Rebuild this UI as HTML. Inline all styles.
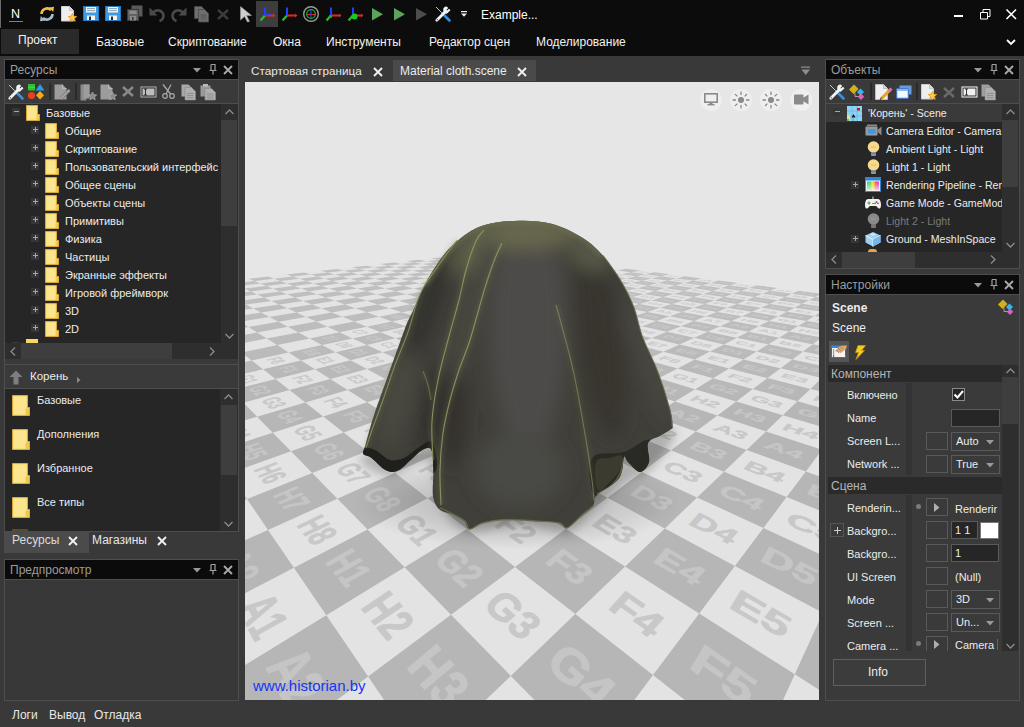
<!DOCTYPE html><html><head><meta charset="utf-8"><style>
*{box-sizing:border-box}
html,body{margin:0;padding:0}
body{width:1024px;height:727px;overflow:hidden;position:relative;background:#393939;font-family:"Liberation Sans",sans-serif;color:#e6e6e6;font-size:12px}
.a{position:absolute}
.t{position:absolute;white-space:nowrap;line-height:14px}
.hdr{position:absolute;background:#0b0b0b}
.ht{position:absolute;color:#9c9c9c;font-size:12px;white-space:nowrap;line-height:14px}
svg{position:absolute;overflow:visible}
</style></head><body><div class="a" style="left:0;top:0;width:1024px;height:56px;background:#0c0c0c"></div>
<div class="a" style="left:0;top:0;width:1px;height:28px;background:#6a6a6a"></div>
<div class="t" style="left:11px;top:7px;font-size:12.5px;color:#fff">N</div>
<div class="a" style="left:9px;top:21px;width:14px;height:1px;background:#1a9cf0"></div>
<div class="t" style="left:481px;top:8px;font-size:12px;color:#fff">Example...</div>
<div class="a" style="left:954px;top:15px;width:9px;height:2px;background:#fff"></div>
<svg style="left:980px;top:9px" width="11" height="11"><path d="M0.5 3.5h7v6.5h-7z M3 3.5V0.5h7v7H7.5" fill="none" stroke="#fff" stroke-width="1"/></svg>
<svg style="left:1006px;top:9px" width="11" height="11"><path d="M0.5 0.5L10 10M10 0.5L0.5 10" stroke="#fff" stroke-width="1.6"/></svg>
<div class="a" style="left:1px;top:29px;width:78px;height:25px;background:#2a2a2a"></div>
<div class="t" style="left:18px;top:33px;font-size:12px;color:#f2f2f2">Проект</div>
<div class="t" style="left:96px;top:35px;font-size:12px;color:#f2f2f2">Базовые</div>
<div class="t" style="left:168px;top:35px;font-size:12px;color:#f2f2f2">Скриптование</div>
<div class="t" style="left:273px;top:35px;font-size:12px;color:#f2f2f2">Окна</div>
<div class="t" style="left:326px;top:35px;font-size:12px;color:#f2f2f2">Инструменты</div>
<div class="t" style="left:429px;top:35px;font-size:12px;color:#f2f2f2">Редактор сцен</div>
<div class="t" style="left:536px;top:35px;font-size:12px;color:#f2f2f2">Моделирование</div>
<svg style="left:1006px;top:39px" width="10" height="7"><path d="M1 1L5 5L9 1" fill="none" stroke="#fff" stroke-width="1.8"/></svg>
<svg style="left:39px;top:6px" width="16" height="16" viewBox="0 0 16 16"><path d="M2.5 8A5.5 5.5 0 0 1 12 4.2" fill="none" stroke="#f2c040" stroke-width="2.6"/><path d="M10 1.5L15 0.8L14.2 6z" fill="#f2c040"/><path d="M13.5 8A5.5 5.5 0 0 1 4 11.8" fill="none" stroke="#a9bccd" stroke-width="2.6"/><path d="M6 14.5L1 15.2L1.8 10z" fill="#a9bccd"/></svg>
<svg style="left:61px;top:6px" width="16" height="16" viewBox="0 0 16 16"><path d="M0.5 0.5h8l4 4v10.5h-12z" fill="#eeeeee" stroke="#cfcfcf" stroke-width="1"/><path d="M8.5 0.5v4h4" fill="#dcdcdc" stroke="#bbb" stroke-width="0.8"/><path d="M11.5 7.5l1.3 2.7 2.9 0.3-2.2 1.9 0.7 2.9-2.7-1.5-2.7 1.5 0.7-2.9-2.2-1.9 2.9-0.3z" fill="#f8cf50" stroke="#e89a20" stroke-width="0.9"/></svg>
<svg style="left:83px;top:6px" width="16" height="15" viewBox="0 0 16 15"><rect x="0" y="0" width="16" height="15" rx="1" fill="#3c9be2"/><rect x="3" y="1" width="10" height="5.5" fill="#f4f4f4"/><path d="M4 2.6h8M4 4.6h8" stroke="#7a8a9a" stroke-width="0.8"/><rect x="4" y="9.5" width="8" height="5.5" fill="#f4f4f4"/><rect x="6" y="10.5" width="2" height="4" fill="#2a2a2a"/><path d="M0.5 0.5h15v14h-15z" fill="none" stroke="#2a7ac0" stroke-width="1"/></svg>
<svg style="left:105px;top:6px" width="16" height="15" viewBox="0 0 16 15"><rect x="0" y="0" width="16" height="15" rx="1" fill="#3c9be2"/><rect x="3" y="1" width="10" height="5.5" fill="#f4f4f4"/><path d="M4 2.6h8M4 4.6h8" stroke="#7a8a9a" stroke-width="0.8"/><rect x="4" y="9.5" width="8" height="5.5" fill="#f4f4f4"/><rect x="6" y="10.5" width="2" height="4" fill="#2a2a2a"/><path d="M0.5 0.5h15v14h-15z" fill="none" stroke="#2a7ac0" stroke-width="1"/></svg>
<svg style="left:127px;top:5px" width="16" height="16" viewBox="0 0 16 16"><rect x="4.5" y="0.5" width="11" height="11" fill="#5a5a5a"/><rect x="0.5" y="4.5" width="11" height="11" fill="#626262" stroke="#3a3a3a" stroke-width="1"/><rect x="2.5" y="5.5" width="7" height="3.5" fill="#8a8a8a"/><rect x="3" y="11" width="6" height="4.5" fill="#8a8a8a"/><rect x="5" y="12" width="1.5" height="3" fill="#333"/></svg>
<svg style="left:149px;top:6px" width="16" height="16" viewBox="0 0 16 16"><path d="M4 6.5A6 6 0 0 1 14.5 9.5A6 6 0 0 1 10.5 15" fill="none" stroke="#4a4a4a" stroke-width="2.6"/><path d="M0.5 1.5V9.5H8.5z" fill="#4a4a4a"/></svg>
<svg style="left:171px;top:6px" width="16" height="16" viewBox="0 0 16 16"><g transform="translate(16 0) scale(-1 1)"><path d="M4 6.5A6 6 0 0 1 14.5 9.5A6 6 0 0 1 10.5 15" fill="none" stroke="#4a4a4a" stroke-width="2.6"/><path d="M0.5 1.5V9.5H8.5z" fill="#4a4a4a"/></g></svg>
<svg style="left:194px;top:6px" width="15" height="16" viewBox="0 0 15 16"><path d="M0.5 0.5h7l3 3v9h-10z" fill="#6e6e6e" stroke="#4a4a4a" stroke-width="0.8"/><path d="M4.5 3.5h6l4 4v8.5h-10z" fill="#6e6e6e" stroke="#4a4a4a" stroke-width="0.8"/><path d="M6.5 9h6M6.5 11h6M6.5 13h6" stroke="#505050" stroke-width="0.9"/></svg>
<svg style="left:217px;top:9px" width="12" height="11" viewBox="0 0 12 11"><path d="M1 1L11 10M11 1L1 10" stroke="#3c3c3c" stroke-width="2.4"/></svg>
<svg style="left:240px;top:6px" width="12" height="16" viewBox="0 0 12 16"><path d="M0.5 0.5L11.5 9.5H6.5L9.5 15.5L7.5 16L4.5 10.5L0.5 14z" fill="#cfcfcf" stroke="#9a9a9a" stroke-width="0.6"/></svg>
<div class="a" style="left:256px;top:1px;width:22px;height:26px;background:#3d3d3d"></div>
<svg style="left:259px;top:6px" width="18" height="18" viewBox="0 0 18 18"><path d="M6 9.5L1.5 14.5" stroke="#1ec81e" stroke-width="2.2"/><path d="M6 1.5V9.5" stroke="#2040ff" stroke-width="2"/><path d="M6 9.5H14" stroke="#f02020" stroke-width="2"/><path d="M14 7.5L16.5 9.5L14 11.5z" fill="#f02020"/><path d="M6 9.5L12 7.5" stroke="#2040ff" stroke-width="1.4"/></svg>
<svg style="left:281px;top:6px" width="18" height="18" viewBox="0 0 18 18"><path d="M6 9.5L1.5 14.5" stroke="#1ec81e" stroke-width="2.2"/><path d="M6 1.5V9.5" stroke="#2040ff" stroke-width="2"/><path d="M6 9.5H14" stroke="#f02020" stroke-width="2"/><path d="M14 7.5L16.5 9.5L14 11.5z" fill="#f02020"/></svg>
<svg style="left:302px;top:5px" width="18" height="18" viewBox="0 0 18 18"><circle cx="9" cy="9" r="7.3" fill="none" stroke="#9a9a9a" stroke-width="1.4"/><circle cx="9" cy="9" r="4.3" fill="none" stroke="#20b020" stroke-width="1.2"/><path d="M5 9.5h8" stroke="#e02020" stroke-width="1.2"/><path d="M9 5v8" stroke="#2040ff" stroke-width="1.2"/></svg>
<svg style="left:325px;top:6px" width="18" height="18" viewBox="0 0 18 18"><path d="M6 9.5L1.5 14.5" stroke="#1ec81e" stroke-width="2.2"/><path d="M6 1.5V9.5" stroke="#2040ff" stroke-width="2"/><path d="M6 9.5H14" stroke="#f02020" stroke-width="2"/><path d="M14 7.5L16.5 9.5L14 11.5z" fill="#f02020"/><path d="M4 10l3 1" stroke="#20b020" stroke-width="2"/></svg>
<svg style="left:347px;top:6px" width="18" height="18" viewBox="0 0 18 18"><path d="M6 9.5L1.5 14.5" stroke="#1ec81e" stroke-width="2.2"/><path d="M6 1.5V9.5" stroke="#2040ff" stroke-width="2"/><path d="M6 9.5H14" stroke="#f02020" stroke-width="2"/><path d="M14 7.5L16.5 9.5L14 11.5z" fill="#f02020"/><circle cx="7.5" cy="10.5" r="3" fill="#1ec81e"/></svg>
<svg style="left:372px;top:8px" width="12" height="13" viewBox="0 0 12 13"><path d="M0 0L11 6.3L0 12.6z" fill="#5aa55a"/></svg>
<svg style="left:394px;top:8px" width="12" height="13" viewBox="0 0 12 13"><path d="M0 0L11 6.3L0 12.6z" fill="#5aa55a"/></svg>
<svg style="left:416px;top:8px" width="12" height="13" viewBox="0 0 12 13"><path d="M0 0L11 6.3L0 12.6z" fill="#4d4d4d"/></svg>
<svg style="left:435px;top:6px" width="16" height="16" viewBox="0 0 16 16"><path d="M1 1L7.5 7.5" stroke="#c8c8c8" stroke-width="1"/><path d="M7.5 7.5L14.5 14.5" stroke="#3c8ee0" stroke-width="2.6" stroke-linecap="round"/><path d="M1.8 14.2L9.5 6.5" stroke="#f4f4f4" stroke-width="2.8" stroke-linecap="round"/><circle cx="2.3" cy="13.7" r="0.7" fill="#666"/><path d="M8.2 4.2A3.6 3.6 0 0 0 11.8 7.8L15.5 4.3L14 2.8L12 4.6L11.4 4L13.2 2L11.7 0.5A3.6 3.6 0 0 0 8.2 4.2z" fill="#f4f4f4"/></svg>
<svg style="left:461px;top:11px" width="6" height="7" viewBox="0 0 6 7"><path d="M0 0.6h6" stroke="#eee" stroke-width="1.2"/><path d="M0 2.5h6L3 5.8z" fill="#eee"/></svg>
<div class="a" style="left:4px;top:59px;width:235px;height:473px;border:1px solid #4e4e4e;background:#3a3a3a"></div>
<div class="hdr" style="left:5px;top:60px;width:233px;height:19px"></div><div class="ht" style="left:10px;top:63px">Ресурсы</div><svg style="left:193px;top:68px" width="8" height="5"><path d="M0 0h8L4 4.5z" fill="#9a9a9a"/></svg><svg style="left:209px;top:64px" width="8" height="11"><path d="M2 0.5h4v5.5M2 0.5v5.5M0.5 6.5h7M4 6.5v4" fill="none" stroke="#a0a0a0" stroke-width="1.2"/></svg><svg style="left:223px;top:65px" width="10" height="10"><path d="M1 1L9 9M9 1L1 9" stroke="#a8a8a8" stroke-width="1.9"/></svg>
<div class="a" style="left:5px;top:79px;width:233px;height:1px;background:#4e4e4e"></div>
<div class="a" style="left:5px;top:103px;width:233px;height:1px;background:#4e4e4e"></div>
<div class="a" style="left:5px;top:104px;width:216px;height:239px;background:#262626"></div>
<div class="a" style="left:221px;top:104px;width:17px;height:239px;background:#2e2e2e"></div>
<div class="a" style="left:221px;top:120px;width:16px;height:106px;background:#3e3e3e"></div>
<svg style="left:225px;top:109px" width="9" height="6"><path d="M0.5 5L4.5 1L8.5 5" fill="none" stroke="#8c8c8c" stroke-width="1.3"/></svg>
<svg style="left:225px;top:333px" width="9" height="6"><path d="M0.5 1L4.5 5L8.5 1" fill="none" stroke="#8c8c8c" stroke-width="1.3"/></svg>
<div class="a" style="left:5px;top:343px;width:233px;height:16px;background:#2e2e2e"></div>
<div class="a" style="left:21px;top:343px;width:151px;height:16px;background:#3e3e3e"></div>
<svg style="left:10px;top:347px" width="6" height="9"><path d="M5 0.5L1 4.5L5 8.5" fill="none" stroke="#8c8c8c" stroke-width="1.3"/></svg>
<svg style="left:209px;top:347px" width="6" height="9"><path d="M1 0.5L5 4.5L1 8.5" fill="none" stroke="#8c8c8c" stroke-width="1.3"/></svg>
<div class="a" style="left:12px;top:108px;width:8px;height:8px;background:#363636"></div><div class="a" style="left:14px;top:111px;width:5px;height:1px;background:#a8a8a8"></div>
<svg style="left:26px;top:105px" width="14" height="16"><defs></defs><path d="M0.5 0.5h11v9h2v6h-13z" fill="#f7d867" stroke="#d9a93a" stroke-width="1"/><path d="M1.5 1.5h9v9h2v4h-11z" fill="#fbe58f"/><path d="M10.5 10.5h2.5v4.5h-2.5z" fill="#f0c84a"/></svg>
<div class="t" style="left:46px;top:106px;font-size:11px;color:#ececec">Базовые</div>
<div class="a" style="left:31px;top:126px;width:8px;height:8px;background:#363636"></div><div class="a" style="left:33px;top:129px;width:5px;height:1px;background:#a8a8a8"></div><div class="a" style="left:35px;top:127px;width:1px;height:5px;background:#a8a8a8"></div>
<svg style="left:45px;top:123px" width="14" height="16"><defs></defs><path d="M0.5 0.5h11v9h2v6h-13z" fill="#f7d867" stroke="#d9a93a" stroke-width="1"/><path d="M1.5 1.5h9v9h2v4h-11z" fill="#fbe58f"/><path d="M10.5 10.5h2.5v4.5h-2.5z" fill="#f0c84a"/></svg>
<div class="t" style="left:65px;top:124px;font-size:11px;color:#ececec">Общие</div>
<div class="a" style="left:31px;top:144px;width:8px;height:8px;background:#363636"></div><div class="a" style="left:33px;top:147px;width:5px;height:1px;background:#a8a8a8"></div><div class="a" style="left:35px;top:145px;width:1px;height:5px;background:#a8a8a8"></div>
<svg style="left:45px;top:141px" width="14" height="16"><defs></defs><path d="M0.5 0.5h11v9h2v6h-13z" fill="#f7d867" stroke="#d9a93a" stroke-width="1"/><path d="M1.5 1.5h9v9h2v4h-11z" fill="#fbe58f"/><path d="M10.5 10.5h2.5v4.5h-2.5z" fill="#f0c84a"/></svg>
<div class="t" style="left:65px;top:142px;font-size:11px;color:#ececec">Скриптование</div>
<div class="a" style="left:31px;top:162px;width:8px;height:8px;background:#363636"></div><div class="a" style="left:33px;top:165px;width:5px;height:1px;background:#a8a8a8"></div><div class="a" style="left:35px;top:163px;width:1px;height:5px;background:#a8a8a8"></div>
<svg style="left:45px;top:159px" width="14" height="16"><defs></defs><path d="M0.5 0.5h11v9h2v6h-13z" fill="#f7d867" stroke="#d9a93a" stroke-width="1"/><path d="M1.5 1.5h9v9h2v4h-11z" fill="#fbe58f"/><path d="M10.5 10.5h2.5v4.5h-2.5z" fill="#f0c84a"/></svg>
<div class="t" style="left:65px;top:160px;font-size:11px;color:#ececec">Пользовательский интерфейс</div>
<div class="a" style="left:31px;top:180px;width:8px;height:8px;background:#363636"></div><div class="a" style="left:33px;top:183px;width:5px;height:1px;background:#a8a8a8"></div><div class="a" style="left:35px;top:181px;width:1px;height:5px;background:#a8a8a8"></div>
<svg style="left:45px;top:177px" width="14" height="16"><defs></defs><path d="M0.5 0.5h11v9h2v6h-13z" fill="#f7d867" stroke="#d9a93a" stroke-width="1"/><path d="M1.5 1.5h9v9h2v4h-11z" fill="#fbe58f"/><path d="M10.5 10.5h2.5v4.5h-2.5z" fill="#f0c84a"/></svg>
<div class="t" style="left:65px;top:178px;font-size:11px;color:#ececec">Общее сцены</div>
<div class="a" style="left:31px;top:198px;width:8px;height:8px;background:#363636"></div><div class="a" style="left:33px;top:201px;width:5px;height:1px;background:#a8a8a8"></div><div class="a" style="left:35px;top:199px;width:1px;height:5px;background:#a8a8a8"></div>
<svg style="left:45px;top:195px" width="14" height="16"><defs></defs><path d="M0.5 0.5h11v9h2v6h-13z" fill="#f7d867" stroke="#d9a93a" stroke-width="1"/><path d="M1.5 1.5h9v9h2v4h-11z" fill="#fbe58f"/><path d="M10.5 10.5h2.5v4.5h-2.5z" fill="#f0c84a"/></svg>
<div class="t" style="left:65px;top:196px;font-size:11px;color:#ececec">Объекты сцены</div>
<div class="a" style="left:31px;top:216px;width:8px;height:8px;background:#363636"></div><div class="a" style="left:33px;top:219px;width:5px;height:1px;background:#a8a8a8"></div><div class="a" style="left:35px;top:217px;width:1px;height:5px;background:#a8a8a8"></div>
<svg style="left:45px;top:213px" width="14" height="16"><defs></defs><path d="M0.5 0.5h11v9h2v6h-13z" fill="#f7d867" stroke="#d9a93a" stroke-width="1"/><path d="M1.5 1.5h9v9h2v4h-11z" fill="#fbe58f"/><path d="M10.5 10.5h2.5v4.5h-2.5z" fill="#f0c84a"/></svg>
<div class="t" style="left:65px;top:214px;font-size:11px;color:#ececec">Примитивы</div>
<div class="a" style="left:31px;top:234px;width:8px;height:8px;background:#363636"></div><div class="a" style="left:33px;top:237px;width:5px;height:1px;background:#a8a8a8"></div><div class="a" style="left:35px;top:235px;width:1px;height:5px;background:#a8a8a8"></div>
<svg style="left:45px;top:231px" width="14" height="16"><defs></defs><path d="M0.5 0.5h11v9h2v6h-13z" fill="#f7d867" stroke="#d9a93a" stroke-width="1"/><path d="M1.5 1.5h9v9h2v4h-11z" fill="#fbe58f"/><path d="M10.5 10.5h2.5v4.5h-2.5z" fill="#f0c84a"/></svg>
<div class="t" style="left:65px;top:232px;font-size:11px;color:#ececec">Физика</div>
<div class="a" style="left:31px;top:252px;width:8px;height:8px;background:#363636"></div><div class="a" style="left:33px;top:255px;width:5px;height:1px;background:#a8a8a8"></div><div class="a" style="left:35px;top:253px;width:1px;height:5px;background:#a8a8a8"></div>
<svg style="left:45px;top:249px" width="14" height="16"><defs></defs><path d="M0.5 0.5h11v9h2v6h-13z" fill="#f7d867" stroke="#d9a93a" stroke-width="1"/><path d="M1.5 1.5h9v9h2v4h-11z" fill="#fbe58f"/><path d="M10.5 10.5h2.5v4.5h-2.5z" fill="#f0c84a"/></svg>
<div class="t" style="left:65px;top:250px;font-size:11px;color:#ececec">Частицы</div>
<div class="a" style="left:31px;top:270px;width:8px;height:8px;background:#363636"></div><div class="a" style="left:33px;top:273px;width:5px;height:1px;background:#a8a8a8"></div><div class="a" style="left:35px;top:271px;width:1px;height:5px;background:#a8a8a8"></div>
<svg style="left:45px;top:267px" width="14" height="16"><defs></defs><path d="M0.5 0.5h11v9h2v6h-13z" fill="#f7d867" stroke="#d9a93a" stroke-width="1"/><path d="M1.5 1.5h9v9h2v4h-11z" fill="#fbe58f"/><path d="M10.5 10.5h2.5v4.5h-2.5z" fill="#f0c84a"/></svg>
<div class="t" style="left:65px;top:268px;font-size:11px;color:#ececec">Экранные эффекты</div>
<div class="a" style="left:31px;top:288px;width:8px;height:8px;background:#363636"></div><div class="a" style="left:33px;top:291px;width:5px;height:1px;background:#a8a8a8"></div><div class="a" style="left:35px;top:289px;width:1px;height:5px;background:#a8a8a8"></div>
<svg style="left:45px;top:285px" width="14" height="16"><defs></defs><path d="M0.5 0.5h11v9h2v6h-13z" fill="#f7d867" stroke="#d9a93a" stroke-width="1"/><path d="M1.5 1.5h9v9h2v4h-11z" fill="#fbe58f"/><path d="M10.5 10.5h2.5v4.5h-2.5z" fill="#f0c84a"/></svg>
<div class="t" style="left:65px;top:286px;font-size:11px;color:#ececec">Игровой фреймворк</div>
<div class="a" style="left:31px;top:306px;width:8px;height:8px;background:#363636"></div><div class="a" style="left:33px;top:309px;width:5px;height:1px;background:#a8a8a8"></div><div class="a" style="left:35px;top:307px;width:1px;height:5px;background:#a8a8a8"></div>
<svg style="left:45px;top:303px" width="14" height="16"><defs></defs><path d="M0.5 0.5h11v9h2v6h-13z" fill="#f7d867" stroke="#d9a93a" stroke-width="1"/><path d="M1.5 1.5h9v9h2v4h-11z" fill="#fbe58f"/><path d="M10.5 10.5h2.5v4.5h-2.5z" fill="#f0c84a"/></svg>
<div class="t" style="left:65px;top:304px;font-size:11px;color:#ececec">3D</div>
<div class="a" style="left:31px;top:324px;width:8px;height:8px;background:#363636"></div><div class="a" style="left:33px;top:327px;width:5px;height:1px;background:#a8a8a8"></div><div class="a" style="left:35px;top:325px;width:1px;height:5px;background:#a8a8a8"></div>
<svg style="left:45px;top:321px" width="14" height="16"><defs></defs><path d="M0.5 0.5h11v9h2v6h-13z" fill="#f7d867" stroke="#d9a93a" stroke-width="1"/><path d="M1.5 1.5h9v9h2v4h-11z" fill="#fbe58f"/><path d="M10.5 10.5h2.5v4.5h-2.5z" fill="#f0c84a"/></svg>
<div class="t" style="left:65px;top:322px;font-size:11px;color:#ececec">2D</div>
<div class="a" style="left:26px;top:339px;width:12px;height:4px;background:#f7d867"></div>
<div class="a" style="left:12px;top:342px;width:8px;height:1px;background:#3a3a3a"></div>
<div class="a" style="left:5px;top:364px;width:233px;height:1px;background:#4e4e4e"></div>
<div class="a" style="left:5px;top:388px;width:233px;height:1px;background:#4e4e4e"></div>
<svg style="left:9px;top:370px" width="14" height="15"><path d="M7 0.5L13.5 7H9.5V14.5H4.5V7H0.5z" fill="#7e7e7e"/></svg>
<div class="t" style="left:30px;top:369px;font-size:11.5px;color:#ececec">Корень</div>
<svg style="left:77px;top:377px" width="4" height="6"><path d="M0 0L3.5 3L0 6z" fill="#8a8a8a"/></svg>
<div class="a" style="left:5px;top:389px;width:215px;height:142px;background:#262626"></div>
<div class="a" style="left:220px;top:389px;width:18px;height:142px;background:#2e2e2e"></div>
<div class="a" style="left:221px;top:405px;width:16px;height:70px;background:#3e3e3e"></div>
<svg style="left:224px;top:394px" width="9" height="6"><path d="M0.5 5L4.5 1L8.5 5" fill="none" stroke="#8c8c8c" stroke-width="1.3"/></svg>
<svg style="left:224px;top:521px" width="9" height="6"><path d="M0.5 1L4.5 5L8.5 1" fill="none" stroke="#8c8c8c" stroke-width="1.3"/></svg>
<svg style="left:12px;top:395px" width="18" height="21"><path d="M0.5 0.5h15v12h2v8h-17z" fill="#f7d867" stroke="#d9a93a" stroke-width="1"/><path d="M1.5 1.5h13v12h2v6h-15z" fill="#fbe58f"/><path d="M13.5 13.5h3.5v6.5h-3.5z" fill="#f0c84a"/></svg>
<div class="t" style="left:37px;top:393px;font-size:11px;color:#ececec">Базовые</div>
<svg style="left:12px;top:429px" width="18" height="21"><path d="M0.5 0.5h15v12h2v8h-17z" fill="#f7d867" stroke="#d9a93a" stroke-width="1"/><path d="M1.5 1.5h13v12h2v6h-15z" fill="#fbe58f"/><path d="M13.5 13.5h3.5v6.5h-3.5z" fill="#f0c84a"/></svg>
<div class="t" style="left:37px;top:427px;font-size:11px;color:#ececec">Дополнения</div>
<svg style="left:12px;top:463px" width="18" height="21"><path d="M0.5 0.5h15v12h2v8h-17z" fill="#f7d867" stroke="#d9a93a" stroke-width="1"/><path d="M1.5 1.5h13v12h2v6h-15z" fill="#fbe58f"/><path d="M13.5 13.5h3.5v6.5h-3.5z" fill="#f0c84a"/></svg>
<div class="t" style="left:37px;top:461px;font-size:11px;color:#ececec">Избранное</div>
<svg style="left:12px;top:497px" width="18" height="21"><path d="M0.5 0.5h15v12h2v8h-17z" fill="#f7d867" stroke="#d9a93a" stroke-width="1"/><path d="M1.5 1.5h13v12h2v6h-15z" fill="#fbe58f"/><path d="M13.5 13.5h3.5v6.5h-3.5z" fill="#f0c84a"/></svg>
<div class="t" style="left:37px;top:495px;font-size:11px;color:#ececec">Все типы</div>
<div class="a" style="left:12px;top:529px;width:16px;height:2px;background:#5a4a2a"></div>
<div class="a" style="left:4px;top:531px;width:85px;height:22px;background:#4b4b4b"></div>
<div class="t" style="left:12px;top:533px;font-size:12px;color:#dcdcdc">Ресурсы</div>
<svg style="left:68px;top:536px" width="10" height="10"><path d="M1 1L9 9M9 1L1 9" stroke="#f0f0f0" stroke-width="1.9"/></svg>
<div class="t" style="left:92px;top:533px;font-size:12px;color:#e8e8e8">Магазины</div>
<svg style="left:157px;top:536px" width="10" height="10"><path d="M1 1L9 9M9 1L1 9" stroke="#f0f0f0" stroke-width="1.9"/></svg>
<div class="a" style="left:4px;top:559px;width:235px;height:142px;border:1px solid #4e4e4e;background:#383838"></div>
<div class="hdr" style="left:5px;top:560px;width:233px;height:19px"></div><div class="ht" style="left:10px;top:563px">Предпросмотр</div><svg style="left:193px;top:568px" width="8" height="5"><path d="M0 0h8L4 4.5z" fill="#9a9a9a"/></svg><svg style="left:209px;top:564px" width="8" height="11"><path d="M2 0.5h4v5.5M2 0.5v5.5M0.5 6.5h7M4 6.5v4" fill="none" stroke="#a0a0a0" stroke-width="1.2"/></svg><svg style="left:223px;top:565px" width="10" height="10"><path d="M1 1L9 9M9 1L1 9" stroke="#a8a8a8" stroke-width="1.9"/></svg>
<div class="a" style="left:5px;top:579px;width:233px;height:1px;background:#4e4e4e"></div>
<div class="t" style="left:12px;top:708px;font-size:12px;color:#e8e8e8">Логи</div>
<div class="t" style="left:49px;top:708px;font-size:12px;color:#e8e8e8">Вывод</div>
<div class="t" style="left:94px;top:708px;font-size:12px;color:#e8e8e8">Отладка</div>
<svg style="left:8px;top:84px" width="16" height="16" viewBox="0 0 16 16"><path d="M1 1L7.5 7.5" stroke="#c8c8c8" stroke-width="1"/><path d="M7.5 7.5L14.5 14.5" stroke="#3c8ee0" stroke-width="2.6" stroke-linecap="round"/><path d="M1.8 14.2L9.5 6.5" stroke="#f4f4f4" stroke-width="2.8" stroke-linecap="round"/><circle cx="2.3" cy="13.7" r="0.7" fill="#666"/><path d="M8.2 4.2A3.6 3.6 0 0 0 11.8 7.8L15.5 4.3L14 2.8L12 4.6L11.4 4L13.2 2L11.7 0.5A3.6 3.6 0 0 0 8.2 4.2z" fill="#f4f4f4"/></svg>
<svg style="left:28px;top:84px" width="17" height="16" viewBox="0 0 17 16"><rect x="0" y="0" width="7" height="6.5" fill="#2ec02e"/><path d="M0 3.2h7" stroke="#5ae05a" stroke-width="0.8"/><path d="M12 0L16.5 6.5H7.5z" fill="#2a9af0"/><circle cx="3.5" cy="11.5" r="3.6" fill="#e8401a"/><path d="M12 7L16 11.3L12 15.6L8 11.3z" fill="#f6aa1c"/></svg>
<div class="a" style="left:49px;top:83px;width:2px;height:17px;background:#2a2a2a"></div>
<svg style="left:54px;top:84px" width="17" height="16" viewBox="0 0 17 16"><path d="M0.5 0.5h8l4 4v11h-12z" fill="#9c9c9c"/><path d="M8.5 0.5v4h4" fill="none" stroke="#bcbcbc" stroke-width="0.8"/><path d="M7 14.5L15.5 6" stroke="#7c7c7c" stroke-width="3.2"/><path d="M7 14.5L15.5 6" stroke="#aaaaaa" stroke-width="1.6"/></svg>
<div class="a" style="left:75px;top:83px;width:2px;height:17px;background:#2a2a2a"></div>
<svg style="left:80px;top:84px" width="17" height="17" viewBox="0 0 17 17"><path d="M0.5 0.5h9v12h-3v4h-6z" fill="#8a8a8a"/><path d="M3.5 0.5h6v14h-6z" fill="#9c9c9c"/><path d="M12.5 8l1.3 2.7 2.9 0.3-2.2 1.9 0.7 2.9-2.7-1.5-2.7 1.5 0.7-2.9-2.2-1.9 2.9-0.3z" fill="#8a8a8a" stroke="#b0b0b0" stroke-width="0.7"/></svg>
<svg style="left:100px;top:84px" width="17" height="17" viewBox="0 0 17 17"><path d="M0.5 0.5h8l4 4v11h-12z" fill="#9c9c9c"/><path d="M8.5 0.5v4h4" fill="none" stroke="#c0c0c0" stroke-width="0.8"/><path d="M12.5 8l1.3 2.7 2.9 0.3-2.2 1.9 0.7 2.9-2.7-1.5-2.7 1.5 0.7-2.9-2.2-1.9 2.9-0.3z" fill="#8a8a8a" stroke="#b0b0b0" stroke-width="0.7"/></svg>
<svg style="left:122px;top:86px" width="12" height="11" viewBox="0 0 12 11"><path d="M1 1L11 10M11 1L1 10" stroke="#8a8a8a" stroke-width="2.4"/></svg>
<svg style="left:140px;top:86px" width="17" height="12" viewBox="0 0 17 12"><rect x="0.5" y="0.5" width="16" height="11" fill="#b5b5b5"/><rect x="1.5" y="1.5" width="14" height="9" fill="#2a2a2a"/><rect x="2.5" y="2.5" width="12" height="7" fill="#bdbdbd"/><path d="M4 3h3M5.5 3v6M4 9h3" stroke="#222" stroke-width="0.9"/></svg>
<svg style="left:162px;top:84px" width="13" height="15" viewBox="0 0 13 15"><path d="M1 0.5L8.5 10M9 0.5L4 10" stroke="#a8a8a8" stroke-width="1.3"/><circle cx="3" cy="12" r="2.3" fill="none" stroke="#a8a8a8" stroke-width="1.2"/><circle cx="10" cy="12" r="2.3" fill="none" stroke="#a8a8a8" stroke-width="1.2"/></svg>
<svg style="left:181px;top:84px" width="15" height="16" viewBox="0 0 15 16"><path d="M0.5 0.5h7l3 3v9h-10z" fill="#a8a8a8"/><path d="M4 3.5h6.5l4 4v8.5h-10.5z" fill="#b0b0b0" stroke="#8a8a8a" stroke-width="0.6"/><path d="M6 9.5h6.5M6 11.5h6.5M6 13.5h6.5" stroke="#8c8c8c" stroke-width="0.9"/></svg>
<svg style="left:200px;top:84px" width="16" height="16" viewBox="0 0 16 16"><rect x="0.5" y="1.5" width="10" height="11" fill="#9a9a9a"/><rect x="3" y="0" width="5" height="2.5" fill="#bbb"/><path d="M5 4.5h6.5l4 4v7.5h-10.5z" fill="#b0b0b0" stroke="#8a8a8a" stroke-width="0.6"/><path d="M7 10h6.5M7 12h6.5M7 14h6.5" stroke="#8c8c8c" stroke-width="0.9"/></svg>
<div class="t" style="left:251px;top:64px;font-size:11.7px;color:#e8e8e8">Стартовая страница</div>
<svg style="left:373px;top:67px" width="10" height="10"><path d="M1 1L9 9M9 1L1 9" stroke="#f0f0f0" stroke-width="1.9"/></svg>
<div class="a" style="left:393px;top:60px;width:143px;height:21px;background:#4a4a4a"></div>
<div class="t" style="left:400px;top:64px;font-size:12px;color:#ececec">Material cloth.scene</div>
<svg style="left:517px;top:67px" width="10" height="10"><path d="M1 1L9 9M9 1L1 9" stroke="#f0f0f0" stroke-width="1.9"/></svg>
<svg style="left:801px;top:66px" width="10" height="10"><path d="M0 0.5h9v1.3h-9z M0.5 3.5h8.5L4.75 9z" fill="#8e8e8e"/></svg>
<div class="a" style="left:245px;top:82px;width:574px;height:618px;background:#e6e6e6;overflow:hidden"><svg style="left:0;top:0" width="574" height="618" viewBox="0 0 574 618">
<defs><linearGradient id="fog" gradientUnits="userSpaceOnUse" x1="0" y1="170" x2="0" y2="330"><stop offset="0" stop-color="#e6e6e6" stop-opacity="0.25"/><stop offset="1" stop-color="#e6e6e6" stop-opacity="0"/></linearGradient><radialGradient id="shad" cx="0.5" cy="0.5" r="0.5"><stop offset="0" stop-color="#000" stop-opacity="0.28"/><stop offset="0.6" stop-color="#000" stop-opacity="0.12"/><stop offset="1" stop-color="#000" stop-opacity="0"/></radialGradient></defs>
<rect width="574" height="618" fill="#e6e6e6"/>
<polygon points="247.7,169.6 -5.0,197.8 -5.0,623.0 579.0,623.0 579.0,212.1" fill="#e3e3e3"/>
<path d="M255.8,170.7 246.4,171.7 254.7,172.9 264.2,171.7zM272.9,172.8 263.4,174.0 272.4,175.2 281.9,174.0zM291.2,175.2 281.8,176.5 291.5,177.8 301.0,176.4zM311.1,177.7 301.6,179.1 312.2,180.5 321.6,179.1zM332.6,180.5 323.2,182.0 334.7,183.5 344.0,182.0zM355.9,183.5 346.7,185.1 359.2,186.8 368.4,185.1zM381.4,186.8 372.3,188.5 386.0,190.3 395.0,188.5zM409.3,190.3 400.4,192.3 415.6,194.3 424.3,192.2zM440.0,194.2 431.5,196.4 448.2,198.6 456.5,196.4zM473.8,198.6 465.8,201.0 484.4,203.4 492.2,200.9zM511.5,203.4 504.1,206.1 524.9,208.8 531.9,206.0zM553.5,208.8 546.9,211.8 570.4,214.9 576.5,211.7zM238.3,170.7 228.6,171.8 236.6,172.9 246.4,171.7zM254.7,172.9 244.9,174.0 253.6,175.2 263.4,174.0zM272.4,175.2 262.6,176.5 271.9,177.8 281.8,176.5zM291.5,177.8 281.7,179.1 291.8,180.5 301.6,179.1zM312.2,180.5 302.4,182.0 313.4,183.5 323.2,182.0zM334.7,183.5 324.9,185.1 337.0,186.8 346.7,185.1zM359.2,186.8 349.6,188.5 362.8,190.4 372.3,188.5zM386.0,190.3 376.6,192.3 391.1,194.3 400.4,192.3zM415.6,194.3 406.4,196.4 422.5,198.6 431.5,196.4zM448.2,198.6 439.4,201.0 457.3,203.5 465.8,201.0zM484.4,203.4 476.2,206.1 496.2,208.9 504.1,206.1zM524.9,208.8 517.4,211.8 539.9,214.9 546.9,211.8zM570.4,214.9 563.9,218.2 589.5,221.8 595.3,218.2zM236.6,172.9 226.4,174.0 234.8,175.2 244.9,174.0zM253.6,175.2 243.4,176.5 252.4,177.8 262.6,176.5zM271.9,177.8 261.7,179.1 271.4,180.5 281.7,179.1zM291.8,180.5 281.6,182.0 292.1,183.5 302.4,182.0zM313.4,183.5 303.2,185.1 314.7,186.8 324.9,185.1zM337.0,186.8 326.8,188.6 339.5,190.4 349.6,188.5zM362.8,190.4 352.8,192.3 366.7,194.3 376.6,192.3zM391.1,194.3 381.4,196.4 396.8,198.7 406.4,196.4zM422.5,198.6 413.0,201.0 430.2,203.5 439.4,201.0zM457.3,203.5 448.3,206.1 467.5,208.9 476.2,206.1zM496.2,208.9 487.9,211.8 509.5,215.0 517.4,211.8zM539.9,214.9 532.5,218.3 557.0,221.8 563.9,218.2zM218.5,172.9 208.0,174.1 215.9,175.3 226.4,174.0zM234.8,175.2 224.2,176.5 232.8,177.8 243.4,176.5zM252.4,177.8 241.7,179.2 251.0,180.6 261.7,179.1zM271.4,180.5 260.7,182.0 270.9,183.6 281.6,182.0zM292.1,183.5 281.4,185.2 292.5,186.8 303.2,185.1zM314.7,186.8 304.1,188.6 316.2,190.4 326.8,188.6zM339.5,190.4 328.9,192.3 342.3,194.3 352.8,192.3zM366.7,194.3 356.3,196.5 371.1,198.7 381.4,196.4zM396.8,198.7 386.6,201.0 403.1,203.5 413.0,201.0zM430.2,203.5 420.4,206.1 438.8,208.9 448.3,206.1zM467.5,208.9 458.3,211.9 479.0,215.0 487.9,211.8zM509.5,215.0 501.0,218.3 524.5,221.9 532.5,218.3zM557.0,221.8 549.6,225.7 576.5,229.7 583.2,225.6zM215.9,175.3 205.0,176.5 213.2,177.8 224.2,176.5zM232.8,177.8 221.7,179.2 230.6,180.6 241.7,179.2zM251.0,180.6 239.9,182.0 249.6,183.6 260.7,182.0zM270.9,183.6 259.7,185.2 270.3,186.8 281.4,185.2zM292.5,186.8 281.3,188.6 292.9,190.4 304.1,188.6zM316.2,190.4 305.1,192.3 317.8,194.4 328.9,192.3zM342.3,194.3 331.2,196.5 345.3,198.7 356.3,196.5zM371.1,198.7 360.2,201.1 375.9,203.6 386.6,201.0zM403.1,203.5 392.5,206.2 410.1,209.0 420.4,206.1zM438.8,208.9 428.7,211.9 448.5,215.0 458.3,211.9zM479.0,215.0 469.5,218.4 492.0,221.9 501.0,218.3zM524.5,221.9 516.0,225.7 541.7,229.8 549.6,225.7zM576.5,229.7 569.3,234.1 599.1,238.8 605.4,234.1zM197.1,175.3 185.7,176.5 193.6,177.8 205.0,176.5zM213.2,177.8 201.7,179.2 210.2,180.6 221.7,179.2zM230.6,180.6 219.0,182.1 228.3,183.6 239.9,182.0zM249.6,183.6 237.9,185.2 248.0,186.9 259.7,185.2zM270.3,186.8 258.5,188.6 269.6,190.4 281.3,188.6zM292.9,190.4 281.2,192.4 293.3,194.4 305.1,192.3zM317.8,194.4 306.1,196.5 319.6,198.7 331.2,196.5zM345.3,198.7 333.8,201.1 348.7,203.6 360.2,201.1zM375.9,203.6 364.6,206.2 381.3,209.0 392.5,206.2zM410.1,209.0 399.1,211.9 417.9,215.1 428.7,211.9zM448.5,215.0 438.0,218.4 459.5,222.0 469.5,218.4zM492.0,221.9 482.3,225.8 506.9,229.8 516.0,225.7zM541.7,229.8 533.2,234.2 561.6,238.9 569.3,234.1zM193.6,177.8 181.7,179.2 189.8,180.6 201.7,179.2zM210.2,180.6 198.2,182.1 207.0,183.6 219.0,182.1zM228.3,183.6 216.1,185.2 225.7,186.9 237.9,185.2zM248.0,186.9 235.7,188.6 246.3,190.5 258.5,188.6zM269.6,190.4 257.3,192.4 268.8,194.4 281.2,192.4zM293.3,194.4 281.0,196.5 293.8,198.8 306.1,196.5zM319.6,198.7 307.3,201.1 321.5,203.6 333.8,201.1zM348.7,203.6 336.6,206.2 352.5,209.0 364.6,206.2zM381.3,209.0 369.4,212.0 387.4,215.1 399.1,211.9zM417.9,215.1 406.5,218.4 426.9,222.0 438.0,218.4zM459.5,222.0 448.7,225.8 472.0,229.9 482.3,225.8zM506.9,229.8 497.1,234.2 524.0,239.0 533.2,234.2zM561.6,238.9 553.2,244.0 584.7,249.5 592.2,244.0zM173.9,177.8 161.7,179.2 169.3,180.6 181.7,179.2zM189.8,180.6 177.3,182.1 185.6,183.6 198.2,182.1zM207.0,183.6 194.3,185.2 203.4,186.9 216.1,185.2zM225.7,186.9 212.9,188.7 222.9,190.5 235.7,188.6zM246.3,190.5 233.4,192.4 244.3,194.4 257.3,192.4zM268.8,194.4 255.9,196.6 268.0,198.8 281.0,196.5zM293.8,198.8 280.8,201.2 294.3,203.6 307.3,201.1zM321.5,203.6 308.6,206.3 323.7,209.1 336.6,206.2zM352.5,209.0 339.8,212.0 356.8,215.1 369.4,212.0zM387.4,215.1 375.0,218.5 394.3,222.0 406.5,218.4zM426.9,222.0 415.0,225.8 437.1,229.9 448.7,225.8zM472.0,229.9 460.9,234.3 486.5,239.0 497.1,234.2zM524.0,239.0 514.1,244.1 544.1,249.6 553.2,244.0zM584.7,249.5 576.6,255.6 612.1,262.1 619.0,255.5zM169.3,180.6 156.4,182.1 164.3,183.6 177.3,182.1zM185.6,183.6 172.5,185.2 181.1,186.9 194.3,185.2zM203.4,186.9 190.1,188.7 199.6,190.5 212.9,188.7zM222.9,190.5 209.5,192.4 219.8,194.5 233.4,192.4zM244.3,194.4 230.7,196.6 242.2,198.8 255.9,196.6zM268.0,198.8 254.3,201.2 267.1,203.7 280.8,201.2zM294.3,203.6 280.6,206.3 294.9,209.1 308.6,206.3zM323.7,209.1 310.1,212.0 326.2,215.2 339.8,212.0zM356.8,215.1 343.4,218.5 361.7,222.1 375.0,218.5zM394.3,222.0 381.2,225.9 402.2,230.0 415.0,225.8zM437.1,229.9 424.7,234.3 448.9,239.1 460.9,234.3zM486.5,239.0 475.1,244.2 503.4,249.7 514.1,244.1zM544.1,249.6 534.2,255.7 567.8,262.2 576.6,255.6zM148.9,180.6 135.5,182.1 143.0,183.7 156.4,182.1zM164.3,183.6 150.7,185.3 158.8,186.9 172.5,185.2zM181.1,186.9 167.3,188.7 176.2,190.5 190.1,188.7zM199.6,190.5 185.5,192.5 195.3,194.5 209.5,192.4zM219.8,194.5 205.6,196.6 216.4,198.8 230.7,196.6zM242.2,198.8 227.8,201.2 239.9,203.7 254.3,201.2zM267.1,203.7 252.6,206.3 266.1,209.1 280.6,206.3zM294.9,209.1 280.4,212.1 295.6,215.2 310.1,212.0zM326.2,215.2 311.8,218.6 329.0,222.1 343.4,218.5zM361.7,222.1 347.5,225.9 367.2,230.0 381.2,225.9zM402.2,230.0 388.4,234.4 411.3,239.1 424.7,234.3zM448.9,239.1 436.0,244.2 462.7,249.7 475.1,244.2zM503.4,249.7 491.7,255.7 523.4,262.3 534.2,255.7zM567.8,262.2 558.1,269.5 596.3,277.3 604.6,269.4zM143.0,183.7 128.9,185.3 136.5,187.0 150.7,185.3zM158.8,186.9 144.5,188.7 152.8,190.6 167.3,188.7zM176.2,190.5 161.6,192.5 170.8,194.5 185.5,192.5zM195.3,194.5 180.4,196.6 190.6,198.9 205.6,196.6zM216.4,198.8 201.3,201.2 212.6,203.7 227.8,201.2zM239.9,203.7 224.6,206.4 237.3,209.1 252.6,206.3zM266.1,209.1 250.7,212.1 265.0,215.2 280.4,212.1zM295.6,215.2 280.2,218.6 296.4,222.2 311.8,218.6zM329.0,222.1 313.7,226.0 332.2,230.1 347.5,225.9zM367.2,230.0 352.2,234.4 373.6,239.2 388.4,234.4zM411.3,239.1 396.8,244.3 421.9,249.8 436.0,244.2zM462.7,249.7 449.2,255.8 479.0,262.4 491.7,255.7zM523.4,262.3 511.6,269.5 547.4,277.4 558.1,269.5zM121.6,183.7 107.0,185.3 114.2,187.0 128.9,185.3zM136.5,187.0 121.6,188.7 129.4,190.6 144.5,188.7zM152.8,190.6 137.6,192.5 146.2,194.5 161.6,192.5zM170.8,194.5 155.2,196.7 164.8,198.9 180.4,196.6zM190.6,198.9 174.8,201.3 185.4,203.8 201.3,201.2zM212.6,203.7 196.6,206.4 208.4,209.2 224.6,206.4zM237.3,209.1 221.0,212.1 234.3,215.3 250.7,212.1zM265.0,215.2 248.5,218.6 263.7,222.2 280.2,218.6zM296.4,222.2 279.9,226.0 297.2,230.1 313.7,226.0zM332.2,230.1 315.9,234.5 336.0,239.2 352.2,234.4zM373.6,239.2 357.6,244.3 381.1,249.9 396.8,244.3zM421.9,249.8 406.7,255.9 434.5,262.4 449.2,255.8zM479.0,262.4 465.0,269.6 498.5,277.5 511.6,269.5zM547.4,277.4 535.6,286.3 576.8,296.0 587.1,286.2zM114.2,187.0 98.8,188.8 106.0,190.6 121.6,188.7zM129.4,190.6 113.6,192.5 121.6,194.6 137.6,192.5zM146.2,194.5 130.0,196.7 138.9,198.9 155.2,196.7zM164.8,198.9 148.2,201.3 158.1,203.8 174.8,201.3zM185.4,203.8 168.5,206.4 179.5,209.2 196.6,206.4zM208.4,209.2 191.2,212.2 203.6,215.3 221.0,212.1zM234.3,215.3 216.9,218.7 231.0,222.2 248.5,218.6zM263.7,222.2 246.0,226.1 262.2,230.2 279.9,226.0zM297.2,230.1 279.6,234.5 298.2,239.3 315.9,234.5zM336.0,239.2 318.4,244.4 340.3,249.9 357.6,244.3zM381.1,249.9 364.1,256.0 390.0,262.5 406.7,255.9zM434.5,262.4 418.4,269.7 449.6,277.6 465.0,269.6zM498.5,277.5 484.1,286.4 522.5,296.1 535.6,286.3zM576.8,296.0 565.4,306.9 613.6,319.2 622.8,306.8zM91.8,187.0 75.9,188.8 82.6,190.6 98.8,188.8zM106.0,190.6 89.7,192.5 97.1,194.6 113.6,192.5zM121.6,194.6 104.8,196.7 113.0,199.0 130.0,196.7zM138.9,198.9 121.7,201.3 130.8,203.8 148.2,201.3zM158.1,203.8 140.4,206.5 150.6,209.2 168.5,206.4zM179.5,209.2 161.4,212.2 172.9,215.4 191.2,212.2zM203.6,215.3 185.2,218.7 198.2,222.3 216.9,218.7zM231.0,222.2 212.2,226.1 227.1,230.2 246.0,226.1zM262.2,230.2 243.2,234.6 260.5,239.3 279.6,234.5zM298.2,239.3 279.2,244.5 299.4,250.0 318.4,244.4zM340.3,249.9 321.4,256.0 345.4,262.6 364.1,256.0zM390.0,262.5 371.7,269.8 400.6,277.7 418.4,269.7zM449.6,277.6 432.6,286.5 468.1,296.2 484.1,286.4zM522.5,296.1 507.8,307.1 552.5,319.3 565.4,306.9zM82.6,190.6 65.7,192.6 72.5,194.6 89.7,192.5zM97.1,194.6 79.6,196.7 87.1,199.0 104.8,196.7zM113.0,199.0 95.1,201.3 103.5,203.8 121.7,201.3zM130.8,203.8 112.3,206.5 121.7,209.3 140.4,206.5zM150.6,209.2 131.6,212.2 142.2,215.4 161.4,212.2zM172.9,215.4 153.5,218.7 165.5,222.3 185.2,218.7zM198.2,222.3 178.3,226.2 192.0,230.3 212.2,226.1zM227.1,230.2 206.8,234.7 222.7,239.4 243.2,234.6zM260.5,239.3 239.9,244.5 258.5,250.1 279.2,244.5zM299.4,250.0 278.7,256.1 300.8,262.7 321.4,256.0zM345.4,262.6 325.0,269.9 351.6,277.8 371.7,269.8zM400.6,277.7 381.0,286.6 413.6,296.3 432.6,286.5zM468.1,296.2 450.1,307.2 491.2,319.4 507.8,307.1zM552.5,319.3 537.8,333.3 591.0,349.2 603.1,333.2zM59.2,190.6 41.6,192.6 47.8,194.6 65.7,192.6zM72.5,194.6 54.4,196.8 61.2,199.0 79.6,196.7zM87.1,199.0 68.5,201.4 76.1,203.9 95.1,201.3zM103.5,203.8 84.2,206.5 92.8,209.3 112.3,206.5zM121.7,209.3 101.8,212.3 111.5,215.4 131.6,212.2zM142.2,215.4 121.7,218.8 132.7,222.4 153.5,218.7zM165.5,222.3 144.4,226.2 156.9,230.3 178.3,226.2zM192.0,230.3 170.4,234.7 184.9,239.4 206.8,234.7zM222.7,239.4 200.6,244.6 217.5,250.1 239.9,244.5zM258.5,250.1 236.0,256.2 256.1,262.8 278.7,256.1zM300.8,262.7 278.2,270.0 302.5,277.9 325.0,269.9zM351.6,277.8 329.3,286.7 359.1,296.4 381.0,286.6zM413.6,296.3 392.4,307.3 429.9,319.6 450.1,307.2zM491.2,319.4 472.4,333.5 521.0,349.4 537.8,333.3zM591.0,349.2 577.1,367.7 642.6,389.1 652.5,367.5zM47.8,194.6 29.1,196.8 35.3,199.0 54.4,196.8zM61.2,199.0 41.9,201.4 48.8,203.9 68.5,201.4zM76.1,203.9 56.1,206.5 63.8,209.3 84.2,206.5zM92.8,209.3 72.0,212.3 80.7,215.5 101.8,212.3zM111.5,215.4 90.0,218.8 99.9,222.4 121.7,218.8zM132.7,222.4 110.4,226.2 121.8,230.3 144.4,226.2zM156.9,230.3 133.9,234.8 147.1,239.5 170.4,234.7zM184.9,239.4 161.2,244.6 176.6,250.2 200.6,244.6zM217.5,250.1 193.2,256.2 211.4,262.8 236.0,256.2zM256.1,262.8 231.4,270.1 253.3,278.0 278.2,270.0zM302.5,277.9 277.6,286.8 304.5,296.5 329.3,286.7zM359.1,296.4 334.6,307.5 368.5,319.7 392.4,307.3zM429.9,319.6 407.0,333.7 450.9,349.6 472.4,333.5zM521.0,349.4 501.6,368.0 560.9,389.4 577.1,367.7zM23.2,194.6 3.8,196.8 9.4,199.1 29.1,196.8zM35.3,199.0 15.2,201.4 21.4,203.9 41.9,201.4zM48.8,203.9 27.9,206.6 34.8,209.4 56.1,206.5zM63.8,209.3 42.1,212.3 49.9,215.5 72.0,212.3zM80.7,215.5 58.2,218.9 67.0,222.5 90.0,218.8zM99.9,222.4 76.5,226.3 86.6,230.4 110.4,226.2zM121.8,230.3 97.5,234.8 109.2,239.6 133.9,234.8zM147.1,239.5 121.8,244.7 135.5,250.3 161.2,244.6zM176.6,250.2 150.4,256.3 166.7,262.9 193.2,256.2zM211.4,262.8 184.5,270.1 204.1,278.1 231.4,270.1zM253.3,278.0 225.8,286.9 249.8,296.7 277.6,286.8zM304.5,296.5 276.8,307.6 307.1,319.9 334.6,307.5zM368.5,319.7 341.4,333.8 380.7,349.8 407.0,333.7zM450.9,349.6 426.0,368.2 479.0,389.7 501.6,368.0zM560.9,389.4 541.6,415.1 616.8,445.6 630.9,414.8zM9.4,199.1 -11.4,201.5 -6.0,204.0 15.2,201.4zM21.4,203.9 -0.3,206.6 5.8,209.4 27.9,206.6zM34.8,209.4 12.3,212.4 19.1,215.5 42.1,212.3zM49.9,215.5 26.4,218.9 34.2,222.5 58.2,218.9zM67.0,222.5 42.5,226.3 51.4,230.4 76.5,226.3zM86.6,230.4 61.0,234.9 71.3,239.6 97.5,234.8zM109.2,239.6 82.4,244.8 94.5,250.3 121.8,244.7zM135.5,250.3 107.6,256.4 121.9,263.0 150.4,256.3zM166.7,262.9 137.6,270.2 154.8,278.2 184.5,270.1zM204.1,278.1 173.9,287.0 195.1,296.8 225.8,286.9zM249.8,296.7 218.8,307.7 245.5,320.0 276.8,307.6zM307.1,319.9 275.7,334.0 310.3,350.0 341.4,333.8zM380.7,349.8 350.3,368.4 396.9,389.9 426.0,368.2zM479.0,389.7 452.1,415.4 518.4,446.0 541.6,415.1zM-6.0,204.0 -28.5,206.6 -23.2,209.4 -0.3,206.6zM5.8,209.4 -17.6,212.4 -11.7,215.6 12.3,212.4zM19.1,215.5 -5.4,218.9 1.3,222.5 26.4,218.9zM34.2,222.5 8.5,226.4 16.1,230.5 42.5,226.3zM51.4,230.4 24.4,234.9 33.3,239.7 61.0,234.9zM71.3,239.6 42.9,244.8 53.4,250.4 82.4,244.8zM94.5,250.3 64.7,256.4 77.0,263.1 107.6,256.4zM121.9,263.0 90.6,270.3 105.5,278.3 137.6,270.2zM154.8,278.2 122.0,287.1 140.3,296.9 173.9,287.0zM195.1,296.8 160.8,307.8 183.8,320.2 218.8,307.7zM245.5,320.0 210.0,334.2 239.9,350.2 275.7,334.0zM310.3,350.0 274.4,368.6 314.7,390.2 350.3,368.4zM396.9,389.9 362.5,415.7 419.8,446.4 452.1,415.4zM518.4,446.0 489.9,483.9 577.8,530.9 599.5,483.4zM1.3,222.5 -25.6,226.4 -19.1,230.5 8.5,226.4zM16.1,230.5 -12.2,235.0 -4.7,239.7 24.4,234.9zM33.3,239.7 3.4,244.9 12.2,250.5 42.9,244.8zM53.4,250.4 21.7,256.5 32.2,263.1 64.7,256.4zM77.0,263.1 43.6,270.4 56.1,278.4 90.6,270.3zM105.5,278.3 70.0,287.2 85.4,297.0 122.0,287.1zM140.3,296.9 102.7,308.0 122.1,320.3 160.8,307.8zM183.8,320.2 144.1,334.3 169.3,350.4 210.0,334.2zM239.9,350.2 198.4,368.9 232.4,390.5 274.4,368.6zM314.7,390.2 272.6,416.0 320.9,446.8 362.5,415.7zM419.8,446.4 380.1,484.4 454.2,531.5 489.9,483.9zM577.8,530.9 549.8,592.3 677.7,673.6 691.1,591.5zM-4.7,239.7 -36.1,244.9 -29.0,250.5 3.4,244.9zM12.2,250.5 -21.2,256.6 -12.8,263.2 21.7,256.5zM32.2,263.1 -3.5,270.5 6.7,278.5 43.6,270.4zM56.1,278.4 18.0,287.3 30.5,297.1 70.0,287.2zM85.4,297.0 44.5,308.1 60.3,320.5 102.7,308.0zM122.1,320.3 78.2,334.5 98.6,350.5 144.1,334.3zM169.3,350.4 122.3,369.1 149.9,390.7 198.4,368.9zM232.4,390.5 182.6,416.3 221.9,447.1 272.6,416.0zM320.9,446.8 270.0,484.9 330.3,532.1 380.1,484.4zM454.2,531.5 408.0,593.1 512.2,674.7 549.8,592.3zM-12.8,263.2 -50.6,270.6 -42.8,278.6 -3.5,270.5zM6.7,278.5 -34.2,287.4 -24.5,297.2 18.0,287.3zM30.5,297.1 -13.8,308.2 -1.6,320.6 44.5,308.1zM60.3,320.5 12.1,334.7 27.8,350.7 78.2,334.5zM98.6,350.5 46.0,369.3 67.2,391.0 122.3,369.1zM149.9,390.7 92.4,416.7 122.6,447.5 182.6,416.3zM221.9,447.1 159.6,485.3 206.0,532.7 270.0,484.9zM330.3,532.1 265.8,593.9 346.0,675.8 408.0,593.1zM-1.6,320.6 -54.1,334.8 -43.1,350.9 12.1,334.7zM27.8,350.7 -30.4,369.5 -15.6,391.3 46.0,369.3zM67.2,391.0 2.0,417.0 23.0,447.9 92.4,416.7zM122.6,447.5 48.9,485.8 81.3,533.3 159.6,485.3zM206.0,532.7 123.1,594.6 179.2,676.8 265.8,593.9zM-15.6,391.3 -88.6,417.3 -76.7,448.3 2.0,417.0zM23.0,447.9 -62.1,486.3 -43.7,533.9 48.9,485.8zM81.3,533.3 -20.1,595.4 11.7,677.9 123.1,594.6z" fill="#b6b6b6"/>
<text transform="matrix(0.1434,0.0187,-0.0892,0.0189,397.7,190.3)" x="0" y="18" font-family="Liberation Sans" font-weight="bold" font-size="50" text-anchor="middle" fill="#c8c8c8" stroke="#c8c8c8" >A7</text>
<text transform="matrix(0.1504,0.0196,-0.0878,0.0199,412.4,192.2)" x="0" y="18" font-family="Liberation Sans" font-weight="bold" font-size="50" text-anchor="middle" fill="#c5c5c5" stroke="#c5c5c5" >A8</text>
<text transform="matrix(0.1580,0.0206,-0.0861,0.0209,427.8,194.3)" x="0" y="18" font-family="Liberation Sans" font-weight="bold" font-size="50" text-anchor="middle" fill="#c8c8c8" stroke="#c8c8c8" >A1</text>
<text transform="matrix(0.1662,0.0217,-0.0841,0.0219,444.0,196.4)" x="0" y="18" font-family="Liberation Sans" font-weight="bold" font-size="50" text-anchor="middle" fill="#c5c5c5" stroke="#c5c5c5" >A2</text>
<text transform="matrix(0.1750,0.0228,-0.0818,0.0231,461.0,198.6)" x="0" y="18" font-family="Liberation Sans" font-weight="bold" font-size="50" text-anchor="middle" fill="#c8c8c8" stroke="#c8c8c8" >A3</text>
<text transform="matrix(0.1845,0.0241,-0.0791,0.0244,479.0,200.9)" x="0" y="18" font-family="Liberation Sans" font-weight="bold" font-size="50" text-anchor="middle" fill="#c5c5c5" stroke="#c5c5c5" >A4</text>
<text transform="matrix(0.1949,0.0254,-0.0760,0.0257,497.9,203.4)" x="0" y="18" font-family="Liberation Sans" font-weight="bold" font-size="50" text-anchor="middle" fill="#c8c8c8" stroke="#c8c8c8" >A5</text>
<text transform="matrix(0.2062,0.0269,-0.0724,0.0272,518.0,206.0)" x="0" y="18" font-family="Liberation Sans" font-weight="bold" font-size="50" text-anchor="middle" fill="#c5c5c5" stroke="#c5c5c5" >A6</text>
<text transform="matrix(0.2184,0.0285,-0.0682,0.0288,539.2,208.8)" x="0" y="18" font-family="Liberation Sans" font-weight="bold" font-size="50" text-anchor="middle" fill="#c8c8c8" stroke="#c8c8c8" >A7</text>
<text transform="matrix(0.2318,0.0303,-0.0634,0.0306,561.7,211.7)" x="0" y="18" font-family="Liberation Sans" font-weight="bold" font-size="50" text-anchor="middle" fill="#c5c5c5" stroke="#c5c5c5" >A8</text>
<text transform="matrix(0.2464,0.0322,-0.0579,0.0325,585.6,214.9)" x="0" y="18" font-family="Liberation Sans" font-weight="bold" font-size="50" text-anchor="middle" fill="#c8c8c8" stroke="#c8c8c8" >A1</text>
<text transform="matrix(0.2625,0.0343,-0.0515,0.0347,611.0,218.2)" x="0" y="18" font-family="Liberation Sans" font-weight="bold" font-size="50" text-anchor="middle" fill="#c5c5c5" stroke="#c5c5c5" >A2</text>
<text transform="matrix(0.1447,0.0196,-0.0937,0.0199,388.5,192.3)" x="0" y="18" font-family="Liberation Sans" font-weight="bold" font-size="50" text-anchor="middle" fill="#c5c5c5" stroke="#c5c5c5" >B7</text>
<text transform="matrix(0.1520,0.0206,-0.0923,0.0209,403.4,194.3)" x="0" y="18" font-family="Liberation Sans" font-weight="bold" font-size="50" text-anchor="middle" fill="#c8c8c8" stroke="#c8c8c8" >B8</text>
<text transform="matrix(0.1598,0.0217,-0.0906,0.0220,418.9,196.4)" x="0" y="18" font-family="Liberation Sans" font-weight="bold" font-size="50" text-anchor="middle" fill="#c5c5c5" stroke="#c5c5c5" >B1</text>
<text transform="matrix(0.1683,0.0229,-0.0886,0.0231,435.3,198.6)" x="0" y="18" font-family="Liberation Sans" font-weight="bold" font-size="50" text-anchor="middle" fill="#c8c8c8" stroke="#c8c8c8" >B2</text>
<text transform="matrix(0.1775,0.0241,-0.0863,0.0244,452.6,201.0)" x="0" y="18" font-family="Liberation Sans" font-weight="bold" font-size="50" text-anchor="middle" fill="#c5c5c5" stroke="#c5c5c5" >B3</text>
<text transform="matrix(0.1875,0.0255,-0.0836,0.0257,470.9,203.5)" x="0" y="18" font-family="Liberation Sans" font-weight="bold" font-size="50" text-anchor="middle" fill="#c8c8c8" stroke="#c8c8c8" >B4</text>
<text transform="matrix(0.1983,0.0269,-0.0804,0.0272,490.1,206.1)" x="0" y="18" font-family="Liberation Sans" font-weight="bold" font-size="50" text-anchor="middle" fill="#c5c5c5" stroke="#c5c5c5" >B5</text>
<text transform="matrix(0.2101,0.0285,-0.0767,0.0289,510.5,208.8)" x="0" y="18" font-family="Liberation Sans" font-weight="bold" font-size="50" text-anchor="middle" fill="#c8c8c8" stroke="#c8c8c8" >B6</text>
<text transform="matrix(0.2230,0.0303,-0.0724,0.0306,532.2,211.8)" x="0" y="18" font-family="Liberation Sans" font-weight="bold" font-size="50" text-anchor="middle" fill="#c5c5c5" stroke="#c5c5c5" >B7</text>
<text transform="matrix(0.2371,0.0322,-0.0675,0.0326,555.2,214.9)" x="0" y="18" font-family="Liberation Sans" font-weight="bold" font-size="50" text-anchor="middle" fill="#c8c8c8" stroke="#c8c8c8" >B8</text>
<text transform="matrix(0.2525,0.0343,-0.0617,0.0347,579.6,218.2)" x="0" y="18" font-family="Liberation Sans" font-weight="bold" font-size="50" text-anchor="middle" fill="#c5c5c5" stroke="#c5c5c5" >B1</text>
<text transform="matrix(0.2696,0.0366,-0.0550,0.0370,605.7,221.8)" x="0" y="18" font-family="Liberation Sans" font-weight="bold" font-size="50" text-anchor="middle" fill="#c8c8c8" stroke="#c8c8c8" >B2</text>
<text transform="matrix(0.1389,0.0197,-0.0996,0.0199,364.7,192.3)" x="0" y="18" font-family="Liberation Sans" font-weight="bold" font-size="50" text-anchor="middle" fill="#c5c5c5" stroke="#c5c5c5" >C6</text>
<text transform="matrix(0.1459,0.0206,-0.0984,0.0209,378.9,194.3)" x="0" y="18" font-family="Liberation Sans" font-weight="bold" font-size="50" text-anchor="middle" fill="#c8c8c8" stroke="#c8c8c8" >C7</text>
<text transform="matrix(0.1535,0.0217,-0.0971,0.0220,393.9,196.4)" x="0" y="18" font-family="Liberation Sans" font-weight="bold" font-size="50" text-anchor="middle" fill="#c5c5c5" stroke="#c5c5c5" >C8</text>
<text transform="matrix(0.1616,0.0229,-0.0955,0.0231,409.6,198.7)" x="0" y="18" font-family="Liberation Sans" font-weight="bold" font-size="50" text-anchor="middle" fill="#c8c8c8" stroke="#c8c8c8" >C1</text>
<text transform="matrix(0.1704,0.0241,-0.0935,0.0244,426.2,201.0)" x="0" y="18" font-family="Liberation Sans" font-weight="bold" font-size="50" text-anchor="middle" fill="#c5c5c5" stroke="#c5c5c5" >C2</text>
<text transform="matrix(0.1800,0.0255,-0.0912,0.0258,443.7,203.5)" x="0" y="18" font-family="Liberation Sans" font-weight="bold" font-size="50" text-anchor="middle" fill="#c8c8c8" stroke="#c8c8c8" >C3</text>
<text transform="matrix(0.1904,0.0269,-0.0885,0.0273,462.3,206.1)" x="0" y="18" font-family="Liberation Sans" font-weight="bold" font-size="50" text-anchor="middle" fill="#c5c5c5" stroke="#c5c5c5" >C4</text>
<text transform="matrix(0.2017,0.0286,-0.0853,0.0289,481.9,208.9)" x="0" y="18" font-family="Liberation Sans" font-weight="bold" font-size="50" text-anchor="middle" fill="#c8c8c8" stroke="#c8c8c8" >C5</text>
<text transform="matrix(0.2141,0.0303,-0.0815,0.0306,502.6,211.8)" x="0" y="18" font-family="Liberation Sans" font-weight="bold" font-size="50" text-anchor="middle" fill="#c5c5c5" stroke="#c5c5c5" >C6</text>
<text transform="matrix(0.2277,0.0322,-0.0771,0.0326,524.7,214.9)" x="0" y="18" font-family="Liberation Sans" font-weight="bold" font-size="50" text-anchor="middle" fill="#c8c8c8" stroke="#c8c8c8" >C7</text>
<text transform="matrix(0.2425,0.0343,-0.0719,0.0347,548.2,218.3)" x="0" y="18" font-family="Liberation Sans" font-weight="bold" font-size="50" text-anchor="middle" fill="#c5c5c5" stroke="#c5c5c5" >C8</text>
<text transform="matrix(0.2589,0.0366,-0.0659,0.0371,573.2,221.8)" x="0" y="18" font-family="Liberation Sans" font-weight="bold" font-size="50" text-anchor="middle" fill="#c8c8c8" stroke="#c8c8c8" >C1</text>
<text transform="matrix(0.2770,0.0392,-0.0589,0.0396,600.0,225.6)" x="0" y="18" font-family="Liberation Sans" font-weight="bold" font-size="50" text-anchor="middle" fill="#c5c5c5" stroke="#c5c5c5" >C2</text>
<text transform="matrix(0.2971,0.0420,-0.0506,0.0425,628.7,229.7)" x="0" y="18" font-family="Liberation Sans" font-weight="bold" font-size="50" text-anchor="middle" fill="#c8c8c8" stroke="#c8c8c8" >C3</text>
<text transform="matrix(0.1399,0.0207,-0.1046,0.0209,354.5,194.3)" x="0" y="18" font-family="Liberation Sans" font-weight="bold" font-size="50" text-anchor="middle" fill="#c8c8c8" stroke="#c8c8c8" >D6</text>
<text transform="matrix(0.1471,0.0217,-0.1036,0.0220,368.8,196.4)" x="0" y="18" font-family="Liberation Sans" font-weight="bold" font-size="50" text-anchor="middle" fill="#c5c5c5" stroke="#c5c5c5" >D7</text>
<text transform="matrix(0.1549,0.0229,-0.1023,0.0231,383.9,198.7)" x="0" y="18" font-family="Liberation Sans" font-weight="bold" font-size="50" text-anchor="middle" fill="#c8c8c8" stroke="#c8c8c8" >D8</text>
<text transform="matrix(0.1634,0.0241,-0.1007,0.0244,399.8,201.0)" x="0" y="18" font-family="Liberation Sans" font-weight="bold" font-size="50" text-anchor="middle" fill="#c5c5c5" stroke="#c5c5c5" >D1</text>
<text transform="matrix(0.1726,0.0255,-0.0988,0.0258,416.6,203.5)" x="0" y="18" font-family="Liberation Sans" font-weight="bold" font-size="50" text-anchor="middle" fill="#c8c8c8" stroke="#c8c8c8" >D2</text>
<text transform="matrix(0.1825,0.0270,-0.0965,0.0273,434.4,206.1)" x="0" y="18" font-family="Liberation Sans" font-weight="bold" font-size="50" text-anchor="middle" fill="#c5c5c5" stroke="#c5c5c5" >D3</text>
<text transform="matrix(0.1934,0.0286,-0.0938,0.0289,453.1,208.9)" x="0" y="18" font-family="Liberation Sans" font-weight="bold" font-size="50" text-anchor="middle" fill="#c8c8c8" stroke="#c8c8c8" >D4</text>
<text transform="matrix(0.2053,0.0303,-0.0905,0.0307,473.1,211.8)" x="0" y="18" font-family="Liberation Sans" font-weight="bold" font-size="50" text-anchor="middle" fill="#c5c5c5" stroke="#c5c5c5" >D5</text>
<text transform="matrix(0.2182,0.0322,-0.0867,0.0326,494.2,215.0)" x="0" y="18" font-family="Liberation Sans" font-weight="bold" font-size="50" text-anchor="middle" fill="#c8c8c8" stroke="#c8c8c8" >D6</text>
<text transform="matrix(0.2325,0.0343,-0.0822,0.0347,516.7,218.3)" x="0" y="18" font-family="Liberation Sans" font-weight="bold" font-size="50" text-anchor="middle" fill="#c5c5c5" stroke="#c5c5c5" >D7</text>
<text transform="matrix(0.2482,0.0367,-0.0768,0.0371,540.8,221.8)" x="0" y="18" font-family="Liberation Sans" font-weight="bold" font-size="50" text-anchor="middle" fill="#c8c8c8" stroke="#c8c8c8" >D8</text>
<text transform="matrix(0.2656,0.0392,-0.0705,0.0397,566.4,225.6)" x="0" y="18" font-family="Liberation Sans" font-weight="bold" font-size="50" text-anchor="middle" fill="#c5c5c5" stroke="#c5c5c5" >D1</text>
<text transform="matrix(0.2848,0.0421,-0.0632,0.0425,593.9,229.7)" x="0" y="18" font-family="Liberation Sans" font-weight="bold" font-size="50" text-anchor="middle" fill="#c8c8c8" stroke="#c8c8c8" >D2</text>
<text transform="matrix(0.3062,0.0452,-0.0545,0.0457,623.4,234.1)" x="0" y="18" font-family="Liberation Sans" font-weight="bold" font-size="50" text-anchor="middle" fill="#c5c5c5" stroke="#c5c5c5" >D3</text>
<text transform="matrix(0.1407,0.0217,-0.1101,0.0220,343.8,196.5)" x="0" y="18" font-family="Liberation Sans" font-weight="bold" font-size="50" text-anchor="middle" fill="#c5c5c5" stroke="#c5c5c5" >E6</text>
<text transform="matrix(0.1482,0.0229,-0.1092,0.0232,358.2,198.7)" x="0" y="18" font-family="Liberation Sans" font-weight="bold" font-size="50" text-anchor="middle" fill="#c8c8c8" stroke="#c8c8c8" >E7</text>
<text transform="matrix(0.1563,0.0242,-0.1080,0.0244,373.4,201.1)" x="0" y="18" font-family="Liberation Sans" font-weight="bold" font-size="50" text-anchor="middle" fill="#c5c5c5" stroke="#c5c5c5" >E8</text>
<text transform="matrix(0.1651,0.0255,-0.1065,0.0258,389.5,203.5)" x="0" y="18" font-family="Liberation Sans" font-weight="bold" font-size="50" text-anchor="middle" fill="#c8c8c8" stroke="#c8c8c8" >E1</text>
<text transform="matrix(0.1746,0.0270,-0.1046,0.0273,406.5,206.2)" x="0" y="18" font-family="Liberation Sans" font-weight="bold" font-size="50" text-anchor="middle" fill="#c5c5c5" stroke="#c5c5c5" >E2</text>
<text transform="matrix(0.1850,0.0286,-0.1023,0.0289,424.4,208.9)" x="0" y="18" font-family="Liberation Sans" font-weight="bold" font-size="50" text-anchor="middle" fill="#c8c8c8" stroke="#c8c8c8" >E3</text>
<text transform="matrix(0.1964,0.0303,-0.0996,0.0307,443.5,211.9)" x="0" y="18" font-family="Liberation Sans" font-weight="bold" font-size="50" text-anchor="middle" fill="#c5c5c5" stroke="#c5c5c5" >E4</text>
<text transform="matrix(0.2088,0.0323,-0.0963,0.0326,463.7,215.0)" x="0" y="18" font-family="Liberation Sans" font-weight="bold" font-size="50" text-anchor="middle" fill="#c8c8c8" stroke="#c8c8c8" >E5</text>
<text transform="matrix(0.2225,0.0344,-0.0924,0.0348,485.3,218.3)" x="0" y="18" font-family="Liberation Sans" font-weight="bold" font-size="50" text-anchor="middle" fill="#c5c5c5" stroke="#c5c5c5" >E6</text>
<text transform="matrix(0.2375,0.0367,-0.0878,0.0371,508.3,221.9)" x="0" y="18" font-family="Liberation Sans" font-weight="bold" font-size="50" text-anchor="middle" fill="#c8c8c8" stroke="#c8c8c8" >E7</text>
<text transform="matrix(0.2541,0.0393,-0.0823,0.0397,532.8,225.7)" x="0" y="18" font-family="Liberation Sans" font-weight="bold" font-size="50" text-anchor="middle" fill="#c5c5c5" stroke="#c5c5c5" >E8</text>
<text transform="matrix(0.2725,0.0421,-0.0757,0.0426,559.1,229.8)" x="0" y="18" font-family="Liberation Sans" font-weight="bold" font-size="50" text-anchor="middle" fill="#c8c8c8" stroke="#c8c8c8" >E1</text>
<text transform="matrix(0.2930,0.0453,-0.0680,0.0458,587.4,234.1)" x="0" y="18" font-family="Liberation Sans" font-weight="bold" font-size="50" text-anchor="middle" fill="#c5c5c5" stroke="#c5c5c5" >E2</text>
<text transform="matrix(0.3159,0.0488,-0.0588,0.0494,617.8,238.8)" x="0" y="18" font-family="Liberation Sans" font-weight="bold" font-size="50" text-anchor="middle" fill="#c8c8c8" stroke="#c8c8c8" >E3</text>
<text transform="matrix(0.1415,0.0229,-0.1160,0.0232,332.5,198.7)" x="0" y="18" font-family="Liberation Sans" font-weight="bold" font-size="50" text-anchor="middle" fill="#c8c8c8" stroke="#c8c8c8" >F6</text>
<text transform="matrix(0.1492,0.0242,-0.1152,0.0244,347.0,201.1)" x="0" y="18" font-family="Liberation Sans" font-weight="bold" font-size="50" text-anchor="middle" fill="#c5c5c5" stroke="#c5c5c5" >F7</text>
<text transform="matrix(0.1576,0.0255,-0.1141,0.0258,362.3,203.6)" x="0" y="18" font-family="Liberation Sans" font-weight="bold" font-size="50" text-anchor="middle" fill="#c8c8c8" stroke="#c8c8c8" >F8</text>
<text transform="matrix(0.1667,0.0270,-0.1127,0.0273,378.5,206.2)" x="0" y="18" font-family="Liberation Sans" font-weight="bold" font-size="50" text-anchor="middle" fill="#c5c5c5" stroke="#c5c5c5" >F1</text>
<text transform="matrix(0.1767,0.0286,-0.1109,0.0289,395.7,209.0)" x="0" y="18" font-family="Liberation Sans" font-weight="bold" font-size="50" text-anchor="middle" fill="#c8c8c8" stroke="#c8c8c8" >F2</text>
<text transform="matrix(0.1875,0.0304,-0.1087,0.0307,413.9,211.9)" x="0" y="18" font-family="Liberation Sans" font-weight="bold" font-size="50" text-anchor="middle" fill="#c5c5c5" stroke="#c5c5c5" >F3</text>
<text transform="matrix(0.1994,0.0323,-0.1060,0.0327,433.2,215.0)" x="0" y="18" font-family="Liberation Sans" font-weight="bold" font-size="50" text-anchor="middle" fill="#c8c8c8" stroke="#c8c8c8" >F4</text>
<text transform="matrix(0.2124,0.0344,-0.1027,0.0348,453.8,218.4)" x="0" y="18" font-family="Liberation Sans" font-weight="bold" font-size="50" text-anchor="middle" fill="#c5c5c5" stroke="#c5c5c5" >F5</text>
<text transform="matrix(0.2268,0.0367,-0.0987,0.0371,475.7,221.9)" x="0" y="18" font-family="Liberation Sans" font-weight="bold" font-size="50" text-anchor="middle" fill="#c8c8c8" stroke="#c8c8c8" >F6</text>
<text transform="matrix(0.2426,0.0393,-0.0940,0.0397,499.2,225.7)" x="0" y="18" font-family="Liberation Sans" font-weight="bold" font-size="50" text-anchor="middle" fill="#c5c5c5" stroke="#c5c5c5" >F7</text>
<text transform="matrix(0.2602,0.0421,-0.0883,0.0426,524.3,229.8)" x="0" y="18" font-family="Liberation Sans" font-weight="bold" font-size="50" text-anchor="middle" fill="#c8c8c8" stroke="#c8c8c8" >F8</text>
<text transform="matrix(0.2798,0.0453,-0.0815,0.0458,551.3,234.2)" x="0" y="18" font-family="Liberation Sans" font-weight="bold" font-size="50" text-anchor="middle" fill="#c5c5c5" stroke="#c5c5c5" >F1</text>
<text transform="matrix(0.3017,0.0489,-0.0733,0.0494,580.3,238.9)" x="0" y="18" font-family="Liberation Sans" font-weight="bold" font-size="50" text-anchor="middle" fill="#c8c8c8" stroke="#c8c8c8" >F2</text>
<text transform="matrix(0.3262,0.0528,-0.0636,0.0534,611.7,243.9)" x="0" y="18" font-family="Liberation Sans" font-weight="bold" font-size="50" text-anchor="middle" fill="#c5c5c5" stroke="#c5c5c5" >F3</text>
<text transform="matrix(0.1421,0.0242,-0.1225,0.0245,320.5,201.1)" x="0" y="18" font-family="Liberation Sans" font-weight="bold" font-size="50" text-anchor="middle" fill="#c5c5c5" stroke="#c5c5c5" >G6</text>
<text transform="matrix(0.1501,0.0255,-0.1218,0.0258,335.1,203.6)" x="0" y="18" font-family="Liberation Sans" font-weight="bold" font-size="50" text-anchor="middle" fill="#c8c8c8" stroke="#c8c8c8" >G7</text>
<text transform="matrix(0.1588,0.0270,-0.1208,0.0273,350.6,206.2)" x="0" y="18" font-family="Liberation Sans" font-weight="bold" font-size="50" text-anchor="middle" fill="#c5c5c5" stroke="#c5c5c5" >G8</text>
<text transform="matrix(0.1683,0.0286,-0.1195,0.0289,366.9,209.0)" x="0" y="18" font-family="Liberation Sans" font-weight="bold" font-size="50" text-anchor="middle" fill="#c8c8c8" stroke="#c8c8c8" >G1</text>
<text transform="matrix(0.1786,0.0304,-0.1178,0.0307,384.3,212.0)" x="0" y="18" font-family="Liberation Sans" font-weight="bold" font-size="50" text-anchor="middle" fill="#c5c5c5" stroke="#c5c5c5" >G2</text>
<text transform="matrix(0.1899,0.0323,-0.1157,0.0327,402.7,215.1)" x="0" y="18" font-family="Liberation Sans" font-weight="bold" font-size="50" text-anchor="middle" fill="#c8c8c8" stroke="#c8c8c8" >G3</text>
<text transform="matrix(0.2023,0.0344,-0.1130,0.0348,422.3,218.4)" x="0" y="18" font-family="Liberation Sans" font-weight="bold" font-size="50" text-anchor="middle" fill="#c5c5c5" stroke="#c5c5c5" >G4</text>
<text transform="matrix(0.2160,0.0368,-0.1097,0.0372,443.2,222.0)" x="0" y="18" font-family="Liberation Sans" font-weight="bold" font-size="50" text-anchor="middle" fill="#c8c8c8" stroke="#c8c8c8" >G5</text>
<text transform="matrix(0.2312,0.0393,-0.1057,0.0398,465.5,225.8)" x="0" y="18" font-family="Liberation Sans" font-weight="bold" font-size="50" text-anchor="middle" fill="#c5c5c5" stroke="#c5c5c5" >G6</text>
<text transform="matrix(0.2479,0.0422,-0.1009,0.0427,489.4,229.8)" x="0" y="18" font-family="Liberation Sans" font-weight="bold" font-size="50" text-anchor="middle" fill="#c8c8c8" stroke="#c8c8c8" >G7</text>
<text transform="matrix(0.2666,0.0453,-0.0950,0.0459,515.1,234.2)" x="0" y="18" font-family="Liberation Sans" font-weight="bold" font-size="50" text-anchor="middle" fill="#c5c5c5" stroke="#c5c5c5" >G8</text>
<text transform="matrix(0.2874,0.0489,-0.0879,0.0494,542.8,238.9)" x="0" y="18" font-family="Liberation Sans" font-weight="bold" font-size="50" text-anchor="middle" fill="#c8c8c8" stroke="#c8c8c8" >G1</text>
<text transform="matrix(0.3108,0.0529,-0.0794,0.0535,572.7,244.0)" x="0" y="18" font-family="Liberation Sans" font-weight="bold" font-size="50" text-anchor="middle" fill="#c5c5c5" stroke="#c5c5c5" >G2</text>
<text transform="matrix(0.3372,0.0574,-0.0691,0.0580,605.0,249.5)" x="0" y="18" font-family="Liberation Sans" font-weight="bold" font-size="50" text-anchor="middle" fill="#c8c8c8" stroke="#c8c8c8" >G3</text>
<text transform="matrix(0.1426,0.0256,-0.1294,0.0258,307.9,203.6)" x="0" y="18" font-family="Liberation Sans" font-weight="bold" font-size="50" text-anchor="middle" fill="#c8c8c8" stroke="#c8c8c8" >H6</text>
<text transform="matrix(0.1509,0.0270,-0.1289,0.0273,322.6,206.3)" x="0" y="18" font-family="Liberation Sans" font-weight="bold" font-size="50" text-anchor="middle" fill="#c5c5c5" stroke="#c5c5c5" >H7</text>
<text transform="matrix(0.1599,0.0286,-0.1281,0.0290,338.1,209.0)" x="0" y="18" font-family="Liberation Sans" font-weight="bold" font-size="50" text-anchor="middle" fill="#c8c8c8" stroke="#c8c8c8" >H8</text>
<text transform="matrix(0.1697,0.0304,-0.1269,0.0307,354.6,212.0)" x="0" y="18" font-family="Liberation Sans" font-weight="bold" font-size="50" text-anchor="middle" fill="#c5c5c5" stroke="#c5c5c5" >H1</text>
<text transform="matrix(0.1805,0.0323,-0.1253,0.0327,372.1,215.1)" x="0" y="18" font-family="Liberation Sans" font-weight="bold" font-size="50" text-anchor="middle" fill="#c8c8c8" stroke="#c8c8c8" >H2</text>
<text transform="matrix(0.1923,0.0344,-0.1233,0.0348,390.7,218.5)" x="0" y="18" font-family="Liberation Sans" font-weight="bold" font-size="50" text-anchor="middle" fill="#c5c5c5" stroke="#c5c5c5" >H3</text>
<text transform="matrix(0.2053,0.0368,-0.1207,0.0372,410.6,222.0)" x="0" y="18" font-family="Liberation Sans" font-weight="bold" font-size="50" text-anchor="middle" fill="#c8c8c8" stroke="#c8c8c8" >H4</text>
<text transform="matrix(0.2196,0.0394,-0.1175,0.0398,431.8,225.8)" x="0" y="18" font-family="Liberation Sans" font-weight="bold" font-size="50" text-anchor="middle" fill="#c5c5c5" stroke="#c5c5c5" >H5</text>
<text transform="matrix(0.2356,0.0422,-0.1135,0.0427,454.6,229.9)" x="0" y="18" font-family="Liberation Sans" font-weight="bold" font-size="50" text-anchor="middle" fill="#c8c8c8" stroke="#c8c8c8" >H6</text>
<text transform="matrix(0.2533,0.0454,-0.1086,0.0459,479.0,234.3)" x="0" y="18" font-family="Liberation Sans" font-weight="bold" font-size="50" text-anchor="middle" fill="#c5c5c5" stroke="#c5c5c5" >H7</text>
<text transform="matrix(0.2731,0.0489,-0.1025,0.0495,505.3,239.0)" x="0" y="18" font-family="Liberation Sans" font-weight="bold" font-size="50" text-anchor="middle" fill="#c8c8c8" stroke="#c8c8c8" >H8</text>
<text transform="matrix(0.2954,0.0529,-0.0952,0.0535,533.7,244.1)" x="0" y="18" font-family="Liberation Sans" font-weight="bold" font-size="50" text-anchor="middle" fill="#c5c5c5" stroke="#c5c5c5" >H1</text>
<text transform="matrix(0.3204,0.0574,-0.0862,0.0581,564.4,249.6)" x="0" y="18" font-family="Liberation Sans" font-weight="bold" font-size="50" text-anchor="middle" fill="#c8c8c8" stroke="#c8c8c8" >H2</text>
<text transform="matrix(0.3488,0.0625,-0.0753,0.0632,597.8,255.6)" x="0" y="18" font-family="Liberation Sans" font-weight="bold" font-size="50" text-anchor="middle" fill="#c5c5c5" stroke="#c5c5c5" >H3</text>
<text transform="matrix(0.3812,0.0683,-0.0620,0.0691,634.3,262.1)" x="0" y="18" font-family="Liberation Sans" font-weight="bold" font-size="50" text-anchor="middle" fill="#c8c8c8" stroke="#c8c8c8" >H4</text>
<text transform="matrix(0.1430,0.0271,-0.1370,0.0274,294.6,206.3)" x="0" y="18" font-family="Liberation Sans" font-weight="bold" font-size="50" text-anchor="middle" fill="#c5c5c5" stroke="#c5c5c5" >A6</text>
<text transform="matrix(0.1515,0.0287,-0.1367,0.0290,309.3,209.1)" x="0" y="18" font-family="Liberation Sans" font-weight="bold" font-size="50" text-anchor="middle" fill="#c8c8c8" stroke="#c8c8c8" >A7</text>
<text transform="matrix(0.1608,0.0304,-0.1360,0.0308,325.0,212.0)" x="0" y="18" font-family="Liberation Sans" font-weight="bold" font-size="50" text-anchor="middle" fill="#c5c5c5" stroke="#c5c5c5" >A8</text>
<text transform="matrix(0.1710,0.0324,-0.1350,0.0327,341.5,215.2)" x="0" y="18" font-family="Liberation Sans" font-weight="bold" font-size="50" text-anchor="middle" fill="#c8c8c8" stroke="#c8c8c8" >A1</text>
<text transform="matrix(0.1822,0.0345,-0.1336,0.0349,359.2,218.5)" x="0" y="18" font-family="Liberation Sans" font-weight="bold" font-size="50" text-anchor="middle" fill="#c5c5c5" stroke="#c5c5c5" >A2</text>
<text transform="matrix(0.1945,0.0368,-0.1318,0.0372,378.0,222.1)" x="0" y="18" font-family="Liberation Sans" font-weight="bold" font-size="50" text-anchor="middle" fill="#c8c8c8" stroke="#c8c8c8" >A3</text>
<text transform="matrix(0.2081,0.0394,-0.1293,0.0398,398.1,225.9)" x="0" y="18" font-family="Liberation Sans" font-weight="bold" font-size="50" text-anchor="middle" fill="#c5c5c5" stroke="#c5c5c5" >A4</text>
<text transform="matrix(0.2232,0.0422,-0.1261,0.0427,419.6,229.9)" x="0" y="18" font-family="Liberation Sans" font-weight="bold" font-size="50" text-anchor="middle" fill="#c8c8c8" stroke="#c8c8c8" >A5</text>
<text transform="matrix(0.2400,0.0454,-0.1221,0.0459,442.8,234.3)" x="0" y="18" font-family="Liberation Sans" font-weight="bold" font-size="50" text-anchor="middle" fill="#c5c5c5" stroke="#c5c5c5" >A6</text>
<text transform="matrix(0.2588,0.0490,-0.1172,0.0495,467.7,239.0)" x="0" y="18" font-family="Liberation Sans" font-weight="bold" font-size="50" text-anchor="middle" fill="#c8c8c8" stroke="#c8c8c8" >A7</text>
<text transform="matrix(0.2799,0.0530,-0.1110,0.0536,494.6,244.1)" x="0" y="18" font-family="Liberation Sans" font-weight="bold" font-size="50" text-anchor="middle" fill="#c5c5c5" stroke="#c5c5c5" >A8</text>
<text transform="matrix(0.3037,0.0575,-0.1033,0.0581,523.8,249.6)" x="0" y="18" font-family="Liberation Sans" font-weight="bold" font-size="50" text-anchor="middle" fill="#c8c8c8" stroke="#c8c8c8" >A1</text>
<text transform="matrix(0.3306,0.0626,-0.0939,0.0633,555.4,255.6)" x="0" y="18" font-family="Liberation Sans" font-weight="bold" font-size="50" text-anchor="middle" fill="#c5c5c5" stroke="#c5c5c5" >A2</text>
<text transform="matrix(0.3613,0.0684,-0.0823,0.0691,590.0,262.2)" x="0" y="18" font-family="Liberation Sans" font-weight="bold" font-size="50" text-anchor="middle" fill="#c8c8c8" stroke="#c8c8c8" >A3</text>
<text transform="matrix(0.3965,0.0750,-0.0681,0.0759,627.8,269.3)" x="0" y="18" font-family="Liberation Sans" font-weight="bold" font-size="50" text-anchor="middle" fill="#c5c5c5" stroke="#c5c5c5" >A4</text>
<text transform="matrix(0.1431,0.0287,-0.1453,0.0290,280.5,209.1)" x="0" y="18" font-family="Liberation Sans" font-weight="bold" font-size="50" text-anchor="middle" fill="#c8c8c8" stroke="#c8c8c8" >B6</text>
<text transform="matrix(0.1519,0.0304,-0.1452,0.0308,295.3,212.1)" x="0" y="18" font-family="Liberation Sans" font-weight="bold" font-size="50" text-anchor="middle" fill="#c5c5c5" stroke="#c5c5c5" >B7</text>
<text transform="matrix(0.1615,0.0324,-0.1447,0.0327,310.9,215.2)" x="0" y="18" font-family="Liberation Sans" font-weight="bold" font-size="50" text-anchor="middle" fill="#c8c8c8" stroke="#c8c8c8" >B8</text>
<text transform="matrix(0.1721,0.0345,-0.1440,0.0349,327.6,218.5)" x="0" y="18" font-family="Liberation Sans" font-weight="bold" font-size="50" text-anchor="middle" fill="#c5c5c5" stroke="#c5c5c5" >B1</text>
<text transform="matrix(0.1837,0.0368,-0.1428,0.0372,345.4,222.1)" x="0" y="18" font-family="Liberation Sans" font-weight="bold" font-size="50" text-anchor="middle" fill="#c8c8c8" stroke="#c8c8c8" >B2</text>
<text transform="matrix(0.1966,0.0394,-0.1411,0.0399,364.4,225.9)" x="0" y="18" font-family="Liberation Sans" font-weight="bold" font-size="50" text-anchor="middle" fill="#c5c5c5" stroke="#c5c5c5" >B3</text>
<text transform="matrix(0.2109,0.0423,-0.1388,0.0428,384.7,230.0)" x="0" y="18" font-family="Liberation Sans" font-weight="bold" font-size="50" text-anchor="middle" fill="#c8c8c8" stroke="#c8c8c8" >B4</text>
<text transform="matrix(0.2267,0.0455,-0.1357,0.0460,406.6,234.4)" x="0" y="18" font-family="Liberation Sans" font-weight="bold" font-size="50" text-anchor="middle" fill="#c5c5c5" stroke="#c5c5c5" >B5</text>
<text transform="matrix(0.2445,0.0490,-0.1318,0.0496,430.1,239.1)" x="0" y="18" font-family="Liberation Sans" font-weight="bold" font-size="50" text-anchor="middle" fill="#c8c8c8" stroke="#c8c8c8" >B6</text>
<text transform="matrix(0.2644,0.0530,-0.1268,0.0536,455.5,244.2)" x="0" y="18" font-family="Liberation Sans" font-weight="bold" font-size="50" text-anchor="middle" fill="#c5c5c5" stroke="#c5c5c5" >B7</text>
<text transform="matrix(0.2869,0.0575,-0.1205,0.0582,483.1,249.7)" x="0" y="18" font-family="Liberation Sans" font-weight="bold" font-size="50" text-anchor="middle" fill="#c8c8c8" stroke="#c8c8c8" >B8</text>
<text transform="matrix(0.3123,0.0626,-0.1126,0.0633,513.0,255.7)" x="0" y="18" font-family="Liberation Sans" font-weight="bold" font-size="50" text-anchor="middle" fill="#c5c5c5" stroke="#c5c5c5" >B1</text>
<text transform="matrix(0.3413,0.0684,-0.1027,0.0692,545.6,262.2)" x="0" y="18" font-family="Liberation Sans" font-weight="bold" font-size="50" text-anchor="middle" fill="#c8c8c8" stroke="#c8c8c8" >B2</text>
<text transform="matrix(0.3746,0.0751,-0.0904,0.0760,581.3,269.4)" x="0" y="18" font-family="Liberation Sans" font-weight="bold" font-size="50" text-anchor="middle" fill="#c5c5c5" stroke="#c5c5c5" >B3</text>
<text transform="matrix(0.4129,0.0828,-0.0751,0.0837,620.7,277.3)" x="0" y="18" font-family="Liberation Sans" font-weight="bold" font-size="50" text-anchor="middle" fill="#c8c8c8" stroke="#c8c8c8" >B4</text>
<text transform="matrix(0.1429,0.0305,-0.1543,0.0308,265.6,212.1)" x="0" y="18" font-family="Liberation Sans" font-weight="bold" font-size="50" text-anchor="middle" fill="#c5c5c5" stroke="#c5c5c5" >C6</text>
<text transform="matrix(0.1520,0.0324,-0.1545,0.0328,280.3,215.2)" x="0" y="18" font-family="Liberation Sans" font-weight="bold" font-size="50" text-anchor="middle" fill="#c8c8c8" stroke="#c8c8c8" >C7</text>
<text transform="matrix(0.1619,0.0345,-0.1543,0.0349,296.0,218.6)" x="0" y="18" font-family="Liberation Sans" font-weight="bold" font-size="50" text-anchor="middle" fill="#c5c5c5" stroke="#c5c5c5" >C8</text>
<text transform="matrix(0.1729,0.0369,-0.1538,0.0373,312.7,222.1)" x="0" y="18" font-family="Liberation Sans" font-weight="bold" font-size="50" text-anchor="middle" fill="#c8c8c8" stroke="#c8c8c8" >C1</text>
<text transform="matrix(0.1850,0.0394,-0.1529,0.0399,330.6,226.0)" x="0" y="18" font-family="Liberation Sans" font-weight="bold" font-size="50" text-anchor="middle" fill="#c5c5c5" stroke="#c5c5c5" >C2</text>
<text transform="matrix(0.1985,0.0423,-0.1515,0.0428,349.7,230.0)" x="0" y="18" font-family="Liberation Sans" font-weight="bold" font-size="50" text-anchor="middle" fill="#c8c8c8" stroke="#c8c8c8" >C3</text>
<text transform="matrix(0.2134,0.0455,-0.1494,0.0460,370.3,234.4)" x="0" y="18" font-family="Liberation Sans" font-weight="bold" font-size="50" text-anchor="middle" fill="#c5c5c5" stroke="#c5c5c5" >C4</text>
<text transform="matrix(0.2301,0.0491,-0.1465,0.0496,392.5,239.1)" x="0" y="18" font-family="Liberation Sans" font-weight="bold" font-size="50" text-anchor="middle" fill="#c8c8c8" stroke="#c8c8c8" >C5</text>
<text transform="matrix(0.2489,0.0531,-0.1427,0.0537,416.4,244.2)" x="0" y="18" font-family="Liberation Sans" font-weight="bold" font-size="50" text-anchor="middle" fill="#c5c5c5" stroke="#c5c5c5" >C6</text>
<text transform="matrix(0.2701,0.0576,-0.1377,0.0582,442.3,249.8)" x="0" y="18" font-family="Liberation Sans" font-weight="bold" font-size="50" text-anchor="middle" fill="#c8c8c8" stroke="#c8c8c8" >C7</text>
<text transform="matrix(0.2940,0.0627,-0.1313,0.0634,470.5,255.8)" x="0" y="18" font-family="Liberation Sans" font-weight="bold" font-size="50" text-anchor="middle" fill="#c5c5c5" stroke="#c5c5c5" >C8</text>
<text transform="matrix(0.3213,0.0685,-0.1232,0.0693,501.2,262.3)" x="0" y="18" font-family="Liberation Sans" font-weight="bold" font-size="50" text-anchor="middle" fill="#c8c8c8" stroke="#c8c8c8" >C1</text>
<text transform="matrix(0.3527,0.0752,-0.1129,0.0760,534.8,269.5)" x="0" y="18" font-family="Liberation Sans" font-weight="bold" font-size="50" text-anchor="middle" fill="#c5c5c5" stroke="#c5c5c5" >C2</text>
<text transform="matrix(0.3888,0.0829,-0.0998,0.0838,571.9,277.4)" x="0" y="18" font-family="Liberation Sans" font-weight="bold" font-size="50" text-anchor="middle" fill="#c8c8c8" stroke="#c8c8c8" >C3</text>
<text transform="matrix(0.4307,0.0918,-0.0833,0.0929,612.7,286.1)" x="0" y="18" font-family="Liberation Sans" font-weight="bold" font-size="50" text-anchor="middle" fill="#c5c5c5" stroke="#c5c5c5" >C4</text>
<text transform="matrix(0.1425,0.0324,-0.1642,0.0328,249.6,215.3)" x="0" y="18" font-family="Liberation Sans" font-weight="bold" font-size="50" text-anchor="middle" fill="#c8c8c8" stroke="#c8c8c8" >D6</text>
<text transform="matrix(0.1518,0.0345,-0.1647,0.0349,264.3,218.6)" x="0" y="18" font-family="Liberation Sans" font-weight="bold" font-size="50" text-anchor="middle" fill="#c5c5c5" stroke="#c5c5c5" >D7</text>
<text transform="matrix(0.1621,0.0369,-0.1649,0.0373,280.0,222.2)" x="0" y="18" font-family="Liberation Sans" font-weight="bold" font-size="50" text-anchor="middle" fill="#c8c8c8" stroke="#c8c8c8" >D8</text>
<text transform="matrix(0.1734,0.0395,-0.1648,0.0399,296.8,226.0)" x="0" y="18" font-family="Liberation Sans" font-weight="bold" font-size="50" text-anchor="middle" fill="#c5c5c5" stroke="#c5c5c5" >D1</text>
<text transform="matrix(0.1860,0.0423,-0.1642,0.0428,314.7,230.1)" x="0" y="18" font-family="Liberation Sans" font-weight="bold" font-size="50" text-anchor="middle" fill="#c8c8c8" stroke="#c8c8c8" >D2</text>
<text transform="matrix(0.2001,0.0455,-0.1630,0.0461,334.0,234.5)" x="0" y="18" font-family="Liberation Sans" font-weight="bold" font-size="50" text-anchor="middle" fill="#c5c5c5" stroke="#c5c5c5" >D3</text>
<text transform="matrix(0.2158,0.0491,-0.1612,0.0497,354.8,239.2)" x="0" y="18" font-family="Liberation Sans" font-weight="bold" font-size="50" text-anchor="middle" fill="#c8c8c8" stroke="#c8c8c8" >D4</text>
<text transform="matrix(0.2334,0.0531,-0.1586,0.0537,377.2,244.3)" x="0" y="18" font-family="Liberation Sans" font-weight="bold" font-size="50" text-anchor="middle" fill="#c5c5c5" stroke="#c5c5c5" >D5</text>
<text transform="matrix(0.2532,0.0576,-0.1550,0.0583,401.5,249.8)" x="0" y="18" font-family="Liberation Sans" font-weight="bold" font-size="50" text-anchor="middle" fill="#c8c8c8" stroke="#c8c8c8" >D6</text>
<text transform="matrix(0.2757,0.0627,-0.1501,0.0635,427.9,255.8)" x="0" y="18" font-family="Liberation Sans" font-weight="bold" font-size="50" text-anchor="middle" fill="#c5c5c5" stroke="#c5c5c5" >D7</text>
<text transform="matrix(0.3013,0.0686,-0.1437,0.0694,456.7,262.4)" x="0" y="18" font-family="Liberation Sans" font-weight="bold" font-size="50" text-anchor="middle" fill="#c8c8c8" stroke="#c8c8c8" >D8</text>
<text transform="matrix(0.3307,0.0753,-0.1353,0.0761,488.3,269.6)" x="0" y="18" font-family="Liberation Sans" font-weight="bold" font-size="50" text-anchor="middle" fill="#c5c5c5" stroke="#c5c5c5" >D1</text>
<text transform="matrix(0.3646,0.0830,-0.1246,0.0839,523.0,277.5)" x="0" y="18" font-family="Liberation Sans" font-weight="bold" font-size="50" text-anchor="middle" fill="#c8c8c8" stroke="#c8c8c8" >D2</text>
<text transform="matrix(0.4039,0.0919,-0.1107,0.0930,561.3,286.2)" x="0" y="18" font-family="Liberation Sans" font-weight="bold" font-size="50" text-anchor="middle" fill="#c5c5c5" stroke="#c5c5c5" >D3</text>
<text transform="matrix(0.4501,0.1024,-0.0929,0.1036,604.0,295.9)" x="0" y="18" font-family="Liberation Sans" font-weight="bold" font-size="50" text-anchor="middle" fill="#c8c8c8" stroke="#c8c8c8" >D4</text>
<text transform="matrix(0.1416,0.0346,-0.1751,0.0350,232.7,218.7)" x="0" y="18" font-family="Liberation Sans" font-weight="bold" font-size="50" text-anchor="middle" fill="#c5c5c5" stroke="#c5c5c5" >E6</text>
<text transform="matrix(0.1512,0.0369,-0.1760,0.0373,247.3,222.2)" x="0" y="18" font-family="Liberation Sans" font-weight="bold" font-size="50" text-anchor="middle" fill="#c8c8c8" stroke="#c8c8c8" >E7</text>
<text transform="matrix(0.1618,0.0395,-0.1766,0.0400,263.0,226.0)" x="0" y="18" font-family="Liberation Sans" font-weight="bold" font-size="50" text-anchor="middle" fill="#c5c5c5" stroke="#c5c5c5" >E8</text>
<text transform="matrix(0.1736,0.0424,-0.1769,0.0429,279.7,230.1)" x="0" y="18" font-family="Liberation Sans" font-weight="bold" font-size="50" text-anchor="middle" fill="#c8c8c8" stroke="#c8c8c8" >E1</text>
<text transform="matrix(0.1867,0.0456,-0.1767,0.0461,297.7,234.5)" x="0" y="18" font-family="Liberation Sans" font-weight="bold" font-size="50" text-anchor="middle" fill="#c5c5c5" stroke="#c5c5c5" >E2</text>
<text transform="matrix(0.2013,0.0491,-0.1759,0.0497,317.1,239.3)" x="0" y="18" font-family="Liberation Sans" font-weight="bold" font-size="50" text-anchor="middle" fill="#c8c8c8" stroke="#c8c8c8" >E3</text>
<text transform="matrix(0.2178,0.0532,-0.1745,0.0538,338.0,244.4)" x="0" y="18" font-family="Liberation Sans" font-weight="bold" font-size="50" text-anchor="middle" fill="#c5c5c5" stroke="#c5c5c5" >E4</text>
<text transform="matrix(0.2363,0.0577,-0.1722,0.0583,360.7,249.9)" x="0" y="18" font-family="Liberation Sans" font-weight="bold" font-size="50" text-anchor="middle" fill="#c8c8c8" stroke="#c8c8c8" >E5</text>
<text transform="matrix(0.2573,0.0628,-0.1689,0.0635,385.4,255.9)" x="0" y="18" font-family="Liberation Sans" font-weight="bold" font-size="50" text-anchor="middle" fill="#c5c5c5" stroke="#c5c5c5" >E6</text>
<text transform="matrix(0.2812,0.0687,-0.1642,0.0694,412.2,262.5)" x="0" y="18" font-family="Liberation Sans" font-weight="bold" font-size="50" text-anchor="middle" fill="#c8c8c8" stroke="#c8c8c8" >E7</text>
<text transform="matrix(0.3087,0.0753,-0.1579,0.0762,441.7,269.7)" x="0" y="18" font-family="Liberation Sans" font-weight="bold" font-size="50" text-anchor="middle" fill="#c5c5c5" stroke="#c5c5c5" >E8</text>
<text transform="matrix(0.3403,0.0831,-0.1494,0.0840,474.1,277.6)" x="0" y="18" font-family="Liberation Sans" font-weight="bold" font-size="50" text-anchor="middle" fill="#c8c8c8" stroke="#c8c8c8" >E1</text>
<text transform="matrix(0.3771,0.0920,-0.1382,0.0931,509.9,286.3)" x="0" y="18" font-family="Liberation Sans" font-weight="bold" font-size="50" text-anchor="middle" fill="#c5c5c5" stroke="#c5c5c5" >E2</text>
<text transform="matrix(0.4202,0.1026,-0.1235,0.1037,549.7,296.0)" x="0" y="18" font-family="Liberation Sans" font-weight="bold" font-size="50" text-anchor="middle" fill="#c8c8c8" stroke="#c8c8c8" >E3</text>
<text transform="matrix(0.4711,0.1150,-0.1043,0.1163,594.1,306.9)" x="0" y="18" font-family="Liberation Sans" font-weight="bold" font-size="50" text-anchor="middle" fill="#c5c5c5" stroke="#c5c5c5" >E4</text>
<text transform="matrix(0.5318,0.1298,-0.0792,0.1313,644.1,319.1)" x="0" y="18" font-family="Liberation Sans" font-weight="bold" font-size="50" text-anchor="middle" fill="#c8c8c8" stroke="#c8c8c8" >E5</text>
<text transform="matrix(0.1404,0.0369,-0.1871,0.0374,214.6,222.3)" x="0" y="18" font-family="Liberation Sans" font-weight="bold" font-size="50" text-anchor="middle" fill="#c8c8c8" stroke="#c8c8c8" >F6</text>
<text transform="matrix(0.1502,0.0395,-0.1885,0.0400,229.1,226.1)" x="0" y="18" font-family="Liberation Sans" font-weight="bold" font-size="50" text-anchor="middle" fill="#c5c5c5" stroke="#c5c5c5" >F7</text>
<text transform="matrix(0.1612,0.0424,-0.1896,0.0429,244.7,230.2)" x="0" y="18" font-family="Liberation Sans" font-weight="bold" font-size="50" text-anchor="middle" fill="#c8c8c8" stroke="#c8c8c8" >F8</text>
<text transform="matrix(0.1733,0.0456,-0.1904,0.0461,261.4,234.6)" x="0" y="18" font-family="Liberation Sans" font-weight="bold" font-size="50" text-anchor="middle" fill="#c5c5c5" stroke="#c5c5c5" >F1</text>
<text transform="matrix(0.1869,0.0492,-0.1907,0.0497,279.4,239.3)" x="0" y="18" font-family="Liberation Sans" font-weight="bold" font-size="50" text-anchor="middle" fill="#c8c8c8" stroke="#c8c8c8" >F2</text>
<text transform="matrix(0.2022,0.0532,-0.1905,0.0538,298.8,244.4)" x="0" y="18" font-family="Liberation Sans" font-weight="bold" font-size="50" text-anchor="middle" fill="#c5c5c5" stroke="#c5c5c5" >F3</text>
<text transform="matrix(0.2194,0.0577,-0.1895,0.0584,319.9,250.0)" x="0" y="18" font-family="Liberation Sans" font-weight="bold" font-size="50" text-anchor="middle" fill="#c8c8c8" stroke="#c8c8c8" >F4</text>
<text transform="matrix(0.2389,0.0629,-0.1877,0.0636,342.7,256.0)" x="0" y="18" font-family="Liberation Sans" font-weight="bold" font-size="50" text-anchor="middle" fill="#c5c5c5" stroke="#c5c5c5" >F5</text>
<text transform="matrix(0.2611,0.0687,-0.1848,0.0695,367.7,262.6)" x="0" y="18" font-family="Liberation Sans" font-weight="bold" font-size="50" text-anchor="middle" fill="#c8c8c8" stroke="#c8c8c8" >F6</text>
<text transform="matrix(0.2866,0.0754,-0.1804,0.0763,395.0,269.8)" x="0" y="18" font-family="Liberation Sans" font-weight="bold" font-size="50" text-anchor="middle" fill="#c5c5c5" stroke="#c5c5c5" >F7</text>
<text transform="matrix(0.3160,0.0832,-0.1742,0.0841,425.1,277.7)" x="0" y="18" font-family="Liberation Sans" font-weight="bold" font-size="50" text-anchor="middle" fill="#c8c8c8" stroke="#c8c8c8" >F8</text>
<text transform="matrix(0.3502,0.0922,-0.1657,0.0932,458.4,286.4)" x="0" y="18" font-family="Liberation Sans" font-weight="bold" font-size="50" text-anchor="middle" fill="#c5c5c5" stroke="#c5c5c5" >F1</text>
<text transform="matrix(0.3902,0.1027,-0.1542,0.1038,495.3,296.1)" x="0" y="18" font-family="Liberation Sans" font-weight="bold" font-size="50" text-anchor="middle" fill="#c8c8c8" stroke="#c8c8c8" >F2</text>
<text transform="matrix(0.4375,0.1151,-0.1387,0.1164,536.6,307.0)" x="0" y="18" font-family="Liberation Sans" font-weight="bold" font-size="50" text-anchor="middle" fill="#c5c5c5" stroke="#c5c5c5" >F3</text>
<text transform="matrix(0.4940,0.1300,-0.1180,0.1315,583.0,319.2)" x="0" y="18" font-family="Liberation Sans" font-weight="bold" font-size="50" text-anchor="middle" fill="#c8c8c8" stroke="#c8c8c8" >F4</text>
<text transform="matrix(0.5621,0.1479,-0.0903,0.1496,635.7,333.1)" x="0" y="18" font-family="Liberation Sans" font-weight="bold" font-size="50" text-anchor="middle" fill="#c5c5c5" stroke="#c5c5c5" >F5</text>
<text transform="matrix(0.1386,0.0396,-0.2004,0.0400,195.2,226.1)" x="0" y="18" font-family="Liberation Sans" font-weight="bold" font-size="50" text-anchor="middle" fill="#c5c5c5" stroke="#c5c5c5" >G6</text>
<text transform="matrix(0.1487,0.0424,-0.2024,0.0429,209.6,230.2)" x="0" y="18" font-family="Liberation Sans" font-weight="bold" font-size="50" text-anchor="middle" fill="#c8c8c8" stroke="#c8c8c8" >G7</text>
<text transform="matrix(0.1599,0.0457,-0.2041,0.0462,225.0,234.6)" x="0" y="18" font-family="Liberation Sans" font-weight="bold" font-size="50" text-anchor="middle" fill="#c5c5c5" stroke="#c5c5c5" >G8</text>
<text transform="matrix(0.1725,0.0492,-0.2055,0.0498,241.6,239.4)" x="0" y="18" font-family="Liberation Sans" font-weight="bold" font-size="50" text-anchor="middle" fill="#c8c8c8" stroke="#c8c8c8" >G1</text>
<text transform="matrix(0.1865,0.0533,-0.2065,0.0539,259.5,244.5)" x="0" y="18" font-family="Liberation Sans" font-weight="bold" font-size="50" text-anchor="middle" fill="#c5c5c5" stroke="#c5c5c5" >G2</text>
<text transform="matrix(0.2024,0.0578,-0.2069,0.0584,279.0,250.0)" x="0" y="18" font-family="Liberation Sans" font-weight="bold" font-size="50" text-anchor="middle" fill="#c8c8c8" stroke="#c8c8c8" >G3</text>
<text transform="matrix(0.2204,0.0629,-0.2066,0.0636,300.1,256.1)" x="0" y="18" font-family="Liberation Sans" font-weight="bold" font-size="50" text-anchor="middle" fill="#c5c5c5" stroke="#c5c5c5" >G4</text>
<text transform="matrix(0.2410,0.0688,-0.2054,0.0696,323.1,262.6)" x="0" y="18" font-family="Liberation Sans" font-weight="bold" font-size="50" text-anchor="middle" fill="#c8c8c8" stroke="#c8c8c8" >G5</text>
<text transform="matrix(0.2645,0.0755,-0.2030,0.0764,348.3,269.8)" x="0" y="18" font-family="Liberation Sans" font-weight="bold" font-size="50" text-anchor="middle" fill="#c5c5c5" stroke="#c5c5c5" >G6</text>
<text transform="matrix(0.2916,0.0833,-0.1992,0.0842,376.1,277.8)" x="0" y="18" font-family="Liberation Sans" font-weight="bold" font-size="50" text-anchor="middle" fill="#c8c8c8" stroke="#c8c8c8" >G7</text>
<text transform="matrix(0.3232,0.0923,-0.1933,0.0933,406.8,286.5)" x="0" y="18" font-family="Liberation Sans" font-weight="bold" font-size="50" text-anchor="middle" fill="#c5c5c5" stroke="#c5c5c5" >G8</text>
<text transform="matrix(0.3602,0.1028,-0.1849,0.1040,440.9,296.3)" x="0" y="18" font-family="Liberation Sans" font-weight="bold" font-size="50" text-anchor="middle" fill="#c8c8c8" stroke="#c8c8c8" >G1</text>
<text transform="matrix(0.4038,0.1153,-0.1731,0.1166,479.0,307.1)" x="0" y="18" font-family="Liberation Sans" font-weight="bold" font-size="50" text-anchor="middle" fill="#c5c5c5" stroke="#c5c5c5" >G2</text>
<text transform="matrix(0.4560,0.1302,-0.1568,0.1317,521.9,319.4)" x="0" y="18" font-family="Liberation Sans" font-weight="bold" font-size="50" text-anchor="middle" fill="#c8c8c8" stroke="#c8c8c8" >G3</text>
<text transform="matrix(0.5190,0.1482,-0.1344,0.1498,570.4,333.2)" x="0" y="18" font-family="Liberation Sans" font-weight="bold" font-size="50" text-anchor="middle" fill="#c5c5c5" stroke="#c5c5c5" >G4</text>
<text transform="matrix(0.5959,0.1701,-0.1039,0.1721,626.0,349.1)" x="0" y="18" font-family="Liberation Sans" font-weight="bold" font-size="50" text-anchor="middle" fill="#c8c8c8" stroke="#c8c8c8" >G5</text>
<text transform="matrix(0.1362,0.0425,-0.2151,0.0430,174.5,230.3)" x="0" y="18" font-family="Liberation Sans" font-weight="bold" font-size="50" text-anchor="middle" fill="#c8c8c8" stroke="#c8c8c8" >H6</text>
<text transform="matrix(0.1465,0.0457,-0.2178,0.0462,188.6,234.7)" x="0" y="18" font-family="Liberation Sans" font-weight="bold" font-size="50" text-anchor="middle" fill="#c5c5c5" stroke="#c5c5c5" >H7</text>
<text transform="matrix(0.1580,0.0493,-0.2203,0.0498,203.8,239.4)" x="0" y="18" font-family="Liberation Sans" font-weight="bold" font-size="50" text-anchor="middle" fill="#c8c8c8" stroke="#c8c8c8" >H8</text>
<text transform="matrix(0.1709,0.0533,-0.2225,0.0539,220.2,244.5)" x="0" y="18" font-family="Liberation Sans" font-weight="bold" font-size="50" text-anchor="middle" fill="#c5c5c5" stroke="#c5c5c5" >H1</text>
<text transform="matrix(0.1854,0.0578,-0.2243,0.0585,238.0,250.1)" x="0" y="18" font-family="Liberation Sans" font-weight="bold" font-size="50" text-anchor="middle" fill="#c8c8c8" stroke="#c8c8c8" >H2</text>
<text transform="matrix(0.2020,0.0630,-0.2255,0.0637,257.4,256.1)" x="0" y="18" font-family="Liberation Sans" font-weight="bold" font-size="50" text-anchor="middle" fill="#c5c5c5" stroke="#c5c5c5" >H3</text>
<text transform="matrix(0.2208,0.0689,-0.2261,0.0696,278.5,262.7)" x="0" y="18" font-family="Liberation Sans" font-weight="bold" font-size="50" text-anchor="middle" fill="#c8c8c8" stroke="#c8c8c8" >H4</text>
<text transform="matrix(0.2423,0.0756,-0.2257,0.0764,301.6,269.9)" x="0" y="18" font-family="Liberation Sans" font-weight="bold" font-size="50" text-anchor="middle" fill="#c5c5c5" stroke="#c5c5c5" >H5</text>
<text transform="matrix(0.2672,0.0834,-0.2241,0.0843,327.0,277.9)" x="0" y="18" font-family="Liberation Sans" font-weight="bold" font-size="50" text-anchor="middle" fill="#c8c8c8" stroke="#c8c8c8" >H6</text>
<text transform="matrix(0.2961,0.0924,-0.2210,0.0934,355.1,286.6)" x="0" y="18" font-family="Liberation Sans" font-weight="bold" font-size="50" text-anchor="middle" fill="#c5c5c5" stroke="#c5c5c5" >H7</text>
<text transform="matrix(0.3300,0.1029,-0.2157,0.1041,386.4,296.4)" x="0" y="18" font-family="Liberation Sans" font-weight="bold" font-size="50" text-anchor="middle" fill="#c8c8c8" stroke="#c8c8c8" >H8</text>
<text transform="matrix(0.3701,0.1154,-0.2076,0.1167,421.3,307.3)" x="0" y="18" font-family="Liberation Sans" font-weight="bold" font-size="50" text-anchor="middle" fill="#c5c5c5" stroke="#c5c5c5" >H1</text>
<text transform="matrix(0.4179,0.1304,-0.1957,0.1318,460.6,319.5)" x="0" y="18" font-family="Liberation Sans" font-weight="bold" font-size="50" text-anchor="middle" fill="#c8c8c8" stroke="#c8c8c8" >H2</text>
<text transform="matrix(0.4757,0.1484,-0.1787,0.1501,505.1,333.4)" x="0" y="18" font-family="Liberation Sans" font-weight="bold" font-size="50" text-anchor="middle" fill="#c5c5c5" stroke="#c5c5c5" >H3</text>
<text transform="matrix(0.5463,0.1704,-0.1546,0.1723,556.0,349.3)" x="0" y="18" font-family="Liberation Sans" font-weight="bold" font-size="50" text-anchor="middle" fill="#c8c8c8" stroke="#c8c8c8" >H4</text>
<text transform="matrix(0.6339,0.1977,-0.1207,0.2000,614.8,367.6)" x="0" y="18" font-family="Liberation Sans" font-weight="bold" font-size="50" text-anchor="middle" fill="#c5c5c5" stroke="#c5c5c5" >H5</text>
<text transform="matrix(0.1330,0.0457,-0.2316,0.0462,152.2,234.7)" x="0" y="18" font-family="Liberation Sans" font-weight="bold" font-size="50" text-anchor="middle" fill="#c5c5c5" stroke="#c5c5c5" >A6</text>
<text transform="matrix(0.1435,0.0493,-0.2351,0.0499,166.0,239.5)" x="0" y="18" font-family="Liberation Sans" font-weight="bold" font-size="50" text-anchor="middle" fill="#c8c8c8" stroke="#c8c8c8" >A7</text>
<text transform="matrix(0.1552,0.0534,-0.2385,0.0540,180.9,244.6)" x="0" y="18" font-family="Liberation Sans" font-weight="bold" font-size="50" text-anchor="middle" fill="#c5c5c5" stroke="#c5c5c5" >A8</text>
<text transform="matrix(0.1684,0.0579,-0.2417,0.0586,197.1,250.2)" x="0" y="18" font-family="Liberation Sans" font-weight="bold" font-size="50" text-anchor="middle" fill="#c8c8c8" stroke="#c8c8c8" >A1</text>
<text transform="matrix(0.1834,0.0631,-0.2445,0.0638,214.6,256.2)" x="0" y="18" font-family="Liberation Sans" font-weight="bold" font-size="50" text-anchor="middle" fill="#c5c5c5" stroke="#c5c5c5" >A2</text>
<text transform="matrix(0.2005,0.0689,-0.2468,0.0697,233.8,262.8)" x="0" y="18" font-family="Liberation Sans" font-weight="bold" font-size="50" text-anchor="middle" fill="#c8c8c8" stroke="#c8c8c8" >A3</text>
<text transform="matrix(0.2201,0.0757,-0.2484,0.0765,254.8,270.0)" x="0" y="18" font-family="Liberation Sans" font-weight="bold" font-size="50" text-anchor="middle" fill="#c5c5c5" stroke="#c5c5c5" >A4</text>
<text transform="matrix(0.2427,0.0834,-0.2492,0.0844,277.9,277.9)" x="0" y="18" font-family="Liberation Sans" font-weight="bold" font-size="50" text-anchor="middle" fill="#c8c8c8" stroke="#c8c8c8" >A5</text>
<text transform="matrix(0.2690,0.0925,-0.2487,0.0935,303.4,286.7)" x="0" y="18" font-family="Liberation Sans" font-weight="bold" font-size="50" text-anchor="middle" fill="#c5c5c5" stroke="#c5c5c5" >A6</text>
<text transform="matrix(0.2998,0.1031,-0.2466,0.1042,331.8,296.5)" x="0" y="18" font-family="Liberation Sans" font-weight="bold" font-size="50" text-anchor="middle" fill="#c8c8c8" stroke="#c8c8c8" >A7</text>
<text transform="matrix(0.3363,0.1156,-0.2422,0.1169,363.5,307.4)" x="0" y="18" font-family="Liberation Sans" font-weight="bold" font-size="50" text-anchor="middle" fill="#c5c5c5" stroke="#c5c5c5" >A8</text>
<text transform="matrix(0.3798,0.1306,-0.2348,0.1320,399.2,319.7)" x="0" y="18" font-family="Liberation Sans" font-weight="bold" font-size="50" text-anchor="middle" fill="#c8c8c8" stroke="#c8c8c8" >A1</text>
<text transform="matrix(0.4323,0.1486,-0.2231,0.1503,439.7,333.6)" x="0" y="18" font-family="Liberation Sans" font-weight="bold" font-size="50" text-anchor="middle" fill="#c5c5c5" stroke="#c5c5c5" >A2</text>
<text transform="matrix(0.4965,0.1707,-0.2056,0.1726,486.0,349.5)" x="0" y="18" font-family="Liberation Sans" font-weight="bold" font-size="50" text-anchor="middle" fill="#c8c8c8" stroke="#c8c8c8" >A3</text>
<text transform="matrix(0.5762,0.1981,-0.1797,0.2003,539.4,367.8)" x="0" y="18" font-family="Liberation Sans" font-weight="bold" font-size="50" text-anchor="middle" fill="#c5c5c5" stroke="#c5c5c5" >A4</text>
<text transform="matrix(0.6767,0.2326,-0.1420,0.2353,601.7,389.3)" x="0" y="18" font-family="Liberation Sans" font-weight="bold" font-size="50" text-anchor="middle" fill="#c8c8c8" stroke="#c8c8c8" >A5</text>
<text transform="matrix(0.1395,0.0534,-0.2546,0.0540,141.5,244.7)" x="0" y="18" font-family="Liberation Sans" font-weight="bold" font-size="50" text-anchor="middle" fill="#c5c5c5" stroke="#c5c5c5" >B7</text>
<text transform="matrix(0.1514,0.0580,-0.2591,0.0586,156.0,250.2)" x="0" y="18" font-family="Liberation Sans" font-weight="bold" font-size="50" text-anchor="middle" fill="#c8c8c8" stroke="#c8c8c8" >B8</text>
<text transform="matrix(0.1649,0.0631,-0.2634,0.0638,171.8,256.3)" x="0" y="18" font-family="Liberation Sans" font-weight="bold" font-size="50" text-anchor="middle" fill="#c5c5c5" stroke="#c5c5c5" >B1</text>
<text transform="matrix(0.1802,0.0690,-0.2675,0.0698,189.1,262.9)" x="0" y="18" font-family="Liberation Sans" font-weight="bold" font-size="50" text-anchor="middle" fill="#c8c8c8" stroke="#c8c8c8" >B2</text>
<text transform="matrix(0.1979,0.0758,-0.2712,0.0766,207.9,270.1)" x="0" y="18" font-family="Liberation Sans" font-weight="bold" font-size="50" text-anchor="middle" fill="#c5c5c5" stroke="#c5c5c5" >B3</text>
<text transform="matrix(0.2182,0.0835,-0.2743,0.0845,228.7,278.0)" x="0" y="18" font-family="Liberation Sans" font-weight="bold" font-size="50" text-anchor="middle" fill="#c8c8c8" stroke="#c8c8c8" >B4</text>
<text transform="matrix(0.2419,0.0926,-0.2765,0.0936,251.7,286.8)" x="0" y="18" font-family="Liberation Sans" font-weight="bold" font-size="50" text-anchor="middle" fill="#c5c5c5" stroke="#c5c5c5" >B5</text>
<text transform="matrix(0.2696,0.1032,-0.2775,0.1044,277.2,296.6)" x="0" y="18" font-family="Liberation Sans" font-weight="bold" font-size="50" text-anchor="middle" fill="#c8c8c8" stroke="#c8c8c8" >B6</text>
<text transform="matrix(0.3023,0.1158,-0.2769,0.1171,305.7,307.5)" x="0" y="18" font-family="Liberation Sans" font-weight="bold" font-size="50" text-anchor="middle" fill="#c5c5c5" stroke="#c5c5c5" >B7</text>
<text transform="matrix(0.3415,0.1307,-0.2739,0.1322,337.8,319.8)" x="0" y="18" font-family="Liberation Sans" font-weight="bold" font-size="50" text-anchor="middle" fill="#c8c8c8" stroke="#c8c8c8" >B8</text>
<text transform="matrix(0.3887,0.1488,-0.2676,0.1505,374.2,333.7)" x="0" y="18" font-family="Liberation Sans" font-weight="bold" font-size="50" text-anchor="middle" fill="#c5c5c5" stroke="#c5c5c5" >B1</text>
<text transform="matrix(0.4465,0.1710,-0.2567,0.1729,415.8,349.7)" x="0" y="18" font-family="Liberation Sans" font-weight="bold" font-size="50" text-anchor="middle" fill="#c8c8c8" stroke="#c8c8c8" >B2</text>
<text transform="matrix(0.5183,0.1984,-0.2390,0.2007,463.9,368.1)" x="0" y="18" font-family="Liberation Sans" font-weight="bold" font-size="50" text-anchor="middle" fill="#c5c5c5" stroke="#c5c5c5" >B3</text>
<text transform="matrix(0.6088,0.2331,-0.2115,0.2357,519.9,389.5)" x="0" y="18" font-family="Liberation Sans" font-weight="bold" font-size="50" text-anchor="middle" fill="#c8c8c8" stroke="#c8c8c8" >B4</text>
<text transform="matrix(0.7253,0.2777,-0.1695,0.2808,586.3,414.9)" x="0" y="18" font-family="Liberation Sans" font-weight="bold" font-size="50" text-anchor="middle" fill="#c5c5c5" stroke="#c5c5c5" >B5</text>
<text transform="matrix(0.1343,0.0580,-0.2766,0.0587,115.0,250.3)" x="0" y="18" font-family="Liberation Sans" font-weight="bold" font-size="50" text-anchor="middle" fill="#c8c8c8" stroke="#c8c8c8" >C7</text>
<text transform="matrix(0.1463,0.0632,-0.2825,0.0639,129.0,256.3)" x="0" y="18" font-family="Liberation Sans" font-weight="bold" font-size="50" text-anchor="middle" fill="#c5c5c5" stroke="#c5c5c5" >C8</text>
<text transform="matrix(0.1599,0.0691,-0.2883,0.0699,144.3,262.9)" x="0" y="18" font-family="Liberation Sans" font-weight="bold" font-size="50" text-anchor="middle" fill="#c8c8c8" stroke="#c8c8c8" >C1</text>
<text transform="matrix(0.1756,0.0758,-0.2940,0.0767,161.0,270.2)" x="0" y="18" font-family="Liberation Sans" font-weight="bold" font-size="50" text-anchor="middle" fill="#c5c5c5" stroke="#c5c5c5" >C2</text>
<text transform="matrix(0.1936,0.0836,-0.2994,0.0846,179.5,278.1)" x="0" y="18" font-family="Liberation Sans" font-weight="bold" font-size="50" text-anchor="middle" fill="#c8c8c8" stroke="#c8c8c8" >C3</text>
<text transform="matrix(0.2146,0.0927,-0.3043,0.0938,199.8,286.9)" x="0" y="18" font-family="Liberation Sans" font-weight="bold" font-size="50" text-anchor="middle" fill="#c5c5c5" stroke="#c5c5c5" >C4</text>
<text transform="matrix(0.2392,0.1033,-0.3086,0.1045,222.5,296.7)" x="0" y="18" font-family="Liberation Sans" font-weight="bold" font-size="50" text-anchor="middle" fill="#c8c8c8" stroke="#c8c8c8" >C5</text>
<text transform="matrix(0.2683,0.1159,-0.3117,0.1172,247.8,307.7)" x="0" y="18" font-family="Liberation Sans" font-weight="bold" font-size="50" text-anchor="middle" fill="#c5c5c5" stroke="#c5c5c5" >C6</text>
<text transform="matrix(0.3031,0.1309,-0.3132,0.1324,276.3,320.0)" x="0" y="18" font-family="Liberation Sans" font-weight="bold" font-size="50" text-anchor="middle" fill="#c8c8c8" stroke="#c8c8c8" >C7</text>
<text transform="matrix(0.3451,0.1491,-0.3123,0.1507,308.6,333.9)" x="0" y="18" font-family="Liberation Sans" font-weight="bold" font-size="50" text-anchor="middle" fill="#c5c5c5" stroke="#c5c5c5" >C8</text>
<text transform="matrix(0.3964,0.1712,-0.3079,0.1732,345.5,349.9)" x="0" y="18" font-family="Liberation Sans" font-weight="bold" font-size="50" text-anchor="middle" fill="#c8c8c8" stroke="#c8c8c8" >C1</text>
<text transform="matrix(0.4602,0.1988,-0.2984,0.2010,388.2,368.3)" x="0" y="18" font-family="Liberation Sans" font-weight="bold" font-size="50" text-anchor="middle" fill="#c5c5c5" stroke="#c5c5c5" >C2</text>
<text transform="matrix(0.5406,0.2335,-0.2812,0.2362,438.0,389.8)" x="0" y="18" font-family="Liberation Sans" font-weight="bold" font-size="50" text-anchor="middle" fill="#c8c8c8" stroke="#c8c8c8" >C3</text>
<text transform="matrix(0.6442,0.2783,-0.2525,0.2814,496.9,415.2)" x="0" y="18" font-family="Liberation Sans" font-weight="bold" font-size="50" text-anchor="middle" fill="#c5c5c5" stroke="#c5c5c5" >C4</text>
<text transform="matrix(0.7806,0.3372,-0.2058,0.3410,567.6,445.8)" x="0" y="18" font-family="Liberation Sans" font-weight="bold" font-size="50" text-anchor="middle" fill="#c8c8c8" stroke="#c8c8c8" >C5</text>
<text transform="matrix(0.9656,0.4171,-0.1308,0.4218,654.2,483.2)" x="0" y="18" font-family="Liberation Sans" font-weight="bold" font-size="50" text-anchor="middle" fill="#c5c5c5" stroke="#c5c5c5" >C6</text>
<text transform="matrix(0.1276,0.0632,-0.3015,0.0640,86.1,256.4)" x="0" y="18" font-family="Liberation Sans" font-weight="bold" font-size="50" text-anchor="middle" fill="#c5c5c5" stroke="#c5c5c5" >D7</text>
<text transform="matrix(0.1395,0.0691,-0.3091,0.0699,99.5,263.0)" x="0" y="18" font-family="Liberation Sans" font-weight="bold" font-size="50" text-anchor="middle" fill="#c8c8c8" stroke="#c8c8c8" >D8</text>
<text transform="matrix(0.1532,0.0759,-0.3168,0.0768,114.1,270.3)" x="0" y="18" font-family="Liberation Sans" font-weight="bold" font-size="50" text-anchor="middle" fill="#c5c5c5" stroke="#c5c5c5" >D1</text>
<text transform="matrix(0.1690,0.0837,-0.3246,0.0847,130.2,278.2)" x="0" y="18" font-family="Liberation Sans" font-weight="bold" font-size="50" text-anchor="middle" fill="#c8c8c8" stroke="#c8c8c8" >D2</text>
<text transform="matrix(0.1873,0.0928,-0.3323,0.0939,147.9,287.0)" x="0" y="18" font-family="Liberation Sans" font-weight="bold" font-size="50" text-anchor="middle" fill="#c5c5c5" stroke="#c5c5c5" >D3</text>
<text transform="matrix(0.2088,0.1035,-0.3397,0.1046,167.7,296.8)" x="0" y="18" font-family="Liberation Sans" font-weight="bold" font-size="50" text-anchor="middle" fill="#c8c8c8" stroke="#c8c8c8" >D4</text>
<text transform="matrix(0.2342,0.1161,-0.3466,0.1174,189.8,307.8)" x="0" y="18" font-family="Liberation Sans" font-weight="bold" font-size="50" text-anchor="middle" fill="#c5c5c5" stroke="#c5c5c5" >D5</text>
<text transform="matrix(0.2646,0.1311,-0.3526,0.1326,214.7,320.1)" x="0" y="18" font-family="Liberation Sans" font-weight="bold" font-size="50" text-anchor="middle" fill="#c8c8c8" stroke="#c8c8c8" >D6</text>
<text transform="matrix(0.3013,0.1493,-0.3571,0.1510,242.9,334.1)" x="0" y="18" font-family="Liberation Sans" font-weight="bold" font-size="50" text-anchor="middle" fill="#c5c5c5" stroke="#c5c5c5" >D7</text>
<text transform="matrix(0.3461,0.1715,-0.3593,0.1735,275.1,350.1)" x="0" y="18" font-family="Liberation Sans" font-weight="bold" font-size="50" text-anchor="middle" fill="#c8c8c8" stroke="#c8c8c8" >D8</text>
<text transform="matrix(0.4018,0.1991,-0.3580,0.2014,312.4,368.5)" x="0" y="18" font-family="Liberation Sans" font-weight="bold" font-size="50" text-anchor="middle" fill="#c5c5c5" stroke="#c5c5c5" >D1</text>
<text transform="matrix(0.4722,0.2340,-0.3512,0.2366,355.9,390.1)" x="0" y="18" font-family="Liberation Sans" font-weight="bold" font-size="50" text-anchor="middle" fill="#c8c8c8" stroke="#c8c8c8" >D2</text>
<text transform="matrix(0.5627,0.2788,-0.3358,0.2820,407.3,415.6)" x="0" y="18" font-family="Liberation Sans" font-weight="bold" font-size="50" text-anchor="middle" fill="#c5c5c5" stroke="#c5c5c5" >D3</text>
<text transform="matrix(0.6821,0.3380,-0.3067,0.3418,469.1,446.2)" x="0" y="18" font-family="Liberation Sans" font-weight="bold" font-size="50" text-anchor="middle" fill="#c8c8c8" stroke="#c8c8c8" >D4</text>
<text transform="matrix(0.8439,0.4182,-0.2553,0.4229,544.8,483.7)" x="0" y="18" font-family="Liberation Sans" font-weight="bold" font-size="50" text-anchor="middle" fill="#c5c5c5" stroke="#c5c5c5" >D5</text>
<text transform="matrix(1.0711,0.5307,-0.1664,0.5368,639.5,530.6)" x="0" y="18" font-family="Liberation Sans" font-weight="bold" font-size="50" text-anchor="middle" fill="#c8c8c8" stroke="#c8c8c8" >D6</text>
<text transform="matrix(0.1308,0.0760,-0.3398,0.0769,67.1,270.3)" x="0" y="18" font-family="Liberation Sans" font-weight="bold" font-size="50" text-anchor="middle" fill="#c5c5c5" stroke="#c5c5c5" >E8</text>
<text transform="matrix(0.1443,0.0838,-0.3499,0.0848,80.8,278.3)" x="0" y="18" font-family="Liberation Sans" font-weight="bold" font-size="50" text-anchor="middle" fill="#c8c8c8" stroke="#c8c8c8" >E1</text>
<text transform="matrix(0.1599,0.0929,-0.3603,0.0940,96.0,287.1)" x="0" y="18" font-family="Liberation Sans" font-weight="bold" font-size="50" text-anchor="middle" fill="#c5c5c5" stroke="#c5c5c5" >E2</text>
<text transform="matrix(0.1783,0.1036,-0.3709,0.1048,112.9,297.0)" x="0" y="18" font-family="Liberation Sans" font-weight="bold" font-size="50" text-anchor="middle" fill="#c8c8c8" stroke="#c8c8c8" >E3</text>
<text transform="matrix(0.2000,0.1162,-0.3815,0.1175,131.7,307.9)" x="0" y="18" font-family="Liberation Sans" font-weight="bold" font-size="50" text-anchor="middle" fill="#c5c5c5" stroke="#c5c5c5" >E4</text>
<text transform="matrix(0.2260,0.1313,-0.3920,0.1328,153.0,320.3)" x="0" y="18" font-family="Liberation Sans" font-weight="bold" font-size="50" text-anchor="middle" fill="#c8c8c8" stroke="#c8c8c8" >E5</text>
<text transform="matrix(0.2573,0.1495,-0.4020,0.1512,177.1,334.3)" x="0" y="18" font-family="Liberation Sans" font-weight="bold" font-size="50" text-anchor="middle" fill="#c5c5c5" stroke="#c5c5c5" >E6</text>
<text transform="matrix(0.2957,0.1718,-0.4109,0.1737,204.6,350.3)" x="0" y="18" font-family="Liberation Sans" font-weight="bold" font-size="50" text-anchor="middle" fill="#c8c8c8" stroke="#c8c8c8" >E7</text>
<text transform="matrix(0.3433,0.1995,-0.4179,0.2017,236.4,368.7)" x="0" y="18" font-family="Liberation Sans" font-weight="bold" font-size="50" text-anchor="middle" fill="#c5c5c5" stroke="#c5c5c5" >E8</text>
<text transform="matrix(0.4034,0.2344,-0.4215,0.2371,273.6,390.3)" x="0" y="18" font-family="Liberation Sans" font-weight="bold" font-size="50" text-anchor="middle" fill="#c8c8c8" stroke="#c8c8c8" >E1</text>
<text transform="matrix(0.4809,0.2794,-0.4195,0.2826,317.6,415.9)" x="0" y="18" font-family="Liberation Sans" font-weight="bold" font-size="50" text-anchor="middle" fill="#c5c5c5" stroke="#c5c5c5" >E2</text>
<text transform="matrix(0.5830,0.3387,-0.4080,0.3426,370.4,446.6)" x="0" y="18" font-family="Liberation Sans" font-weight="bold" font-size="50" text-anchor="middle" fill="#c8c8c8" stroke="#c8c8c8" >E3</text>
<text transform="matrix(0.7216,0.4192,-0.3804,0.4240,435.1,484.1)" x="0" y="18" font-family="Liberation Sans" font-weight="bold" font-size="50" text-anchor="middle" fill="#c5c5c5" stroke="#c5c5c5" >E4</text>
<text transform="matrix(0.9161,0.5323,-0.3249,0.5383,516.1,531.2)" x="0" y="18" font-family="Liberation Sans" font-weight="bold" font-size="50" text-anchor="middle" fill="#c8c8c8" stroke="#c8c8c8" >E5</text>
<text transform="matrix(1.2016,0.6981,-0.2189,0.7061,620.5,591.9)" x="0" y="18" font-family="Liberation Sans" font-weight="bold" font-size="50" text-anchor="middle" fill="#c5c5c5" stroke="#c5c5c5" >E6</text>
<text transform="matrix(0.1195,0.0839,-0.3752,0.0849,31.4,278.4)" x="0" y="18" font-family="Liberation Sans" font-weight="bold" font-size="50" text-anchor="middle" fill="#c8c8c8" stroke="#c8c8c8" >F8</text>
<text transform="matrix(0.1325,0.0930,-0.3883,0.0941,44.0,287.3)" x="0" y="18" font-family="Liberation Sans" font-weight="bold" font-size="50" text-anchor="middle" fill="#c5c5c5" stroke="#c5c5c5" >F1</text>
<text transform="matrix(0.1477,0.1037,-0.4021,0.1049,58.0,297.1)" x="0" y="18" font-family="Liberation Sans" font-weight="bold" font-size="50" text-anchor="middle" fill="#c8c8c8" stroke="#c8c8c8" >F2</text>
<text transform="matrix(0.1657,0.1164,-0.4166,0.1177,73.6,308.0)" x="0" y="18" font-family="Liberation Sans" font-weight="bold" font-size="50" text-anchor="middle" fill="#c5c5c5" stroke="#c5c5c5" >F3</text>
<text transform="matrix(0.1873,0.1315,-0.4316,0.1330,91.2,320.4)" x="0" y="18" font-family="Liberation Sans" font-weight="bold" font-size="50" text-anchor="middle" fill="#c8c8c8" stroke="#c8c8c8" >F4</text>
<text transform="matrix(0.2133,0.1497,-0.4471,0.1514,111.2,334.4)" x="0" y="18" font-family="Liberation Sans" font-weight="bold" font-size="50" text-anchor="middle" fill="#c5c5c5" stroke="#c5c5c5" >F5</text>
<text transform="matrix(0.2451,0.1721,-0.4627,0.1740,134.0,350.5)" x="0" y="18" font-family="Liberation Sans" font-weight="bold" font-size="50" text-anchor="middle" fill="#c8c8c8" stroke="#c8c8c8" >F6</text>
<text transform="matrix(0.2846,0.1998,-0.4780,0.2021,160.4,369.0)" x="0" y="18" font-family="Liberation Sans" font-weight="bold" font-size="50" text-anchor="middle" fill="#c5c5c5" stroke="#c5c5c5" >F7</text>
<text transform="matrix(0.3345,0.2348,-0.4920,0.2375,191.2,390.6)" x="0" y="18" font-family="Liberation Sans" font-weight="bold" font-size="50" text-anchor="middle" fill="#c8c8c8" stroke="#c8c8c8" >F8</text>
<text transform="matrix(0.3988,0.2800,-0.5035,0.2831,227.6,416.2)" x="0" y="18" font-family="Liberation Sans" font-weight="bold" font-size="50" text-anchor="middle" fill="#c5c5c5" stroke="#c5c5c5" >F1</text>
<text transform="matrix(0.4835,0.3395,-0.5097,0.3434,271.4,446.9)" x="0" y="18" font-family="Liberation Sans" font-weight="bold" font-size="50" text-anchor="middle" fill="#c8c8c8" stroke="#c8c8c8" >F2</text>
<text transform="matrix(0.5986,0.4203,-0.5062,0.4251,325.1,484.6)" x="0" y="18" font-family="Liberation Sans" font-weight="bold" font-size="50" text-anchor="middle" fill="#c5c5c5" stroke="#c5c5c5" >F3</text>
<text transform="matrix(0.7602,0.5338,-0.4844,0.5398,392.3,531.8)" x="0" y="18" font-family="Liberation Sans" font-weight="bold" font-size="50" text-anchor="middle" fill="#c8c8c8" stroke="#c8c8c8" >F4</text>
<text transform="matrix(0.9976,0.7004,-0.4276,0.7084,479.0,592.7)" x="0" y="18" font-family="Liberation Sans" font-weight="bold" font-size="50" text-anchor="middle" fill="#c5c5c5" stroke="#c5c5c5" >F5</text>
<text transform="matrix(1.3666,0.9596,-0.3009,0.9705,595.0,674.1)" x="0" y="18" font-family="Liberation Sans" font-weight="bold" font-size="50" text-anchor="middle" fill="#c8c8c8" stroke="#c8c8c8" >F6</text>
<text transform="matrix(0.1050,0.0931,-0.4164,0.0942,-8.1,287.4)" x="0" y="18" font-family="Liberation Sans" font-weight="bold" font-size="50" text-anchor="middle" fill="#c5c5c5" stroke="#c5c5c5" >G8</text>
<text transform="matrix(0.1171,0.1039,-0.4335,0.1050,3.0,297.2)" x="0" y="18" font-family="Liberation Sans" font-weight="bold" font-size="50" text-anchor="middle" fill="#c8c8c8" stroke="#c8c8c8" >G1</text>
<text transform="matrix(0.1314,0.1165,-0.4518,0.1178,15.4,308.2)" x="0" y="18" font-family="Liberation Sans" font-weight="bold" font-size="50" text-anchor="middle" fill="#c5c5c5" stroke="#c5c5c5" >G2</text>
<text transform="matrix(0.1484,0.1317,-0.4713,0.1332,29.3,320.6)" x="0" y="18" font-family="Liberation Sans" font-weight="bold" font-size="50" text-anchor="middle" fill="#c8c8c8" stroke="#c8c8c8" >G3</text>
<text transform="matrix(0.1690,0.1500,-0.4923,0.1517,45.2,334.6)" x="0" y="18" font-family="Liberation Sans" font-weight="bold" font-size="50" text-anchor="middle" fill="#c5c5c5" stroke="#c5c5c5" >G4</text>
<text transform="matrix(0.1943,0.1724,-0.5146,0.1743,63.3,350.6)" x="0" y="18" font-family="Liberation Sans" font-weight="bold" font-size="50" text-anchor="middle" fill="#c8c8c8" stroke="#c8c8c8" >G5</text>
<text transform="matrix(0.2256,0.2002,-0.5382,0.2024,84.2,369.2)" x="0" y="18" font-family="Liberation Sans" font-weight="bold" font-size="50" text-anchor="middle" fill="#c5c5c5" stroke="#c5c5c5" >G6</text>
<text transform="matrix(0.2652,0.2353,-0.5628,0.2380,108.6,390.9)" x="0" y="18" font-family="Liberation Sans" font-weight="bold" font-size="50" text-anchor="middle" fill="#c8c8c8" stroke="#c8c8c8" >G7</text>
<text transform="matrix(0.3163,0.2806,-0.5878,0.2837,137.5,416.5)" x="0" y="18" font-family="Liberation Sans" font-weight="bold" font-size="50" text-anchor="middle" fill="#c5c5c5" stroke="#c5c5c5" >G8</text>
<text transform="matrix(0.3836,0.3403,-0.6119,0.3441,172.2,447.3)" x="0" y="18" font-family="Liberation Sans" font-weight="bold" font-size="50" text-anchor="middle" fill="#c8c8c8" stroke="#c8c8c8" >G1</text>
<text transform="matrix(0.4750,0.4214,-0.6326,0.4261,214.8,485.1)" x="0" y="18" font-family="Liberation Sans" font-weight="bold" font-size="50" text-anchor="middle" fill="#c5c5c5" stroke="#c5c5c5" >G2</text>
<text transform="matrix(0.6035,0.5353,-0.6447,0.5414,268.2,532.4)" x="0" y="18" font-family="Liberation Sans" font-weight="bold" font-size="50" text-anchor="middle" fill="#c8c8c8" stroke="#c8c8c8" >G3</text>
<text transform="matrix(0.7922,0.7027,-0.6377,0.7107,337.0,593.5)" x="0" y="18" font-family="Liberation Sans" font-weight="bold" font-size="50" text-anchor="middle" fill="#c5c5c5" stroke="#c5c5c5" >G4</text>
<text transform="matrix(1.0859,0.9633,-0.5881,0.9743,429.1,675.2)" x="0" y="18" font-family="Liberation Sans" font-weight="bold" font-size="50" text-anchor="middle" fill="#c8c8c8" stroke="#c8c8c8" >G5</text>
<text transform="matrix(0.0969,0.1167,-0.4870,0.1180,-42.9,308.3)" x="0" y="18" font-family="Liberation Sans" font-weight="bold" font-size="50" text-anchor="middle" fill="#c5c5c5" stroke="#c5c5c5" >H1</text>
<text transform="matrix(0.1095,0.1319,-0.5112,0.1333,-32.6,320.7)" x="0" y="18" font-family="Liberation Sans" font-weight="bold" font-size="50" text-anchor="middle" fill="#c8c8c8" stroke="#c8c8c8" >H2</text>
<text transform="matrix(0.1247,0.1502,-0.5376,0.1519,-21.0,334.8)" x="0" y="18" font-family="Liberation Sans" font-weight="bold" font-size="50" text-anchor="middle" fill="#c5c5c5" stroke="#c5c5c5" >H3</text>
<text transform="matrix(0.1433,0.1726,-0.5667,0.1746,-7.6,350.8)" x="0" y="18" font-family="Liberation Sans" font-weight="bold" font-size="50" text-anchor="middle" fill="#c8c8c8" stroke="#c8c8c8" >H4</text>
<text transform="matrix(0.1665,0.2005,-0.5987,0.2028,7.8,369.4)" x="0" y="18" font-family="Liberation Sans" font-weight="bold" font-size="50" text-anchor="middle" fill="#c5c5c5" stroke="#c5c5c5" >H5</text>
<text transform="matrix(0.1957,0.2357,-0.6339,0.2384,25.8,391.1)" x="0" y="18" font-family="Liberation Sans" font-weight="bold" font-size="50" text-anchor="middle" fill="#c8c8c8" stroke="#c8c8c8" >H6</text>
<text transform="matrix(0.2335,0.2811,-0.6725,0.2843,47.2,416.8)" x="0" y="18" font-family="Liberation Sans" font-weight="bold" font-size="50" text-anchor="middle" fill="#c5c5c5" stroke="#c5c5c5" >H7</text>
<text transform="matrix(0.2832,0.3411,-0.7146,0.3449,72.8,447.7)" x="0" y="18" font-family="Liberation Sans" font-weight="bold" font-size="50" text-anchor="middle" fill="#c8c8c8" stroke="#c8c8c8" >H8</text>
<text transform="matrix(0.3508,0.4224,-0.7597,0.4272,104.3,485.6)" x="0" y="18" font-family="Liberation Sans" font-weight="bold" font-size="50" text-anchor="middle" fill="#c5c5c5" stroke="#c5c5c5" >H1</text>
<text transform="matrix(0.4458,0.5369,-0.8060,0.5430,143.7,533.0)" x="0" y="18" font-family="Liberation Sans" font-weight="bold" font-size="50" text-anchor="middle" fill="#c8c8c8" stroke="#c8c8c8" >H2</text>
<text transform="matrix(0.5854,0.7050,-0.8492,0.7131,194.5,594.2)" x="0" y="18" font-family="Liberation Sans" font-weight="bold" font-size="50" text-anchor="middle" fill="#c5c5c5" stroke="#c5c5c5" >H3</text>
<text transform="matrix(0.8029,0.9670,-0.8775,0.9780,262.6,676.3)" x="0" y="18" font-family="Liberation Sans" font-weight="bold" font-size="50" text-anchor="middle" fill="#c8c8c8" stroke="#c8c8c8" >H4</text>
<text transform="matrix(0.1071,0.2009,-0.6594,0.2031,-68.6,369.6)" x="0" y="18" font-family="Liberation Sans" font-weight="bold" font-size="50" text-anchor="middle" fill="#c5c5c5" stroke="#c5c5c5" >A4</text>
<text transform="matrix(0.1260,0.2362,-0.7053,0.2389,-57.1,391.4)" x="0" y="18" font-family="Liberation Sans" font-weight="bold" font-size="50" text-anchor="middle" fill="#c8c8c8" stroke="#c8c8c8" >A5</text>
<text transform="matrix(0.1503,0.2817,-0.7576,0.2849,-43.3,417.1)" x="0" y="18" font-family="Liberation Sans" font-weight="bold" font-size="50" text-anchor="middle" fill="#c5c5c5" stroke="#c5c5c5" >A6</text>
<text transform="matrix(0.1824,0.3418,-0.8178,0.3457,-26.8,448.1)" x="0" y="18" font-family="Liberation Sans" font-weight="bold" font-size="50" text-anchor="middle" fill="#c8c8c8" stroke="#c8c8c8" >A7</text>
<text transform="matrix(0.2259,0.4235,-0.8874,0.4283,-6.6,486.0)" x="0" y="18" font-family="Liberation Sans" font-weight="bold" font-size="50" text-anchor="middle" fill="#c5c5c5" stroke="#c5c5c5" >A8</text>
<text transform="matrix(0.2872,0.5384,-0.9682,0.5445,18.8,533.6)" x="0" y="18" font-family="Liberation Sans" font-weight="bold" font-size="50" text-anchor="middle" fill="#c8c8c8" stroke="#c8c8c8" >A1</text>
<text transform="matrix(0.3773,0.7074,-1.0621,0.7154,51.6,595.0)" x="0" y="18" font-family="Liberation Sans" font-weight="bold" font-size="50" text-anchor="middle" fill="#c5c5c5" stroke="#c5c5c5" >A2</text>
<text transform="matrix(0.5178,0.9707,-1.1692,0.9818,95.5,677.4)" x="0" y="18" font-family="Liberation Sans" font-weight="bold" font-size="50" text-anchor="middle" fill="#c8c8c8" stroke="#c8c8c8" >A3</text>
<text transform="matrix(0.1678,0.7097,-1.2763,0.7178,-91.8,595.8)" x="0" y="18" font-family="Liberation Sans" font-weight="bold" font-size="50" text-anchor="middle" fill="#c5c5c5" stroke="#c5c5c5" >B1</text>
<text transform="matrix(0.2305,0.9745,-1.4631,0.9856,-72.3,678.5)" x="0" y="18" font-family="Liberation Sans" font-weight="bold" font-size="50" text-anchor="middle" fill="#c8c8c8" stroke="#c8c8c8" >B2</text>
<rect x="0" y="150" width="574" height="300" fill="url(#fog)"/>
<defs><clipPath id="cl"><path d="M274.3,138.7C285.7,138.5 296.8,139.1 307.4,142.0C318.0,144.9 329.3,150.6 337.8,155.9C346.2,161.2 351.7,166.5 358.1,173.7C364.5,180.9 370.9,190.6 376.0,199.1C381.1,207.6 385.0,215.2 388.6,224.5C392.2,233.8 393.5,244.2 397.5,255.0C401.5,265.8 407.9,276.9 412.5,289.0C417.1,301.1 422.5,318.6 425.0,327.8C427.5,337.0 427.4,340.8 427.6,344.0C427.8,347.2 428.4,345.3 426.3,347.0C424.2,348.7 418.9,351.7 415.0,354.0C411.1,356.3 404.8,356.7 403.0,361.0C401.2,365.3 405.3,375.2 404.0,380.0C402.7,384.8 398.5,390.0 395.0,390.0C391.5,390.0 385.7,382.5 383.0,380.0C380.3,377.5 380.5,372.2 379.0,375.0C377.5,377.8 378.5,390.2 374.0,396.5C369.5,402.8 356.4,408.4 352.0,413.0C347.6,417.6 350.4,420.7 347.9,424.0C345.4,427.3 341.2,429.4 337.0,433.0C332.8,436.6 326.3,444.5 322.5,445.8C318.7,447.1 319.5,441.9 314.2,440.8C308.9,439.7 299.8,439.8 290.9,439.2C282.0,438.7 269.9,437.2 261.0,437.5C252.2,437.8 243.9,439.1 237.8,440.8C231.7,442.5 227.6,447.8 224.5,447.5C221.4,447.2 222.3,441.7 219.5,439.2C216.7,436.7 212.0,434.4 207.9,432.5C203.7,430.6 197.9,430.7 194.6,427.6C191.3,424.5 189.0,420.6 188.0,414.0C187.0,407.4 188.7,395.7 188.4,388.0C188.1,380.3 188.0,371.0 186.3,367.6C184.6,364.2 181.1,366.2 178.0,367.6C174.9,369.0 171.9,372.4 167.8,375.9C163.7,379.3 157.8,386.2 153.3,388.3C148.8,390.4 145.5,390.4 141.0,388.3C136.5,386.2 130.3,378.6 126.5,375.9C122.7,373.1 119.3,373.9 118.3,371.8C117.3,369.7 118.6,369.7 120.3,363.5C122.0,357.3 125.2,345.2 128.6,334.6C132.1,324.0 135.8,314.0 141.0,299.6C146.2,285.2 155.1,259.7 159.5,248.0C163.9,236.3 164.2,237.3 167.7,229.6C171.2,221.9 175.3,210.9 180.4,201.6C185.5,192.3 192.3,181.3 198.2,173.7C204.1,166.1 209.2,161.0 216.0,155.9C222.8,150.8 229.1,146.1 238.8,143.2C248.5,140.3 262.9,138.9 274.3,138.7z"/></clipPath><filter id="b4" x="-50%" y="-50%" width="200%" height="200%"><feGaussianBlur stdDeviation="5"/></filter><filter id="b10" x="-50%" y="-50%" width="200%" height="200%"><feGaussianBlur stdDeviation="9"/></filter><filter id="b1" x="-50%" y="-50%" width="200%" height="200%"><feGaussianBlur stdDeviation="0.5"/></filter><filter id="b2" x="-50%" y="-50%" width="200%" height="200%"><feGaussianBlur stdDeviation="2.5"/></filter><radialGradient id="flsh" cx="0.5" cy="0.5" r="0.5"><stop offset="0" stop-color="#000" stop-opacity="0.30"/><stop offset="0.6" stop-color="#000" stop-opacity="0.12"/><stop offset="1" stop-color="#000" stop-opacity="0"/></radialGradient></defs>
<ellipse cx="272" cy="420" rx="165" ry="48" fill="url(#flsh)"/>
<g filter="url(#b4)"><path d="M117.0,374.0C106.7,378.0 132.0,393.0 143.0,394.0C154.0,395.0 173.5,374.0 183.0,380.0C192.5,386.0 193.0,418.3 200.0,430.0C207.0,441.7 212.5,448.0 225.0,450.0C237.5,452.0 258.7,442.0 275.0,442.0C291.3,442.0 310.0,453.2 323.0,450.0C336.0,446.8 343.5,431.3 353.0,423.0C362.5,414.7 371.3,405.8 380.0,400.0C388.7,394.2 396.7,396.3 405.0,388.0C413.3,379.7 431.7,356.7 430.0,350.0C428.3,343.3 414.2,343.3 395.0,348.0C375.8,352.7 346.7,374.3 315.0,378.0C283.3,381.7 238.0,370.7 205.0,370.0C172.0,369.3 127.3,370.0 117.0,374.0z" fill="#000" opacity="0.22"/></g>
<path d="M274.3,138.7C285.7,138.5 296.8,139.1 307.4,142.0C318.0,144.9 329.3,150.6 337.8,155.9C346.2,161.2 351.7,166.5 358.1,173.7C364.5,180.9 370.9,190.6 376.0,199.1C381.1,207.6 385.0,215.2 388.6,224.5C392.2,233.8 393.5,244.2 397.5,255.0C401.5,265.8 407.9,276.9 412.5,289.0C417.1,301.1 422.5,318.6 425.0,327.8C427.5,337.0 427.4,340.8 427.6,344.0C427.8,347.2 428.4,345.3 426.3,347.0C424.2,348.7 418.9,351.7 415.0,354.0C411.1,356.3 404.8,356.7 403.0,361.0C401.2,365.3 405.3,375.2 404.0,380.0C402.7,384.8 398.5,390.0 395.0,390.0C391.5,390.0 385.7,382.5 383.0,380.0C380.3,377.5 380.5,372.2 379.0,375.0C377.5,377.8 378.5,390.2 374.0,396.5C369.5,402.8 356.4,408.4 352.0,413.0C347.6,417.6 350.4,420.7 347.9,424.0C345.4,427.3 341.2,429.4 337.0,433.0C332.8,436.6 326.3,444.5 322.5,445.8C318.7,447.1 319.5,441.9 314.2,440.8C308.9,439.7 299.8,439.8 290.9,439.2C282.0,438.7 269.9,437.2 261.0,437.5C252.2,437.8 243.9,439.1 237.8,440.8C231.7,442.5 227.6,447.8 224.5,447.5C221.4,447.2 222.3,441.7 219.5,439.2C216.7,436.7 212.0,434.4 207.9,432.5C203.7,430.6 197.9,430.7 194.6,427.6C191.3,424.5 189.0,420.6 188.0,414.0C187.0,407.4 188.7,395.7 188.4,388.0C188.1,380.3 188.0,371.0 186.3,367.6C184.6,364.2 181.1,366.2 178.0,367.6C174.9,369.0 171.9,372.4 167.8,375.9C163.7,379.3 157.8,386.2 153.3,388.3C148.8,390.4 145.5,390.4 141.0,388.3C136.5,386.2 130.3,378.6 126.5,375.9C122.7,373.1 119.3,373.9 118.3,371.8C117.3,369.7 118.6,369.7 120.3,363.5C122.0,357.3 125.2,345.2 128.6,334.6C132.1,324.0 135.8,314.0 141.0,299.6C146.2,285.2 155.1,259.7 159.5,248.0C163.9,236.3 164.2,237.3 167.7,229.6C171.2,221.9 175.3,210.9 180.4,201.6C185.5,192.3 192.3,181.3 198.2,173.7C204.1,166.1 209.2,161.0 216.0,155.9C222.8,150.8 229.1,146.1 238.8,143.2C248.5,140.3 262.9,138.9 274.3,138.7z" fill="#403f39"/>
<g clip-path="url(#cl)">
<g filter="url(#b10)">
<ellipse cx="283" cy="248" rx="38" ry="125" fill="#4d4b48" transform="rotate(0 283 248)"/>
<ellipse cx="355" cy="258" rx="22" ry="100" fill="#37362f" transform="rotate(-8 355 258)"/>
<ellipse cx="403" cy="278" rx="9" ry="70" fill="#4a4943" transform="rotate(-20 403 278)"/>
<ellipse cx="277" cy="150" rx="58" ry="17" fill="#67674e" transform="rotate(0 277 150)"/>
<ellipse cx="345" cy="173" rx="22" ry="14" fill="#5a5a48" transform="rotate(30 345 173)"/>
<ellipse cx="223" cy="170" rx="16" ry="26" fill="#5c5d49" transform="rotate(35 223 170)"/>
<ellipse cx="185" cy="218" rx="9" ry="70" fill="#2f2e2a" transform="rotate(18 185 218)"/>
<ellipse cx="187" cy="328" rx="8" ry="50" fill="#2b2a26" transform="rotate(8 187 328)"/>
<ellipse cx="153" cy="318" rx="14" ry="50" fill="#4a4a40" transform="rotate(15 153 318)"/>
<ellipse cx="225" cy="228" rx="7" ry="80" fill="#4c4b42" transform="rotate(16 225 228)"/>
<ellipse cx="210" cy="338" rx="10" ry="50" fill="#302f2b" transform="rotate(5 210 338)"/>
<ellipse cx="275" cy="388" rx="45" ry="38" fill="#494844" transform="rotate(0 275 388)"/>
</g>
<path d="M117.0,366.0C119.2,364.0 125.3,366.0 130.0,368.0C134.7,370.0 140.2,376.7 145.0,378.0C149.8,379.3 154.3,378.0 159.0,376.0C163.7,374.0 168.3,368.7 173.0,366.0C177.7,363.3 184.0,356.3 187.0,360.0C190.0,363.7 193.8,382.0 191.0,388.0C188.2,394.0 178.5,394.3 170.0,396.0C161.5,397.7 148.8,400.7 140.0,398.0C131.2,395.3 120.8,385.3 117.0,380.0C113.2,374.7 114.8,368.0 117.0,366.0z" fill="#1f1f1b"/>
<path d="M349.0,374.0C354.7,369.3 369.7,372.7 379.0,370.0C388.3,367.3 400.3,355.3 405.0,358.0C409.7,360.7 408.7,380.2 407.0,386.0C405.3,391.8 400.0,392.7 395.0,393.0C390.0,393.3 380.5,387.5 377.0,388.0C373.5,388.5 378.2,391.7 374.0,396.0C369.8,400.3 356.8,413.7 352.0,414.0C347.2,414.3 345.5,404.7 345.0,398.0C344.5,391.3 343.3,378.7 349.0,374.0z" fill="#2a2a25"/>
<path d="M351.0,380.0C353.0,374.7 360.7,377.0 365.0,376.0C369.3,375.0 375.3,372.0 377.0,374.0C378.7,376.0 377.0,383.7 375.0,388.0C373.0,392.3 368.7,396.7 365.0,400.0C361.3,403.3 355.3,411.3 353.0,408.0C350.7,404.7 349.0,385.3 351.0,380.0z" fill="#3b3b30"/>
<path d="M352.0,412.0C354.5,410.5 363.2,406.3 367.0,403.0C370.8,399.7 373.0,396.5 375.0,392.0C377.0,387.5 378.3,378.7 379.0,376.0" stroke="#5c5d40" stroke-width="2" fill="none" opacity="0.9"/>
<path d="M180.4,201.6C183.4,197.0 192.3,181.3 198.2,173.7C204.1,166.1 209.2,161.0 216.0,155.9C222.8,150.8 229.1,146.1 238.8,143.2C248.5,140.3 262.9,138.9 274.3,138.7C285.7,138.5 296.8,139.1 307.4,142.0C318.0,144.9 329.3,150.6 337.8,155.9C346.2,161.2 354.7,170.7 358.1,173.7" fill="none" stroke="#787a55" stroke-width="6" opacity="0.55" filter="url(#b2)"/>
</g>
<path d="M239.0,148.0C237.7,149.8 234.0,152.3 231.0,159.0C228.0,165.7 223.8,178.2 221.0,188.0C218.2,197.8 217.0,206.3 214.0,218.0C211.0,229.7 206.5,244.7 203.0,258.0C199.5,271.3 195.7,284.5 193.0,298.0C190.3,311.5 187.8,325.7 187.0,339.0C186.2,352.3 187.8,371.5 188.0,378.0" fill="none" stroke="#7d8255" stroke-width="4" opacity="0.315" filter="url(#b2)"/>
<path d="M239.0,148.0C237.7,149.8 234.0,152.3 231.0,159.0C228.0,165.7 223.8,178.2 221.0,188.0C218.2,197.8 217.0,206.3 214.0,218.0C211.0,229.7 206.5,244.7 203.0,258.0C199.5,271.3 195.7,284.5 193.0,298.0C190.3,311.5 187.8,325.7 187.0,339.0C186.2,352.3 187.8,371.5 188.0,378.0" fill="none" stroke="#939862" stroke-width="1.1" opacity="0.9" filter="url(#b1)"/>
<path d="M257.0,161.0C255.7,164.0 252.0,171.0 249.0,179.0C246.0,187.0 243.0,195.8 239.0,209.0C235.0,222.2 229.2,244.8 225.0,258.0C220.8,271.2 217.3,278.0 214.0,288.0C210.7,298.0 207.7,307.5 205.0,318.0C202.3,328.5 199.7,339.3 198.0,351.0C196.3,362.7 195.3,376.0 195.0,388.0C194.7,400.0 195.8,417.2 196.0,423.0" fill="none" stroke="#7d8255" stroke-width="4" opacity="0.315" filter="url(#b2)"/>
<path d="M257.0,161.0C255.7,164.0 252.0,171.0 249.0,179.0C246.0,187.0 243.0,195.8 239.0,209.0C235.0,222.2 229.2,244.8 225.0,258.0C220.8,271.2 217.3,278.0 214.0,288.0C210.7,298.0 207.7,307.5 205.0,318.0C202.3,328.5 199.7,339.3 198.0,351.0C196.3,362.7 195.3,376.0 195.0,388.0C194.7,400.0 195.8,417.2 196.0,423.0" fill="none" stroke="#939862" stroke-width="1.1" opacity="0.9" filter="url(#b1)"/>
<path d="M311.0,223.0C311.8,226.0 313.0,229.5 316.0,241.0C319.0,252.5 324.8,272.5 329.0,292.0C333.2,311.5 338.0,340.3 341.0,358.0C344.0,375.7 345.7,388.0 347.0,398.0C348.3,408.0 348.7,414.7 349.0,418.0" fill="none" stroke="#7d8255" stroke-width="4" opacity="0.21" filter="url(#b2)"/>
<path d="M311.0,223.0C311.8,226.0 313.0,229.5 316.0,241.0C319.0,252.5 324.8,272.5 329.0,292.0C333.2,311.5 338.0,340.3 341.0,358.0C344.0,375.7 345.7,388.0 347.0,398.0C348.3,408.0 348.7,414.7 349.0,418.0" fill="none" stroke="#939862" stroke-width="1.1" opacity="0.6" filter="url(#b1)"/>
<path d="M212.0,158.0C208.8,162.3 199.2,175.0 193.0,184.0C186.8,193.0 180.0,201.0 175.0,212.0C170.0,223.0 167.2,238.2 163.0,250.0C158.8,261.8 154.2,271.7 150.0,283.0C145.8,294.3 141.8,307.2 138.0,318.0C134.2,328.8 129.8,340.0 127.0,348.0C124.2,356.0 122.0,363.0 121.0,366.0" fill="none" stroke="#7d8255" stroke-width="4" opacity="0.27999999999999997" filter="url(#b2)"/>
<path d="M212.0,158.0C208.8,162.3 199.2,175.0 193.0,184.0C186.8,193.0 180.0,201.0 175.0,212.0C170.0,223.0 167.2,238.2 163.0,250.0C158.8,261.8 154.2,271.7 150.0,283.0C145.8,294.3 141.8,307.2 138.0,318.0C134.2,328.8 129.8,340.0 127.0,348.0C124.2,356.0 122.0,363.0 121.0,366.0" fill="none" stroke="#939862" stroke-width="1.1" opacity="0.8" filter="url(#b1)"/>
<path d="M178.0,289.0C178.8,291.3 181.7,298.2 183.0,303.0C184.3,307.8 185.5,315.5 186.0,318.0" fill="none" stroke="#7d8255" stroke-width="4" opacity="0.175" filter="url(#b2)"/>
<path d="M178.0,289.0C178.8,291.3 181.7,298.2 183.0,303.0C184.3,307.8 185.5,315.5 186.0,318.0" fill="none" stroke="#939862" stroke-width="1.1" opacity="0.5" filter="url(#b1)"/>
<path d="M358.1,173.7C361.1,177.9 370.9,190.6 376.0,199.1C381.1,207.6 385.0,215.2 388.6,224.5C392.2,233.8 393.5,244.2 397.5,255.0C401.5,265.8 407.9,276.9 412.5,289.0C417.1,301.1 422.6,318.6 425.0,327.8C427.4,337.0 426.7,341.3 427.0,344.0" fill="none" stroke="#6a6c4c" stroke-width="1.2" opacity="0.8"/>
<path d="M195.0,426.0C197.2,427.0 203.8,429.8 208.0,432.0C212.2,434.2 217.2,436.5 220.0,439.0C222.8,441.5 222.0,446.7 225.0,447.0C228.0,447.3 232.0,442.6 238.0,441.0C244.0,439.4 252.2,437.8 261.0,437.5C269.8,437.2 282.2,438.4 291.0,439.0C299.8,439.6 308.8,439.8 314.0,441.0C319.2,442.2 318.2,447.3 322.0,446.0C325.8,444.7 332.7,436.7 337.0,433.0C341.3,429.3 346.2,425.5 348.0,424.0" fill="none" stroke="#6a6c45" stroke-width="1.4" opacity="0.8"/>
</svg></div>
<div class="a" style="left:700px;top:89px;width:22px;height:22px;border-radius:11px;background:#efefef"></div>
<div class="a" style="left:730px;top:89px;width:22px;height:22px;border-radius:11px;background:#efefef"></div>
<div class="a" style="left:760px;top:89px;width:22px;height:22px;border-radius:11px;background:#efefef"></div>
<div class="a" style="left:790px;top:89px;width:22px;height:22px;border-radius:11px;background:#efefef"></div>
<svg style="left:704px;top:93px" width="14" height="13"><rect x="0.8" y="0.8" width="12.4" height="8.4" fill="none" stroke="#8a8a8a" stroke-width="1.6"/><rect x="5.5" y="9.5" width="3" height="1.6" fill="#8a8a8a"/><rect x="3.5" y="11" width="7" height="1.4" fill="#8a8a8a"/></svg>
<svg style="left:732px;top:91px" width="18" height="18"><circle cx="9" cy="9" r="3" fill="#8a8a8a"/><path d="M9 0.5v3.5M9 14v3.5M0.5 9h3.5M14 9h3.5M3 3l2.4 2.4M12.6 12.6L15 15M3 15l2.4-2.4M12.6 5.4L15 3" stroke="#8a8a8a" stroke-width="1.3"/></svg>
<svg style="left:762px;top:91px" width="18" height="18"><circle cx="9" cy="9" r="3" fill="#8a8a8a"/><path d="M9 0.5v3.5M9 14v3.5M0.5 9h3.5M14 9h3.5M3 3l2.4 2.4M12.6 12.6L15 15M3 15l2.4-2.4M12.6 5.4L15 3" stroke="#8a8a8a" stroke-width="1.3"/></svg>
<svg style="left:794px;top:94px" width="15" height="11"><rect x="0" y="0.5" width="9.5" height="10" rx="1" fill="#8a8a8a"/><path d="M9 4L14.5 0.5V10.5L9 7z" fill="#8a8a8a"/></svg>
<div class="t" style="left:253px;top:677px;font-size:15px;line-height:17px;color:#1434f5">www.historian.by</div>
<div class="a" style="left:825px;top:59px;width:195px;height:210px;border:1px solid #4e4e4e;background:#3a3a3a"></div>
<div class="hdr" style="left:826px;top:60px;width:193px;height:19px"></div><div class="ht" style="left:831px;top:63px">Объекты</div><svg style="left:974px;top:68px" width="8" height="5"><path d="M0 0h8L4 4.5z" fill="#9a9a9a"/></svg><svg style="left:990px;top:64px" width="8" height="11"><path d="M2 0.5h4v5.5M2 0.5v5.5M0.5 6.5h7M4 6.5v4" fill="none" stroke="#a0a0a0" stroke-width="1.2"/></svg><svg style="left:1004px;top:65px" width="10" height="10"><path d="M1 1L9 9M9 1L1 9" stroke="#a8a8a8" stroke-width="1.9"/></svg>
<div class="a" style="left:826px;top:79px;width:193px;height:1px;background:#4e4e4e"></div>
<div class="a" style="left:826px;top:103px;width:193px;height:1px;background:#4e4e4e"></div>
<div class="a" style="left:826px;top:104px;width:176px;height:148px;background:#262626"></div>
<div class="a" style="left:826px;top:104px;width:176px;height:18px;background:#3a3a3a"></div>
<div class="a" style="left:1002px;top:104px;width:17px;height:148px;background:#2e2e2e"></div>
<div class="a" style="left:1002px;top:120px;width:16px;height:67px;background:#3e3e3e"></div>
<svg style="left:1006px;top:109px" width="9" height="6"><path d="M0.5 5L4.5 1L8.5 5" fill="none" stroke="#8c8c8c" stroke-width="1.3"/></svg>
<svg style="left:1006px;top:242px" width="9" height="6"><path d="M0.5 1L4.5 5L8.5 1" fill="none" stroke="#8c8c8c" stroke-width="1.3"/></svg>
<div class="a" style="left:826px;top:252px;width:193px;height:16px;background:#2e2e2e"></div>
<div class="a" style="left:842px;top:252px;width:73px;height:16px;background:#3e3e3e"></div>
<svg style="left:831px;top:255px" width="6" height="9"><path d="M5 0.5L1 4.5L5 8.5" fill="none" stroke="#8c8c8c" stroke-width="1.3"/></svg>
<svg style="left:990px;top:255px" width="6" height="9"><path d="M1 0.5L5 4.5L1 8.5" fill="none" stroke="#8c8c8c" stroke-width="1.3"/></svg>
<div class="a" style="left:826px;top:104px;width:176px;height:148px;overflow:hidden">
<div class="t" style="left:42px;top:2px;font-size:10.6px;color:#ececec">'Корень' - Scene</div>
<div class="t" style="left:60px;top:20px;font-size:10.6px;color:#ececec">Camera Editor - Camera</div>
<div class="t" style="left:60px;top:38px;font-size:10.6px;color:#ececec">Ambient Light - Light</div>
<div class="t" style="left:60px;top:56px;font-size:10.6px;color:#ececec">Light 1 - Light</div>
<div class="t" style="left:60px;top:74px;font-size:10.6px;color:#ececec">Rendering Pipeline - Rendering</div>
<div class="t" style="left:60px;top:92px;font-size:10.6px;color:#ececec">Game Mode - GameMode</div>
<div class="t" style="left:60px;top:110px;font-size:10.6px;color:#7a7a7a">Light 2 - Light</div>
<div class="t" style="left:60px;top:128px;font-size:10.6px;color:#ececec">Ground - MeshInSpace</div>
</div>
<div class="a" style="left:833px;top:108px;width:8px;height:8px;background:#363636"></div><div class="a" style="left:835px;top:111px;width:5px;height:1px;background:#a8a8a8"></div>
<div class="a" style="left:851px;top:181px;width:8px;height:8px;background:#363636"></div><div class="a" style="left:853px;top:184px;width:5px;height:1px;background:#a8a8a8"></div><div class="a" style="left:855px;top:182px;width:1px;height:5px;background:#a8a8a8"></div>
<div class="a" style="left:851px;top:235px;width:8px;height:8px;background:#363636"></div><div class="a" style="left:853px;top:238px;width:5px;height:1px;background:#a8a8a8"></div><div class="a" style="left:855px;top:236px;width:1px;height:5px;background:#a8a8a8"></div>
<div class="a" style="left:825px;top:274px;width:195px;height:427px;border:1px solid #4e4e4e;background:#3a3a3a"></div>
<div class="hdr" style="left:826px;top:275px;width:193px;height:19px"></div><div class="ht" style="left:831px;top:278px">Настройки</div><svg style="left:974px;top:283px" width="8" height="5"><path d="M0 0h8L4 4.5z" fill="#9a9a9a"/></svg><svg style="left:990px;top:279px" width="8" height="11"><path d="M2 0.5h4v5.5M2 0.5v5.5M0.5 6.5h7M4 6.5v4" fill="none" stroke="#a0a0a0" stroke-width="1.2"/></svg><svg style="left:1004px;top:280px" width="10" height="10"><path d="M1 1L9 9M9 1L1 9" stroke="#a8a8a8" stroke-width="1.9"/></svg>
<div class="a" style="left:826px;top:294px;width:193px;height:1px;background:#4e4e4e"></div>
<div class="t" style="left:832px;top:301px;font-size:12px;font-weight:bold;color:#ececec">Scene</div>
<div class="t" style="left:832px;top:321px;font-size:12px;color:#ececec">Scene</div>
<div class="a" style="left:829px;top:341px;width:20px;height:21px;background:#555555"></div>
<div class="a" style="left:828px;top:365px;width:174px;height:17px;background:#2a2a2a"></div>
<div class="t" style="left:831px;top:367px;font-size:12px;color:#b5b5b5">Компонент</div>
<div class="a" style="left:828px;top:477px;width:174px;height:17px;background:#2a2a2a"></div>
<div class="t" style="left:831px;top:479px;font-size:12px;color:#b5b5b5">Сцена</div>
<div class="a" style="left:1002px;top:365px;width:16px;height:286px;background:#2e2e2e"></div>
<div class="a" style="left:1002px;top:377px;width:16px;height:47px;background:#3e3e3e"></div>
<svg style="left:1006px;top:368px" width="9" height="6"><path d="M0.5 5L4.5 1L8.5 5" fill="none" stroke="#8c8c8c" stroke-width="1.3"/></svg>
<svg style="left:1006px;top:643px" width="9" height="6"><path d="M0.5 1L4.5 5L8.5 1" fill="none" stroke="#8c8c8c" stroke-width="1.3"/></svg>
<div class="a" style="left:906px;top:383px;width:6px;height:92px;background:#333333"></div>
<div class="a" style="left:906px;top:495px;width:6px;height:156px;background:#333333"></div>
<div class="t" style="left:847px;top:388px;font-size:11px;color:#ececec">Включено</div>
<div class="t" style="left:847px;top:411px;font-size:11px;color:#ececec">Name</div>
<div class="t" style="left:847px;top:434px;font-size:11px;color:#ececec">Screen L...</div>
<div class="t" style="left:847px;top:457px;font-size:11px;color:#ececec">Network ...</div>
<div class="t" style="left:847px;top:501px;font-size:11px;color:#ececec">Renderin...</div>
<div class="t" style="left:847px;top:524px;font-size:11px;color:#ececec">Backgro...</div>
<div class="t" style="left:847px;top:547px;font-size:11px;color:#ececec">Backgro...</div>
<div class="t" style="left:847px;top:570px;font-size:11px;color:#ececec">UI Screen</div>
<div class="t" style="left:847px;top:593px;font-size:11px;color:#ececec">Mode</div>
<div class="t" style="left:847px;top:616px;font-size:11px;color:#ececec">Screen ...</div>
<div class="t" style="left:847px;top:639px;font-size:11px;color:#ececec">Camera ...</div>
<div class="a" style="left:952px;top:388px;width:13px;height:13px;border:1px solid #8a8a8a;background:#262626"></div>
<svg style="left:953px;top:389px" width="11" height="11"><path d="M1.5 5.5L4.5 8.5L10 2" fill="none" stroke="#fff" stroke-width="2"/></svg>
<div class="a" style="left:951px;top:409px;width:49px;height:18px;border:1px solid #5a5a5a;background:#262626"></div>
<div class="a" style="left:926px;top:432px;width:22px;height:18px;border:1px solid #5a5a5a;background:#3a3a3a"></div>
<div class="a" style="left:951px;top:432px;width:49px;height:19px;border:1px solid #5a5a5a;background:#3a3a3a"></div><div class="t" style="left:956px;top:434px;font-size:11px;color:#ececec">Auto</div><svg style="left:986px;top:440px" width="8" height="5"><path d="M0 0h8L4 4.5z" fill="#9a9a9a"/></svg>
<div class="a" style="left:926px;top:455px;width:22px;height:18px;border:1px solid #5a5a5a;background:#3a3a3a"></div>
<div class="a" style="left:951px;top:455px;width:49px;height:19px;border:1px solid #5a5a5a;background:#3a3a3a"></div><div class="t" style="left:956px;top:457px;font-size:11px;color:#ececec">True</div><svg style="left:986px;top:463px" width="8" height="5"><path d="M0 0h8L4 4.5z" fill="#9a9a9a"/></svg>
<div class="a" style="left:916px;top:504px;width:5px;height:5px;border-radius:3px;background:#7a7a7a"></div>
<div class="a" style="left:926px;top:498px;width:22px;height:18px;border:1px solid #5a5a5a;background:#3a3a3a"></div>
<svg style="left:934px;top:503px" width="6" height="9"><path d="M0 0L5.5 4.5L0 9z" fill="#b0b0b0"/></svg>
<div class="t" style="left:955px;top:502px;font-size:11px;color:#ececec">Renderir</div>
<div class="a" style="left:830px;top:523px;width:14px;height:14px;border:1px solid #555;background:#3a3a3a"></div>
<div class="a" style="left:834px;top:530px;width:7px;height:1px;background:#ccc"></div><div class="a" style="left:837px;top:527px;width:1px;height:7px;background:#ccc"></div>
<div class="a" style="left:926px;top:521px;width:22px;height:18px;border:1px solid #5a5a5a;background:#3a3a3a"></div>
<div class="a" style="left:951px;top:521px;width:27px;height:18px;border:1px solid #5a5a5a;background:#262626"></div>
<div class="t" style="left:955px;top:523px;font-size:11px;color:#ececec">1 1</div>
<div class="a" style="left:980px;top:522px;width:19px;height:17px;background:#ffffff;border:1px solid #777"></div>
<div class="a" style="left:926px;top:544px;width:22px;height:18px;border:1px solid #5a5a5a;background:#3a3a3a"></div>
<div class="a" style="left:951px;top:544px;width:48px;height:18px;border:1px solid #5a5a5a;background:#262626"></div>
<div class="t" style="left:955px;top:546px;font-size:11px;color:#ececec">1</div>
<div class="a" style="left:926px;top:567px;width:22px;height:18px;border:1px solid #5a5a5a;background:#3a3a3a"></div>
<div class="t" style="left:955px;top:570px;font-size:11px;color:#ececec">(Null)</div>
<div class="a" style="left:926px;top:590px;width:22px;height:18px;border:1px solid #5a5a5a;background:#3a3a3a"></div>
<div class="a" style="left:951px;top:590px;width:49px;height:19px;border:1px solid #5a5a5a;background:#3a3a3a"></div><div class="t" style="left:956px;top:592px;font-size:11px;color:#ececec">3D</div><svg style="left:986px;top:598px" width="8" height="5"><path d="M0 0h8L4 4.5z" fill="#9a9a9a"/></svg>
<div class="a" style="left:926px;top:613px;width:22px;height:18px;border:1px solid #5a5a5a;background:#3a3a3a"></div>
<div class="a" style="left:951px;top:613px;width:49px;height:19px;border:1px solid #5a5a5a;background:#3a3a3a"></div><div class="t" style="left:956px;top:615px;font-size:11px;color:#ececec">Un...</div><svg style="left:986px;top:621px" width="8" height="5"><path d="M0 0h8L4 4.5z" fill="#9a9a9a"/></svg>
<div class="a" style="left:826px;top:636px;width:176px;height:15px;overflow:hidden">
<div class="a" style="left:90px;top:5px;width:5px;height:5px;border-radius:3px;background:#7a7a7a"></div>
<div class="a" style="left:100px;top:0px;width:22px;height:18px;border:1px solid #5a5a5a;background:#3a3a3a"></div>
<svg style="left:108px;top:4px" width="6" height="9"><path d="M0 0L5.5 4.5L0 9z" fill="#b0b0b0"/></svg>
<div class="t" style="left:129px;top:2px;font-size:11px;color:#ececec">Camera</div>
<div class="a" style="left:171px;top:3px;width:1px;height:11px;background:#3a6ab0"></div>
</div>
<div class="a" style="left:833px;top:659px;width:93px;height:27px;border:1px solid #5f5f5f;background:#3c3c3c"></div>
<div class="t" style="left:868px;top:665px;font-size:12px;color:#ececec">Info</div>
<svg style="left:829px;top:84px" width="16" height="16" viewBox="0 0 16 16"><path d="M1 1L7.5 7.5" stroke="#c8c8c8" stroke-width="1"/><path d="M7.5 7.5L14.5 14.5" stroke="#3c8ee0" stroke-width="2.6" stroke-linecap="round"/><path d="M1.8 14.2L9.5 6.5" stroke="#f4f4f4" stroke-width="2.8" stroke-linecap="round"/><circle cx="2.3" cy="13.7" r="0.7" fill="#666"/><path d="M8.2 4.2A3.6 3.6 0 0 0 11.8 7.8L15.5 4.3L14 2.8L12 4.6L11.4 4L13.2 2L11.7 0.5A3.6 3.6 0 0 0 8.2 4.2z" fill="#f4f4f4"/></svg>
<svg style="left:849px;top:84px" width="16" height="16" viewBox="0 0 16 16"><path d="M6 8.5V12.5H10" fill="none" stroke="#a0a0a0" stroke-width="1"/><path d="M5 0.5L9.5 5L4.5 10L0 5.5z" fill="#d4b020"/><path d="M11.5 4.5L15 8L11.5 11.5L8 8z" fill="#30b8f0"/><path d="M12 9.5L15.2 12.7L12 15.9L8.8 12.7z" fill="#e060c0"/></svg>
<div class="a" style="left:870px;top:83px;width:2px;height:17px;background:#2a2a2a"></div>
<svg style="left:875px;top:84px" width="17" height="16" viewBox="0 0 17 16"><path d="M0.5 0.5h8l4 4v11h-12z" fill="#f0f0f0" stroke="#c8c8c8" stroke-width="0.8"/><path d="M8.5 0.5v4h4" fill="#d8d8d8" stroke="#aaa" stroke-width="0.7"/><path d="M6 15L15 6" stroke="#e8a020" stroke-width="3"/><path d="M14 7L16.5 4.5" stroke="#e070b0" stroke-width="3"/><path d="M5 16L6.5 13.5" stroke="#333" stroke-width="1"/></svg>
<svg style="left:896px;top:85px" width="16" height="14" viewBox="0 0 16 14"><rect x="3.5" y="0.5" width="12" height="9" rx="1" fill="#6a9ad8" stroke="#3a70c0" stroke-width="0.8"/><rect x="0.5" y="3.5" width="12" height="10" rx="1" fill="#8ab8f0" stroke="#3a70c0" stroke-width="0.8"/><rect x="1.5" y="6" width="10" height="6.5" fill="#f4f8ff"/></svg>
<div class="a" style="left:916px;top:83px;width:2px;height:17px;background:#2a2a2a"></div>
<svg style="left:921px;top:84px" width="16" height="16" viewBox="0 0 16 16"><path d="M0.5 0.5h8l4 4v10.5h-12z" fill="#eeeeee" stroke="#cfcfcf" stroke-width="1"/><path d="M8.5 0.5v4h4" fill="#dcdcdc" stroke="#bbb" stroke-width="0.8"/><path d="M11.5 7.5l1.3 2.7 2.9 0.3-2.2 1.9 0.7 2.9-2.7-1.5-2.7 1.5 0.7-2.9-2.2-1.9 2.9-0.3z" fill="#f8cf50" stroke="#e89a20" stroke-width="0.9"/></svg>
<svg style="left:943px;top:87px" width="12" height="11" viewBox="0 0 12 11"><path d="M1 1L11 10M11 1L1 10" stroke="#6a6a6a" stroke-width="2.4"/></svg>
<svg style="left:961px;top:86px" width="17" height="12" viewBox="0 0 17 12"><rect x="0.5" y="0.5" width="16" height="11" fill="#ffffff"/><rect x="1.5" y="1.5" width="14" height="9" fill="#2a2a2a"/><rect x="2.5" y="2.5" width="12" height="7" fill="#f0f0f0"/><path d="M4 3h3M5.5 3v6M4 9h3" stroke="#222" stroke-width="0.9"/></svg>
<svg style="left:981px;top:84px" width="15" height="16" viewBox="0 0 15 16"><path d="M0.5 0.5h7l3 3v9h-10z" fill="#a0a0a0"/><path d="M4 3.5h6.5l4 4v8.5h-10.5z" fill="#b0b0b0" stroke="#8a8a8a" stroke-width="0.6"/><path d="M6 9.5h6.5M6 11.5h6.5M6 13.5h6.5" stroke="#8c8c8c" stroke-width="0.9"/></svg>
<svg style="left:847px;top:106px" width="15" height="15" viewBox="0 0 15 15"><rect x="0" y="0" width="15" height="15" fill="#8fd4f4"/><path d="M0 5h15M0 10h15M5 0v15M10 0v15" stroke="#6ab8e0" stroke-width="0.8"/><rect x="0" y="9" width="3" height="6" fill="#e8e090"/><rect x="0" y="13" width="2" height="2" fill="#60c040"/><rect x="10" y="2" width="3" height="2.5" fill="#e01010"/><path d="M6.5 8L8.5 11.5H4.5z" fill="#111"/><path d="M6.5 11.5V15" stroke="#c09090" stroke-width="1"/></svg>
<svg style="left:865px;top:124px" width="17" height="12" viewBox="0 0 17 12"><rect x="2" y="0.5" width="10" height="2" fill="#8a8a8a"/><rect x="0.5" y="2.5" width="12" height="9" rx="1" fill="#9a9a9a" stroke="#666" stroke-width="0.8"/><rect x="3" y="5" width="7.5" height="4.5" fill="#3a9ae8"/><path d="M12.5 6L16.5 2.5V11.5L12.5 8z" fill="#8a8a8a"/></svg>
<svg style="left:867px;top:141px" width="13" height="16" viewBox="0 0 13 16"><circle cx="6.5" cy="6" r="5.8" fill="#f7d98c"/><path d="M4 5l1.3 2 1.2-2 1.2 2 1.3-2" stroke="#c8a860" stroke-width="0.6" fill="none" opacity="0.7"/><rect x="4" y="11" width="5" height="4" rx="1" fill="#8a98a8"/><path d="M4 12.5h5" stroke="#5a6a7a" stroke-width="0.6"/></svg>
<svg style="left:867px;top:159px" width="13" height="16" viewBox="0 0 13 16"><circle cx="6.5" cy="6" r="5.8" fill="#f7d98c"/><path d="M4 5l1.3 2 1.2-2 1.2 2 1.3-2" stroke="#c8a860" stroke-width="0.6" fill="none" opacity="0.7"/><rect x="4" y="11" width="5" height="4" rx="1" fill="#8a98a8"/><path d="M4 12.5h5" stroke="#5a6a7a" stroke-width="0.6"/></svg>
<svg style="left:865px;top:177px" width="16" height="15" viewBox="0 0 16 15"><defs><linearGradient id="rb" x1="0" y1="0" x2="1" y2="0"><stop offset="0" stop-color="#20c0ff"/><stop offset="0.25" stop-color="#40e040"/><stop offset="0.5" stop-color="#ffe020"/><stop offset="0.75" stop-color="#ff4040"/><stop offset="1" stop-color="#c040ff"/></linearGradient><linearGradient id="rw" x1="0" y1="0" x2="0" y2="1"><stop offset="0" stop-color="#fff" stop-opacity="0"/><stop offset="1" stop-color="#fff" stop-opacity="0.7"/></linearGradient></defs><rect x="0.5" y="0.5" width="15" height="14" fill="#f0f0f0" stroke="#2a88d8" stroke-width="1"/><rect x="1" y="1" width="14" height="2.5" fill="#2a88d8"/><rect x="2" y="4.5" width="12" height="8.5" fill="url(#rb)"/><rect x="2" y="4.5" width="12" height="8.5" fill="url(#rw)"/></svg>
<svg style="left:865px;top:196px" width="16" height="13" viewBox="0 0 16 13"><path d="M8 0.5V3" stroke="#ddd" stroke-width="1"/><path d="M3 3h10c2 0 3 3 3 6s-1 3.5-2 3.5-2-2-3-2.5H5c-1 0.5-2 2.5-3 2.5S0 12 0 9s1-6 3-6z" fill="#f2f2f2"/><path d="M2.5 7h3M4 5.5v3" stroke="#50a030" stroke-width="1.2"/><circle cx="11.5" cy="6" r="0.9" fill="#e03030"/><circle cx="13" cy="7.3" r="0.9" fill="#3070e0"/><circle cx="10" cy="7.3" r="0.9" fill="#30a030"/><rect x="7" y="7" width="2" height="1" fill="#888"/></svg>
<svg style="left:867px;top:213px" width="13" height="16" viewBox="0 0 13 16"><circle cx="6.5" cy="6" r="5.8" fill="#8a8a8a"/><path d="M4 5l1.3 2 1.2-2 1.2 2 1.3-2" stroke="#c8a860" stroke-width="0.6" fill="none" opacity="0.7"/><rect x="4" y="11" width="5" height="4" rx="1" fill="#7a7a7a"/><path d="M4 12.5h5" stroke="#5a6a7a" stroke-width="0.6"/></svg>
<svg style="left:865px;top:231px" width="16" height="16" viewBox="0 0 16 16"><path d="M8 1L15.5 4.5V11.5L8 15.5L0.5 11.5V4.5z" fill="#9cd0f4"/><path d="M0.5 4.5L8 8.5L15.5 4.5M8 8.5V15.5" fill="none" stroke="#e8f6ff" stroke-width="1"/><path d="M8 8.5L15.5 4.5V11.5L8 15.5z" fill="#78b4e4"/><ellipse cx="8" cy="3.5" rx="2.5" ry="1.2" fill="#c8eaff"/></svg>
<div class="a" style="left:868px;top:249px;width:9px;height:3px;border-radius:4px 4px 0 0;background:#f0a040"></div>
<svg style="left:998px;top:299px" width="16" height="16" viewBox="0 0 16 16"><path d="M6 8.5V12.5H10" fill="none" stroke="#a0a0a0" stroke-width="1"/><path d="M5 0.5L9.5 5L4.5 10L0 5.5z" fill="#d4b020"/><path d="M11.5 4.5L15 8L11.5 11.5L8 8z" fill="#30b8f0"/><path d="M12 9.5L15.2 12.7L12 15.9L8.8 12.7z" fill="#e060c0"/></svg>
<svg style="left:831px;top:344px" width="16" height="14" viewBox="0 0 16 14"><rect x="0.5" y="1.5" width="14" height="12" rx="1" fill="#f4f4f4" stroke="#2a70c0" stroke-width="1"/><rect x="1" y="2" width="13" height="2" fill="#3a88e0"/><circle cx="2.6" cy="6" r="0.8" fill="#30b030"/><circle cx="2.6" cy="8" r="0.8" fill="#d04040"/><circle cx="2.6" cy="10" r="0.8" fill="#4080f0"/><circle cx="2.6" cy="12" r="0.8" fill="#333"/><path d="M4 7L9 2L16 1.5L15 5L10 9z" fill="#d8a870"/><path d="M5 6l3 3M7 4l3 3M9 2.5l3 3" stroke="#a87040" stroke-width="0.7"/></svg>
<svg style="left:854px;top:345px" width="12" height="15" viewBox="0 0 12 15"><path d="M4 0.5H11.5L7.5 5.5H10.5L2 14.5L4.5 7.5H1.5z" fill="#f4cc20" stroke="#c89810" stroke-width="0.7"/></svg></body></html>
